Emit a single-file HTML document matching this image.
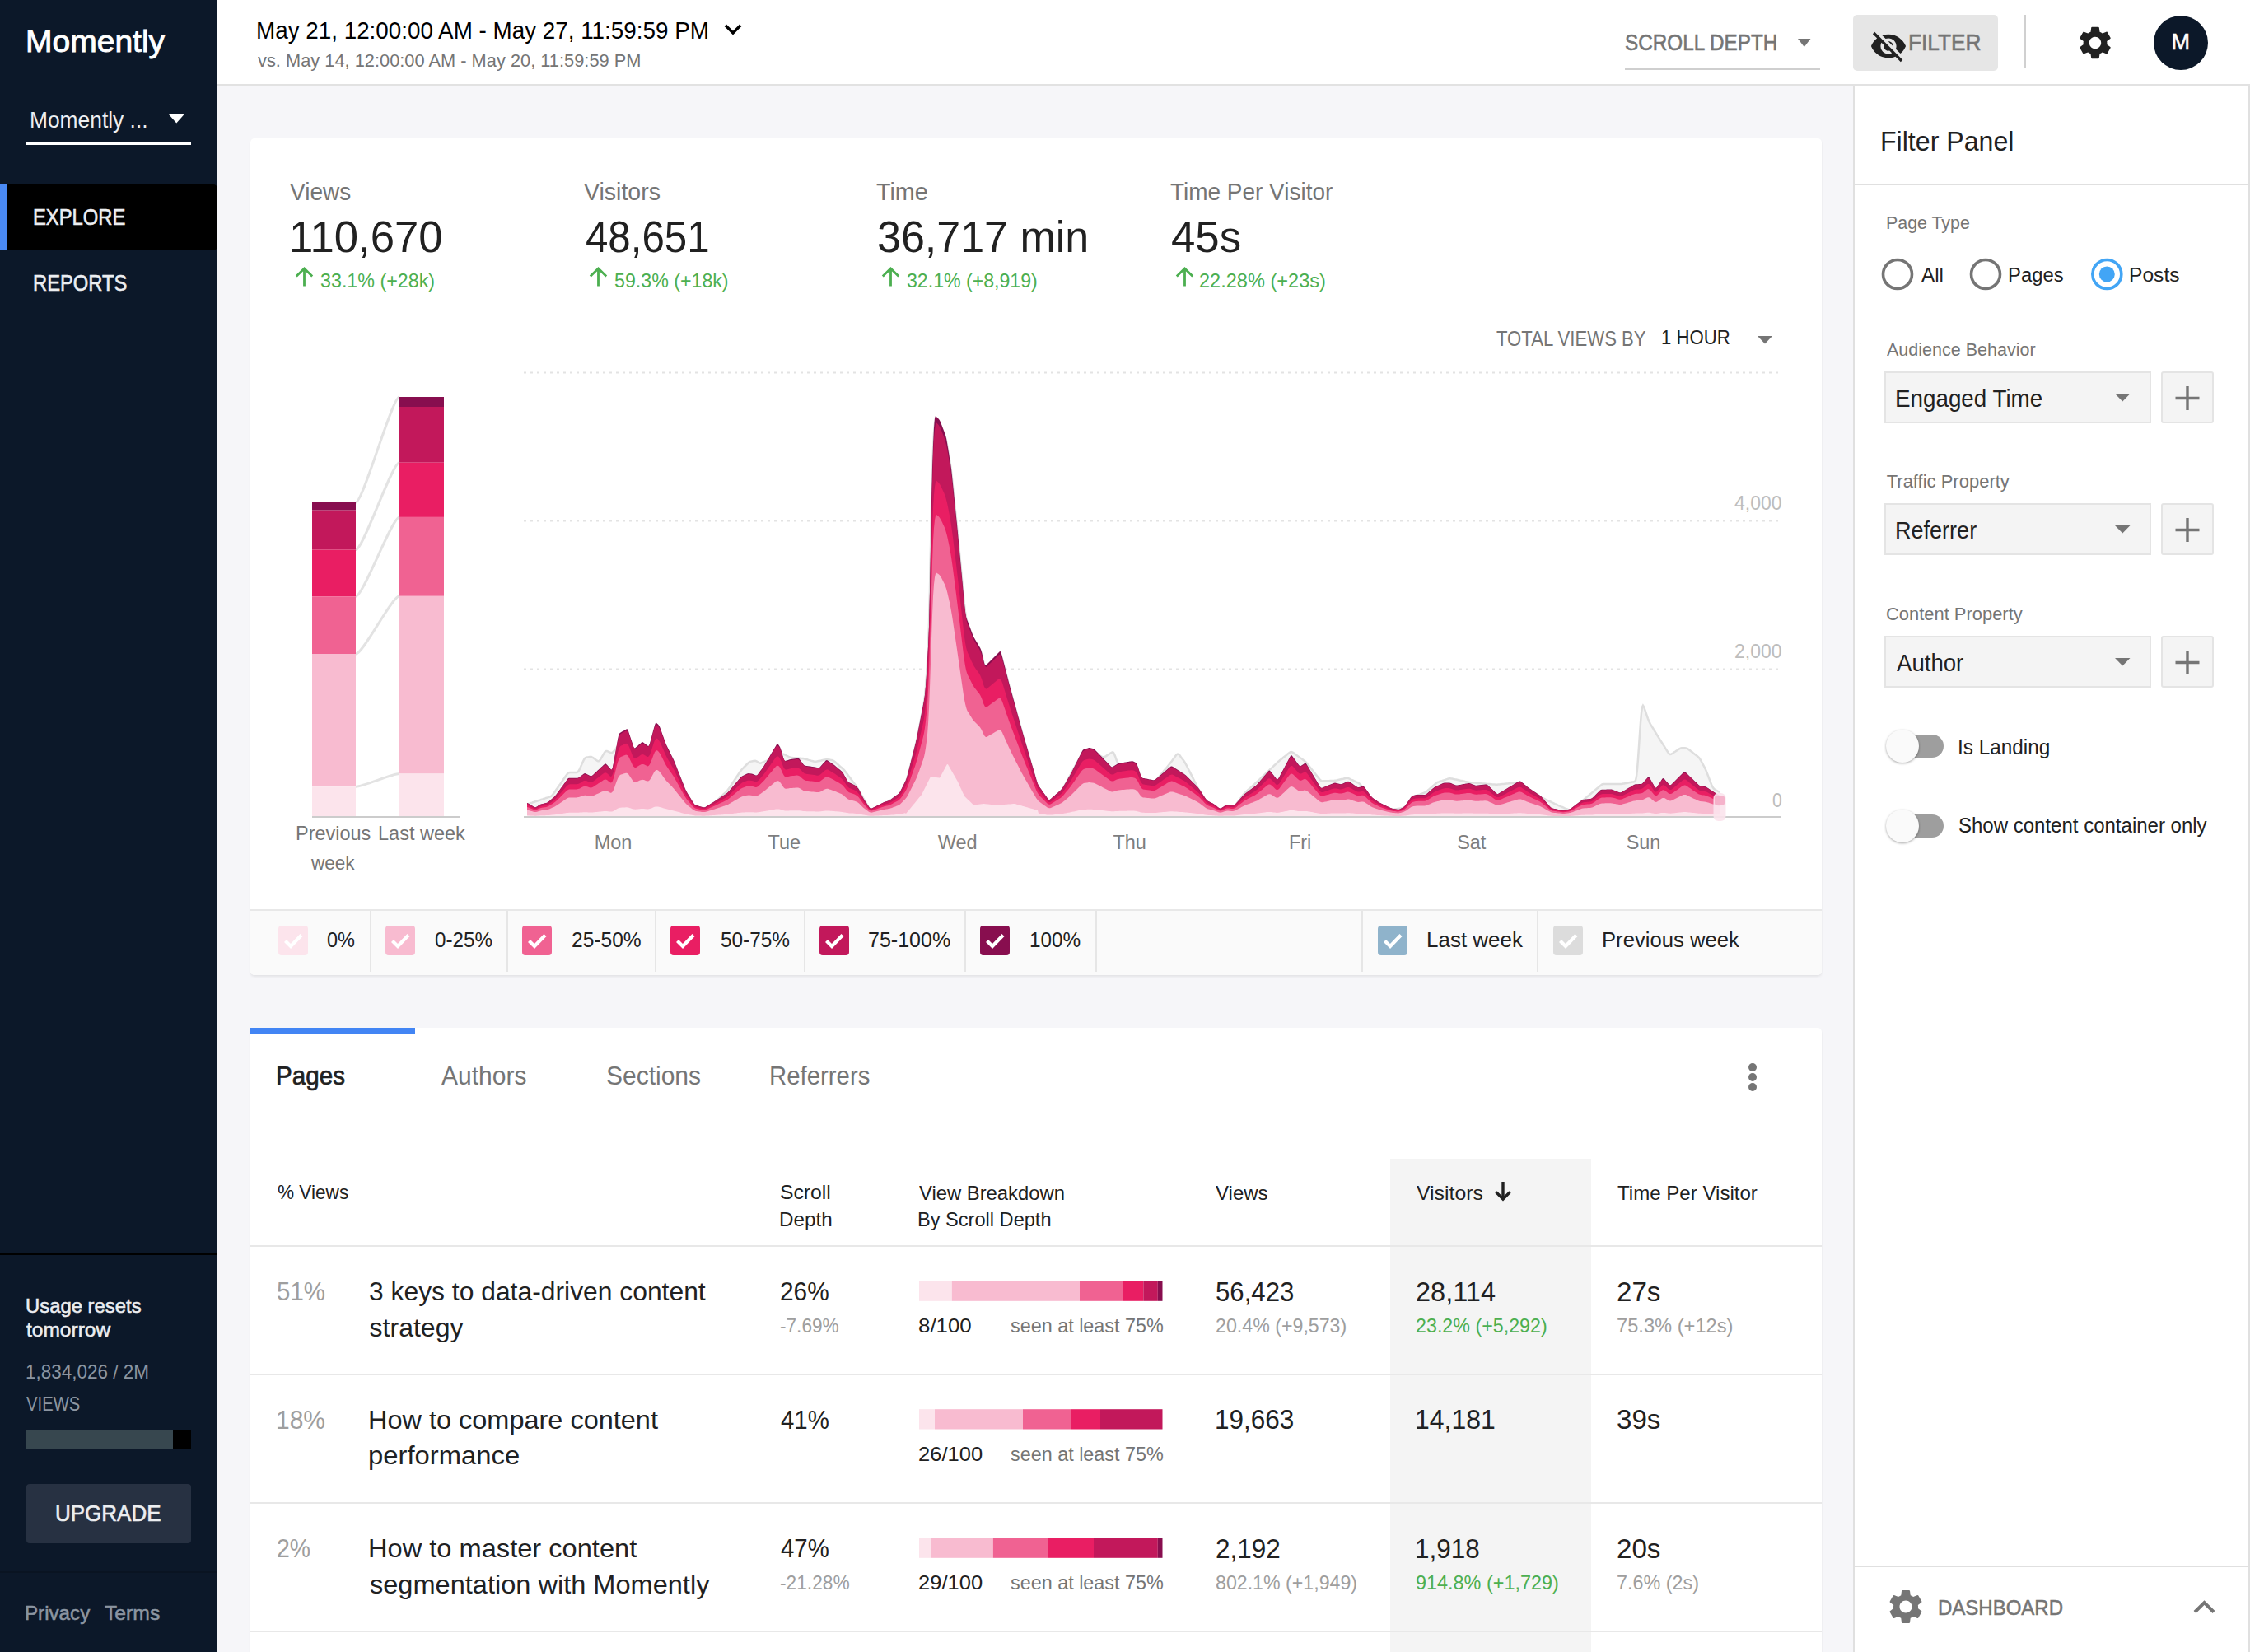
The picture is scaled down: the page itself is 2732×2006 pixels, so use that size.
<!DOCTYPE html>
<html><head><meta charset="utf-8"><title>Momently</title>
<style>
*{margin:0;padding:0;box-sizing:border-box}
html,body{width:2732px;height:2006px;overflow:hidden;background:#f6f6f9;font-family:"Liberation Sans",sans-serif;color:#212121;position:relative}
.a{position:absolute;white-space:nowrap}

</style></head><body>
<div class="a" style="left:0px;top:0px;width:264px;height:2006px;background:#0c1829;"></div>
<div class="a" style="left:264px;top:0px;width:2468px;height:102px;background:#fff;"></div>
<div class="a" style="left:264px;top:102px;width:2468px;height:2px;background:#e2e2e2;"></div>
<div class="a" style="left:2250px;top:104px;width:482px;height:1902px;background:#fff;border-left:2px solid #e0e0e0;border-right:2px solid #e0e0e0"></div>
<div class="a" style="left:304px;top:168px;width:1908px;height:1016px;background:#fff;border-radius:5px;box-shadow:0 2px 3px rgba(0,0,0,0.08)"></div>
<div class="a" style="left:304px;top:1248px;width:1908px;height:900px;background:#fff;border-radius:5px;box-shadow:0 2px 3px rgba(0,0,0,0.08)"></div>
<div class="a" style="left:304px;top:1104px;width:1908px;height:80px;background:#fafafa;border-top:2px solid #e8e8e8;border-radius:0 0 5px 5px"></div>
<div class="a" style="left:0px;top:224px;width:264px;height:80px;background:#000;border-radius:0 5px 5px 0"></div>
<div class="a" style="left:0px;top:1521px;width:264px;height:3px;background:#000;"></div>
<div class="a" style="left:32px;top:1736px;width:200px;height:24px;background:#37474f;"></div>
<div class="a" style="left:32px;top:1802px;width:200px;height:72px;background:#273142;border-radius:4px"></div>
<div class="a" style="left:0px;top:1908px;width:264px;height:2px;background:#0a1422;"></div>
<div class="a" style="left:2250px;top:18px;width:176px;height:68px;background:#e6e6e6;border-radius:5px"></div>
<div class="a" style="left:1688px;top:1407px;width:244px;height:700px;background:#f4f4f4;"></div>
<div class="a" style="left:0px;top:224px;width:8px;height:80px;background:#4a8af4;"></div>
<div class="a" style="left:210px;top:1736px;width:22px;height:24px;background:#000;"></div>
<svg class="a" style="left:0;top:0" width="2732" height="2006"><line x1="636" y1="452.5" x2="2163" y2="452.5" stroke="#e3e3e3" stroke-width="2" stroke-dasharray="3 5"/>
<line x1="636" y1="632.5" x2="2163" y2="632.5" stroke="#e3e3e3" stroke-width="2" stroke-dasharray="3 5"/>
<line x1="636" y1="812.5" x2="2163" y2="812.5" stroke="#e3e3e3" stroke-width="2" stroke-dasharray="3 5"/>
<polygon points="640,992.0 640.0,976.5 641.0,976.3 642.0,976.0 643.0,975.7 644.0,975.3 645.0,975.0 646.0,974.7 647.0,974.3 648.0,974.0 649.0,973.7 650.0,973.3 651.0,973.0 652.0,972.7 653.0,972.4 654.0,972.0 655.0,971.7 656.0,971.4 657.0,971.0 658.0,970.7 659.0,970.4 660.0,970.0 661.0,969.7 662.0,969.4 663.0,969.0 664.0,968.7 665.0,968.4 666.0,968.0 667.0,967.7 668.0,967.4 669.0,966.9 670.0,966.2 671.0,965.1 672.0,963.8 673.0,962.4 674.0,961.0 675.0,959.5 676.0,958.1 677.0,956.7 678.0,955.2 679.0,953.8 680.0,952.4 681.0,950.9 682.0,949.5 683.0,948.0 684.0,946.6 685.0,945.2 686.0,943.7 687.0,942.3 688.0,940.9 689.0,939.6 690.0,938.6 691.0,938.2 692.0,938.0 693.0,938.0 694.0,938.0 695.0,938.0 696.0,938.0 697.0,938.0 698.0,938.0 699.0,938.0 700.0,938.0 701.0,937.7 702.0,937.0 703.0,935.5 704.0,933.5 705.0,931.2 706.0,929.0 707.0,926.7 708.0,924.5 709.0,922.5 710.0,920.9 711.0,920.1 712.0,919.7 713.0,919.5 714.0,919.4 715.0,919.2 716.0,919.0 717.0,919.0 718.0,919.1 719.0,919.5 720.0,920.1 721.0,920.8 722.0,921.5 723.0,922.2 724.0,923.0 725.0,923.7 726.0,924.2 727.0,924.2 728.0,923.6 729.0,922.2 730.0,920.6 731.0,918.8 732.0,917.1 733.0,915.3 734.0,913.7 735.0,912.6 736.0,912.1 737.0,912.1 738.0,912.4 739.0,912.9 740.0,913.3 741.0,913.7 742.0,914.0 743.0,914.0 744.0,913.5 745.0,912.5 746.0,911.3 747.0,910.0 748.0,908.8 749.0,907.5 750.0,906.2 751.0,905.0 752.0,903.6 753.0,902.3 754.0,900.9 755.0,899.5 756.0,898.2 757.0,896.8 758.0,895.5 759.0,894.1 760.0,892.7 761.0,891.8 762.0,891.8 763.0,893.2 764.0,895.5 765.0,898.2 766.0,901.0 767.0,903.8 768.0,906.5 769.0,908.9 770.0,910.4 771.0,910.8 772.0,910.4 773.0,909.6 774.0,908.8 775.0,908.0 776.0,907.2 777.0,906.4 778.0,905.6 779.0,905.0 780.0,904.7 781.0,904.9 782.0,905.5 783.0,906.2 784.0,907.0 785.0,907.8 786.0,908.5 787.0,908.7 788.0,908.0 789.0,905.7 790.0,902.5 791.0,898.8 792.0,895.0 793.0,891.2 794.0,887.5 795.0,884.4 796.0,882.6 797.0,882.7 798.0,884.1 799.0,886.1 800.0,888.2 801.0,890.2 802.0,892.3 803.0,894.3 804.0,896.4 805.0,898.4 806.0,900.5 807.0,902.5 808.0,904.6 809.0,906.6 810.0,908.7 811.0,910.7 812.0,912.7 813.0,914.8 814.0,916.8 815.0,918.9 816.0,920.9 817.0,923.0 818.0,925.2 819.0,927.6 820.0,930.0 821.0,932.6 822.0,935.1 823.0,937.6 824.0,940.1 825.0,942.6 826.0,945.1 827.0,947.7 828.0,950.2 829.0,952.7 830.0,955.2 831.0,957.7 832.0,960.0 833.0,962.2 834.0,964.0 835.0,965.7 836.0,967.3 837.0,968.9 838.0,970.5 839.0,972.1 840.0,973.7 841.0,975.3 842.0,976.8 843.0,978.1 844.0,978.9 845.0,979.4 846.0,979.7 847.0,979.9 848.0,980.2 849.0,980.4 850.0,980.7 851.0,980.9 852.0,981.2 853.0,981.4 854.0,981.6 855.0,981.6 856.0,981.4 857.0,981.0 858.0,980.4 859.0,979.8 860.0,979.3 861.0,978.7 862.0,978.1 863.0,977.5 864.0,976.9 865.0,976.3 866.0,975.7 867.0,975.1 868.0,974.3 869.0,973.4 870.0,972.5 871.0,971.5 872.0,970.6 873.0,969.7 874.0,968.7 875.0,967.8 876.0,966.8 877.0,965.9 878.0,965.0 879.0,964.0 880.0,963.1 881.0,962.2 882.0,961.2 883.0,960.1 884.0,958.8 885.0,957.4 886.0,956.0 887.0,954.5 888.0,953.0 889.0,951.5 890.0,950.0 891.0,948.5 892.0,947.0 893.0,945.5 894.0,944.0 895.0,942.5 896.0,941.0 897.0,939.5 898.0,938.0 899.0,936.6 900.0,935.2 901.0,934.1 902.0,933.0 903.0,932.0 904.0,931.0 905.0,930.0 906.0,929.0 907.0,928.0 908.0,927.0 909.0,926.1 910.0,925.4 911.0,924.9 912.0,924.6 913.0,924.4 914.0,924.2 915.0,924.0 916.0,923.9 917.0,923.8 918.0,924.1 919.0,924.6 920.0,925.3 921.0,926.0 922.0,926.5 923.0,926.7 924.0,926.5 925.0,926.1 926.0,925.7 927.0,925.3 928.0,924.9 929.0,924.5 930.0,924.1 931.0,923.7 932.0,923.2 933.0,922.8 934.0,922.4 935.0,922.0 936.0,921.5 937.0,921.1 938.0,920.6 939.0,920.1 940.0,919.7 941.0,919.2 942.0,918.7 943.0,918.3 944.0,917.8 945.0,917.3 946.0,916.9 947.0,916.4 948.0,915.9 949.0,915.6 950.0,915.4 951.0,915.6 952.0,916.0 953.0,916.5 954.0,917.0 955.0,917.5 956.0,918.0 957.0,918.5 958.0,919.0 959.0,919.5 960.0,919.8 961.0,920.0 962.0,920.1 963.0,920.2 964.0,920.3 965.0,920.3 966.0,920.4 967.0,920.5 968.0,920.5 969.0,920.6 970.0,920.7 971.0,920.7 972.0,920.8 973.0,920.9 974.0,921.0 975.0,921.1 976.0,921.3 977.0,921.5 978.0,921.8 979.0,922.1 980.0,922.3 981.0,922.6 982.0,922.9 983.0,923.1 984.0,923.4 985.0,923.7 986.0,923.9 987.0,924.2 988.0,924.5 989.0,924.7 990.0,924.8 991.0,924.7 992.0,924.6 993.0,924.3 994.0,924.1 995.0,923.9 996.0,923.7 997.0,923.5 998.0,923.2 999.0,923.0 1000.0,922.8 1001.0,922.6 1002.0,922.4 1003.0,922.2 1004.0,922.2 1005.0,922.3 1006.0,922.4 1007.0,922.6 1008.0,922.8 1009.0,923.0 1010.0,923.1 1011.0,923.4 1012.0,923.8 1013.0,924.5 1014.0,925.3 1015.0,926.2 1016.0,927.0 1017.0,927.9 1018.0,928.8 1019.0,929.7 1020.0,930.6 1021.0,931.5 1022.0,932.3 1023.0,933.2 1024.0,934.2 1025.0,935.2 1026.0,936.4 1027.0,937.7 1028.0,939.0 1029.0,940.3 1030.0,941.7 1031.0,943.0 1032.0,944.3 1033.0,945.7 1034.0,947.0 1035.0,948.3 1036.0,949.7 1037.0,951.0 1038.0,952.3 1039.0,953.7 1040.0,955.2 1041.0,956.8 1042.0,958.5 1043.0,960.2 1044.0,961.9 1045.0,963.6 1046.0,965.4 1047.0,967.1 1048.0,968.8 1049.0,970.5 1050.0,972.3 1051.0,974.0 1052.0,975.7 1053.0,977.4 1054.0,979.2 1055.0,980.8 1056.0,982.2 1057.0,983.1 1058.0,983.2 1059.0,983.0 1060.0,982.5 1061.0,982.0 1062.0,981.5 1063.0,981.0 1064.0,980.6 1065.0,980.1 1066.0,979.6 1067.0,979.1 1068.0,978.7 1069.0,978.2 1070.0,977.7 1071.0,977.2 1072.0,976.8 1073.0,976.3 1074.0,975.7 1075.0,975.2 1076.0,974.6 1077.0,974.0 1078.0,973.4 1079.0,972.8 1080.0,972.2 1081.0,971.6 1082.0,971.1 1083.0,970.5 1084.0,969.9 1085.0,969.3 1086.0,968.7 1087.0,968.1 1088.0,967.5 1089.0,966.9 1090.0,966.4 1091.0,965.7 1092.0,964.7 1093.0,963.3 1094.0,961.5 1095.0,959.5 1096.0,957.5 1097.0,955.5 1098.0,953.5 1099.0,951.4 1100.0,949.0 1101.0,946.2 1102.0,942.8 1103.0,939.1 1104.0,935.2 1105.0,931.4 1106.0,927.5 1107.0,923.6 1108.0,919.8 1109.0,915.9 1110.0,912.1 1111.0,908.1 1112.0,904.0 1113.0,899.5 1114.0,894.7 1115.0,889.6 1116.0,884.4 1117.0,879.2 1118.0,874.0 1119.0,868.8 1120.0,863.7 1121.0,858.5 1122.0,852.8 1123.0,845.3 1124.0,834.7 1125.0,820.7 1126.0,804.7 1127.0,784.6 1128.0,756.6 1129.0,716.0 1130.0,666.7 1131.0,617.3 1132.0,576.5 1133.0,546.7 1134.0,526.6 1135.0,514.8 1136.0,509.9 1137.0,509.3 1138.0,510.2 1139.0,511.1 1140.0,512.2 1141.0,513.7 1142.0,515.7 1143.0,518.1 1144.0,520.7 1145.0,523.3 1146.0,525.8 1147.0,528.5 1148.0,531.6 1149.0,535.6 1150.0,540.7 1151.0,546.5 1152.0,552.6 1153.0,558.7 1154.0,565.3 1155.0,572.7 1156.0,581.3 1157.0,590.8 1158.0,600.6 1159.0,610.5 1160.0,620.4 1161.0,630.2 1162.0,640.2 1163.0,650.3 1164.0,660.7 1165.0,671.3 1166.0,681.9 1167.0,692.6 1168.0,703.2 1169.0,713.8 1170.0,724.5 1171.0,734.6 1172.0,743.3 1173.0,749.7 1174.0,754.0 1175.0,757.1 1176.0,759.9 1177.0,762.6 1178.0,765.3 1179.0,768.1 1180.0,770.8 1181.0,773.4 1182.0,775.7 1183.0,777.6 1184.0,779.4 1185.0,780.9 1186.0,782.5 1187.0,784.1 1188.0,785.7 1189.0,787.3 1190.0,789.1 1191.0,791.5 1192.0,794.7 1193.0,798.7 1194.0,803.1 1195.0,806.9 1196.0,809.6 1197.0,810.4 1198.0,810.0 1199.0,809.0 1200.0,808.0 1201.0,807.0 1202.0,806.0 1203.0,805.0 1204.0,804.0 1205.0,803.0 1206.0,802.0 1207.0,801.0 1208.0,800.0 1209.0,799.0 1210.0,798.0 1211.0,797.0 1212.0,796.0 1213.0,795.0 1214.0,794.5 1215.0,795.1 1216.0,797.4 1217.0,800.6 1218.0,804.5 1219.0,808.3 1220.0,812.1 1221.0,815.9 1222.0,819.7 1223.0,823.5 1224.0,827.4 1225.0,831.2 1226.0,834.9 1227.0,838.6 1228.0,842.3 1229.0,845.9 1230.0,849.5 1231.0,853.2 1232.0,856.8 1233.0,860.4 1234.0,864.0 1235.0,867.7 1236.0,871.3 1237.0,874.9 1238.0,878.6 1239.0,882.2 1240.0,885.8 1241.0,889.4 1242.0,893.0 1243.0,896.5 1244.0,899.9 1245.0,903.4 1246.0,906.8 1247.0,910.2 1248.0,913.7 1249.0,917.1 1250.0,920.6 1251.0,924.0 1252.0,927.5 1253.0,930.9 1254.0,934.3 1255.0,937.8 1256.0,941.2 1257.0,944.7 1258.0,948.1 1259.0,951.3 1260.0,954.1 1261.0,956.2 1262.0,957.8 1263.0,959.2 1264.0,960.5 1265.0,961.9 1266.0,963.3 1267.0,964.7 1268.0,966.1 1269.0,967.5 1270.0,968.9 1271.0,970.3 1272.0,971.6 1273.0,972.5 1274.0,972.9 1275.0,972.7 1276.0,971.9 1277.0,971.0 1278.0,970.1 1279.0,969.2 1280.0,968.3 1281.0,967.4 1282.0,966.6 1283.0,965.7 1284.0,964.8 1285.0,963.9 1286.0,963.0 1287.0,962.1 1288.0,961.1 1289.0,959.9 1290.0,958.5 1291.0,956.8 1292.0,955.0 1293.0,953.2 1294.0,951.3 1295.0,949.5 1296.0,947.7 1297.0,945.8 1298.0,944.0 1299.0,942.1 1300.0,940.3 1301.0,938.4 1302.0,936.6 1303.0,934.7 1304.0,932.9 1305.0,931.1 1306.0,929.2 1307.0,927.4 1308.0,925.5 1309.0,923.7 1310.0,921.8 1311.0,920.0 1312.0,918.2 1313.0,916.4 1314.0,914.7 1315.0,913.5 1316.0,912.7 1317.0,912.2 1318.0,911.8 1319.0,911.4 1320.0,911.0 1321.0,910.7 1322.0,910.5 1323.0,910.5 1324.0,910.9 1325.0,911.4 1326.0,912.0 1327.0,912.5 1328.0,913.1 1329.0,913.7 1330.0,914.3 1331.0,914.8 1332.0,915.4 1333.0,916.0 1334.0,916.6 1335.0,917.1 1336.0,917.7 1337.0,918.3 1338.0,918.9 1339.0,919.3 1340.0,919.5 1341.0,919.2 1342.0,918.7 1343.0,918.1 1344.0,917.4 1345.0,916.8 1346.0,916.1 1347.0,915.5 1348.0,914.8 1349.0,914.2 1350.0,913.6 1351.0,913.4 1352.0,914.0 1353.0,915.8 1354.0,918.2 1355.0,921.1 1356.0,923.8 1357.0,926.2 1358.0,927.9 1359.0,928.6 1360.0,928.7 1361.0,928.6 1362.0,928.5 1363.0,928.4 1364.0,928.3 1365.0,928.2 1366.0,928.1 1367.0,928.0 1368.0,927.8 1369.0,927.7 1370.0,927.6 1371.0,927.5 1372.0,927.4 1373.0,927.3 1374.0,927.3 1375.0,927.7 1376.0,928.6 1377.0,930.1 1378.0,931.9 1379.0,933.7 1380.0,935.6 1381.0,937.5 1382.0,939.3 1383.0,941.2 1384.0,943.1 1385.0,944.8 1386.0,946.1 1387.0,946.9 1388.0,947.3 1389.0,947.6 1390.0,947.7 1391.0,947.9 1392.0,948.1 1393.0,948.3 1394.0,948.5 1395.0,948.7 1396.0,948.9 1397.0,949.1 1398.0,949.3 1399.0,949.5 1400.0,949.6 1401.0,949.6 1402.0,949.2 1403.0,948.4 1404.0,947.3 1405.0,946.1 1406.0,944.9 1407.0,943.7 1408.0,942.4 1409.0,941.2 1410.0,940.0 1411.0,938.8 1412.0,937.6 1413.0,936.3 1414.0,935.1 1415.0,933.9 1416.0,932.7 1417.0,931.5 1418.0,930.2 1419.0,929.0 1420.0,927.8 1421.0,926.6 1422.0,925.3 1423.0,924.0 1424.0,922.6 1425.0,921.3 1426.0,919.9 1427.0,918.5 1428.0,917.1 1429.0,916.0 1430.0,915.5 1431.0,915.8 1432.0,916.7 1433.0,918.0 1434.0,919.4 1435.0,920.7 1436.0,922.0 1437.0,923.3 1438.0,924.7 1439.0,926.3 1440.0,928.1 1441.0,930.0 1442.0,932.0 1443.0,934.0 1444.0,935.9 1445.0,937.9 1446.0,939.9 1447.0,941.9 1448.0,943.9 1449.0,945.9 1450.0,947.9 1451.0,949.9 1452.0,951.8 1453.0,953.8 1454.0,955.8 1455.0,957.7 1456.0,959.5 1457.0,961.1 1458.0,962.7 1459.0,964.3 1460.0,965.8 1461.0,967.4 1462.0,968.9 1463.0,970.4 1464.0,971.9 1465.0,973.2 1466.0,974.2 1467.0,975.0 1468.0,975.6 1469.0,976.3 1470.0,976.9 1471.0,977.5 1472.0,978.1 1473.0,978.7 1474.0,979.3 1475.0,979.9 1476.0,980.5 1477.0,981.1 1478.0,981.7 1479.0,982.4 1480.0,982.9 1481.0,983.4 1482.0,983.6 1483.0,983.6 1484.0,983.4 1485.0,983.2 1486.0,983.0 1487.0,982.7 1488.0,982.5 1489.0,982.3 1490.0,982.0 1491.0,981.8 1492.0,981.5 1493.0,981.3 1494.0,981.1 1495.0,980.8 1496.0,980.6 1497.0,980.3 1498.0,979.8 1499.0,978.9 1500.0,977.8 1501.0,976.5 1502.0,975.2 1503.0,973.8 1504.0,972.5 1505.0,971.2 1506.0,969.8 1507.0,968.5 1508.0,967.1 1509.0,965.8 1510.0,964.5 1511.0,963.3 1512.0,962.3 1513.0,961.3 1514.0,960.4 1515.0,959.5 1516.0,958.6 1517.0,957.7 1518.0,956.9 1519.0,956.0 1520.0,955.1 1521.0,954.2 1522.0,953.3 1523.0,952.4 1524.0,951.5 1525.0,950.6 1526.0,949.7 1527.0,948.8 1528.0,947.8 1529.0,946.8 1530.0,945.9 1531.0,944.9 1532.0,944.0 1533.0,943.0 1534.0,942.1 1535.0,941.1 1536.0,940.2 1537.0,939.2 1538.0,938.2 1539.0,937.3 1540.0,936.3 1541.0,935.4 1542.0,934.4 1543.0,933.5 1544.0,932.6 1545.0,931.6 1546.0,930.7 1547.0,929.7 1548.0,928.8 1549.0,927.9 1550.0,926.9 1551.0,926.0 1552.0,925.0 1553.0,924.2 1554.0,923.3 1555.0,922.5 1556.0,921.7 1557.0,920.9 1558.0,920.1 1559.0,919.3 1560.0,918.5 1561.0,917.7 1562.0,916.9 1563.0,916.1 1564.0,915.3 1565.0,914.5 1566.0,913.8 1567.0,913.2 1568.0,913.0 1569.0,913.3 1570.0,913.9 1571.0,914.6 1572.0,915.3 1573.0,916.1 1574.0,916.8 1575.0,917.5 1576.0,918.2 1577.0,918.9 1578.0,919.7 1579.0,920.4 1580.0,921.1 1581.0,921.8 1582.0,922.5 1583.0,923.3 1584.0,924.0 1585.0,924.9 1586.0,925.9 1587.0,927.0 1588.0,928.3 1589.0,929.5 1590.0,930.8 1591.0,932.0 1592.0,933.3 1593.0,934.6 1594.0,935.8 1595.0,937.1 1596.0,938.3 1597.0,939.6 1598.0,940.9 1599.0,942.1 1600.0,943.4 1601.0,944.6 1602.0,945.9 1603.0,947.0 1604.0,947.8 1605.0,948.2 1606.0,948.4 1607.0,948.3 1608.0,948.3 1609.0,948.3 1610.0,948.3 1611.0,948.2 1612.0,948.2 1613.0,948.2 1614.0,948.2 1615.0,948.1 1616.0,948.1 1617.0,948.1 1618.0,948.1 1619.0,948.0 1620.0,948.0 1621.0,947.8 1622.0,947.7 1623.0,947.5 1624.0,947.2 1625.0,947.0 1626.0,946.8 1627.0,946.6 1628.0,946.3 1629.0,946.1 1630.0,945.9 1631.0,945.7 1632.0,945.4 1633.0,945.2 1634.0,945.0 1635.0,944.8 1636.0,944.8 1637.0,945.0 1638.0,945.4 1639.0,945.8 1640.0,946.3 1641.0,946.8 1642.0,947.2 1643.0,947.7 1644.0,948.2 1645.0,948.6 1646.0,949.1 1647.0,949.6 1648.0,950.0 1649.0,950.5 1650.0,951.1 1651.0,951.9 1652.0,952.9 1653.0,954.1 1654.0,955.3 1655.0,956.6 1656.0,957.9 1657.0,959.1 1658.0,960.4 1659.0,961.6 1660.0,962.9 1661.0,964.2 1662.0,965.4 1663.0,966.7 1664.0,968.0 1665.0,969.1 1666.0,970.1 1667.0,971.0 1668.0,971.7 1669.0,972.5 1670.0,973.2 1671.0,973.9 1672.0,974.6 1673.0,975.3 1674.0,976.0 1675.0,976.7 1676.0,977.2 1677.0,977.7 1678.0,978.1 1679.0,978.5 1680.0,978.9 1681.0,979.3 1682.0,979.7 1683.0,980.1 1684.0,980.6 1685.0,981.0 1686.0,981.4 1687.0,981.8 1688.0,982.2 1689.0,982.5 1690.0,982.8 1691.0,982.8 1692.0,982.7 1693.0,982.6 1694.0,982.5 1695.0,982.4 1696.0,982.2 1697.0,982.1 1698.0,982.0 1699.0,981.8 1700.0,981.7 1701.0,981.6 1702.0,981.5 1703.0,981.3 1704.0,981.1 1705.0,980.7 1706.0,980.0 1707.0,978.8 1708.0,977.5 1709.0,976.0 1710.0,974.5 1711.0,973.0 1712.0,971.5 1713.0,970.1 1714.0,968.9 1715.0,968.1 1716.0,967.5 1717.0,967.1 1718.0,966.7 1719.0,966.3 1720.0,966.0 1721.0,965.6 1722.0,965.3 1723.0,964.9 1724.0,964.6 1725.0,964.2 1726.0,963.8 1727.0,963.5 1728.0,963.1 1729.0,962.8 1730.0,962.3 1731.0,961.8 1732.0,961.2 1733.0,960.4 1734.0,959.5 1735.0,958.6 1736.0,957.8 1737.0,956.9 1738.0,956.0 1739.0,955.2 1740.0,954.3 1741.0,953.5 1742.0,952.6 1743.0,951.7 1744.0,950.9 1745.0,950.2 1746.0,949.7 1747.0,949.4 1748.0,949.0 1749.0,948.7 1750.0,948.4 1751.0,948.1 1752.0,947.7 1753.0,947.4 1754.0,947.1 1755.0,946.8 1756.0,946.4 1757.0,946.1 1758.0,945.8 1759.0,945.5 1760.0,945.3 1761.0,945.3 1762.0,945.4 1763.0,945.6 1764.0,945.8 1765.0,946.0 1766.0,946.2 1767.0,946.4 1768.0,946.6 1769.0,946.8 1770.0,947.0 1771.0,947.3 1772.0,947.5 1773.0,947.7 1774.0,947.9 1775.0,948.1 1776.0,948.3 1777.0,948.5 1778.0,948.7 1779.0,949.0 1780.0,949.2 1781.0,949.4 1782.0,949.6 1783.0,949.8 1784.0,950.0 1785.0,950.1 1786.0,950.2 1787.0,950.3 1788.0,950.3 1789.0,950.4 1790.0,950.5 1791.0,950.6 1792.0,950.7 1793.0,950.8 1794.0,950.9 1795.0,950.9 1796.0,951.0 1797.0,951.1 1798.0,951.2 1799.0,951.3 1800.0,951.4 1801.0,951.4 1802.0,951.5 1803.0,951.6 1804.0,951.7 1805.0,951.8 1806.0,951.9 1807.0,952.0 1808.0,952.0 1809.0,952.1 1810.0,952.2 1811.0,952.3 1812.0,952.4 1813.0,952.5 1814.0,952.5 1815.0,952.6 1816.0,952.7 1817.0,952.7 1818.0,952.7 1819.0,952.6 1820.0,952.5 1821.0,952.4 1822.0,952.3 1823.0,952.2 1824.0,952.1 1825.0,952.0 1826.0,951.9 1827.0,951.8 1828.0,951.7 1829.0,951.6 1830.0,951.5 1831.0,951.4 1832.0,951.3 1833.0,951.2 1834.0,951.1 1835.0,951.0 1836.0,950.9 1837.0,950.8 1838.0,950.7 1839.0,950.6 1840.0,950.5 1841.0,950.4 1842.0,950.3 1843.0,950.2 1844.0,950.2 1845.0,950.3 1846.0,950.6 1847.0,951.2 1848.0,951.9 1849.0,952.6 1850.0,953.4 1851.0,954.1 1852.0,954.9 1853.0,955.6 1854.0,956.4 1855.0,957.1 1856.0,957.8 1857.0,958.5 1858.0,959.2 1859.0,959.9 1860.0,960.6 1861.0,961.3 1862.0,961.9 1863.0,962.6 1864.0,963.3 1865.0,964.0 1866.0,964.7 1867.0,965.3 1868.0,966.0 1869.0,966.7 1870.0,967.4 1871.0,968.0 1872.0,968.5 1873.0,969.0 1874.0,969.5 1875.0,969.9 1876.0,970.4 1877.0,970.9 1878.0,971.3 1879.0,971.8 1880.0,972.3 1881.0,972.8 1882.0,973.2 1883.0,973.7 1884.0,974.2 1885.0,974.7 1886.0,975.1 1887.0,975.6 1888.0,976.1 1889.0,976.5 1890.0,977.0 1891.0,977.4 1892.0,977.9 1893.0,978.3 1894.0,978.7 1895.0,979.1 1896.0,979.6 1897.0,980.0 1898.0,980.4 1899.0,980.8 1900.0,981.3 1901.0,981.7 1902.0,982.1 1903.0,982.5 1904.0,982.9 1905.0,983.3 1906.0,983.5 1907.0,983.3 1908.0,982.8 1909.0,982.0 1910.0,981.3 1911.0,980.5 1912.0,979.7 1913.0,978.9 1914.0,978.1 1915.0,977.3 1916.0,976.5 1917.0,975.8 1918.0,975.0 1919.0,974.2 1920.0,973.4 1921.0,972.6 1922.0,971.8 1923.0,971.0 1924.0,970.2 1925.0,969.3 1926.0,968.5 1927.0,967.6 1928.0,966.8 1929.0,966.0 1930.0,965.1 1931.0,964.3 1932.0,963.5 1933.0,962.6 1934.0,961.8 1935.0,960.9 1936.0,960.1 1937.0,959.3 1938.0,958.4 1939.0,957.6 1940.0,956.8 1941.0,955.9 1942.0,955.1 1943.0,954.2 1944.0,953.4 1945.0,952.7 1946.0,952.2 1947.0,952.0 1948.0,951.9 1949.0,951.9 1950.0,951.9 1951.0,951.9 1952.0,951.9 1953.0,951.9 1954.0,951.9 1955.0,951.9 1956.0,951.9 1957.0,951.9 1958.0,951.9 1959.0,951.9 1960.0,951.9 1961.0,951.9 1962.0,951.9 1963.0,951.9 1964.0,951.9 1965.0,951.9 1966.0,951.9 1967.0,951.9 1968.0,951.9 1969.0,951.9 1970.0,951.8 1971.0,951.6 1972.0,951.5 1973.0,951.3 1974.0,951.1 1975.0,950.9 1976.0,950.7 1977.0,950.5 1978.0,950.3 1979.0,950.1 1980.0,950.0 1981.0,949.8 1982.0,949.6 1983.0,949.4 1984.0,949.2 1985.0,949.0 1986.0,947.5 1987.0,943.1 1988.0,934.0 1989.0,921.4 1990.0,906.8 1991.0,891.9 1992.0,877.6 1993.0,865.8 1994.0,858.6 1995.0,856.7 1996.0,858.2 1997.0,861.1 1998.0,864.0 1999.0,866.9 2000.0,869.8 2001.0,872.6 2002.0,875.2 2003.0,877.4 2004.0,879.3 2005.0,880.9 2006.0,882.6 2007.0,884.2 2008.0,885.8 2009.0,887.5 2010.0,889.1 2011.0,890.7 2012.0,892.4 2013.0,894.0 2014.0,895.6 2015.0,897.2 2016.0,898.8 2017.0,900.4 2018.0,902.0 2019.0,903.6 2020.0,905.1 2021.0,906.7 2022.0,908.3 2023.0,909.9 2024.0,911.5 2025.0,913.0 2026.0,914.5 2027.0,915.6 2028.0,916.0 2029.0,915.9 2030.0,915.3 2031.0,914.7 2032.0,914.0 2033.0,913.3 2034.0,912.7 2035.0,912.0 2036.0,911.4 2037.0,910.7 2038.0,910.0 2039.0,909.4 2040.0,908.9 2041.0,908.5 2042.0,908.3 2043.0,908.3 2044.0,908.3 2045.0,908.3 2046.0,908.3 2047.0,908.4 2048.0,908.6 2049.0,909.1 2050.0,909.7 2051.0,910.5 2052.0,911.3 2053.0,912.1 2054.0,912.8 2055.0,913.6 2056.0,914.4 2057.0,915.2 2058.0,916.0 2059.0,916.8 2060.0,917.6 2061.0,918.3 2062.0,919.2 2063.0,920.2 2064.0,921.5 2065.0,923.1 2066.0,924.9 2067.0,926.8 2068.0,928.6 2069.0,930.5 2070.0,932.4 2071.0,934.5 2072.0,936.9 2073.0,939.4 2074.0,942.0 2075.0,944.7 2076.0,947.3 2077.0,949.9 2078.0,952.5 2079.0,954.8 2080.0,956.6 2081.0,957.8 2082.0,958.6 2083.0,959.1 2084.0,959.7 2085.0,960.3 2086.0,960.9 2087.0,961.4 2088.0,961.7 2088,992.0" fill="#f5f5f5"/>
<polyline points="640.0,976.5 641.0,976.3 642.0,976.0 643.0,975.7 644.0,975.3 645.0,975.0 646.0,974.7 647.0,974.3 648.0,974.0 649.0,973.7 650.0,973.3 651.0,973.0 652.0,972.7 653.0,972.4 654.0,972.0 655.0,971.7 656.0,971.4 657.0,971.0 658.0,970.7 659.0,970.4 660.0,970.0 661.0,969.7 662.0,969.4 663.0,969.0 664.0,968.7 665.0,968.4 666.0,968.0 667.0,967.7 668.0,967.4 669.0,966.9 670.0,966.2 671.0,965.1 672.0,963.8 673.0,962.4 674.0,961.0 675.0,959.5 676.0,958.1 677.0,956.7 678.0,955.2 679.0,953.8 680.0,952.4 681.0,950.9 682.0,949.5 683.0,948.0 684.0,946.6 685.0,945.2 686.0,943.7 687.0,942.3 688.0,940.9 689.0,939.6 690.0,938.6 691.0,938.2 692.0,938.0 693.0,938.0 694.0,938.0 695.0,938.0 696.0,938.0 697.0,938.0 698.0,938.0 699.0,938.0 700.0,938.0 701.0,937.7 702.0,937.0 703.0,935.5 704.0,933.5 705.0,931.2 706.0,929.0 707.0,926.7 708.0,924.5 709.0,922.5 710.0,920.9 711.0,920.1 712.0,919.7 713.0,919.5 714.0,919.4 715.0,919.2 716.0,919.0 717.0,919.0 718.0,919.1 719.0,919.5 720.0,920.1 721.0,920.8 722.0,921.5 723.0,922.2 724.0,923.0 725.0,923.7 726.0,924.2 727.0,924.2 728.0,923.6 729.0,922.2 730.0,920.6 731.0,918.8 732.0,917.1 733.0,915.3 734.0,913.7 735.0,912.6 736.0,912.1 737.0,912.1 738.0,912.4 739.0,912.9 740.0,913.3 741.0,913.7 742.0,914.0 743.0,914.0 744.0,913.5 745.0,912.5 746.0,911.3 747.0,910.0 748.0,908.8 749.0,907.5 750.0,906.2 751.0,905.0 752.0,903.6 753.0,902.3 754.0,900.9 755.0,899.5 756.0,898.2 757.0,896.8 758.0,895.5 759.0,894.1 760.0,892.7 761.0,891.8 762.0,891.8 763.0,893.2 764.0,895.5 765.0,898.2 766.0,901.0 767.0,903.8 768.0,906.5 769.0,908.9 770.0,910.4 771.0,910.8 772.0,910.4 773.0,909.6 774.0,908.8 775.0,908.0 776.0,907.2 777.0,906.4 778.0,905.6 779.0,905.0 780.0,904.7 781.0,904.9 782.0,905.5 783.0,906.2 784.0,907.0 785.0,907.8 786.0,908.5 787.0,908.7 788.0,908.0 789.0,905.7 790.0,902.5 791.0,898.8 792.0,895.0 793.0,891.2 794.0,887.5 795.0,884.4 796.0,882.6 797.0,882.7 798.0,884.1 799.0,886.1 800.0,888.2 801.0,890.2 802.0,892.3 803.0,894.3 804.0,896.4 805.0,898.4 806.0,900.5 807.0,902.5 808.0,904.6 809.0,906.6 810.0,908.7 811.0,910.7 812.0,912.7 813.0,914.8 814.0,916.8 815.0,918.9 816.0,920.9 817.0,923.0 818.0,925.2 819.0,927.6 820.0,930.0 821.0,932.6 822.0,935.1 823.0,937.6 824.0,940.1 825.0,942.6 826.0,945.1 827.0,947.7 828.0,950.2 829.0,952.7 830.0,955.2 831.0,957.7 832.0,960.0 833.0,962.2 834.0,964.0 835.0,965.7 836.0,967.3 837.0,968.9 838.0,970.5 839.0,972.1 840.0,973.7 841.0,975.3 842.0,976.8 843.0,978.1 844.0,978.9 845.0,979.4 846.0,979.7 847.0,979.9 848.0,980.2 849.0,980.4 850.0,980.7 851.0,980.9 852.0,981.2 853.0,981.4 854.0,981.6 855.0,981.6 856.0,981.4 857.0,981.0 858.0,980.4 859.0,979.8 860.0,979.3 861.0,978.7 862.0,978.1 863.0,977.5 864.0,976.9 865.0,976.3 866.0,975.7 867.0,975.1 868.0,974.3 869.0,973.4 870.0,972.5 871.0,971.5 872.0,970.6 873.0,969.7 874.0,968.7 875.0,967.8 876.0,966.8 877.0,965.9 878.0,965.0 879.0,964.0 880.0,963.1 881.0,962.2 882.0,961.2 883.0,960.1 884.0,958.8 885.0,957.4 886.0,956.0 887.0,954.5 888.0,953.0 889.0,951.5 890.0,950.0 891.0,948.5 892.0,947.0 893.0,945.5 894.0,944.0 895.0,942.5 896.0,941.0 897.0,939.5 898.0,938.0 899.0,936.6 900.0,935.2 901.0,934.1 902.0,933.0 903.0,932.0 904.0,931.0 905.0,930.0 906.0,929.0 907.0,928.0 908.0,927.0 909.0,926.1 910.0,925.4 911.0,924.9 912.0,924.6 913.0,924.4 914.0,924.2 915.0,924.0 916.0,923.9 917.0,923.8 918.0,924.1 919.0,924.6 920.0,925.3 921.0,926.0 922.0,926.5 923.0,926.7 924.0,926.5 925.0,926.1 926.0,925.7 927.0,925.3 928.0,924.9 929.0,924.5 930.0,924.1 931.0,923.7 932.0,923.2 933.0,922.8 934.0,922.4 935.0,922.0 936.0,921.5 937.0,921.1 938.0,920.6 939.0,920.1 940.0,919.7 941.0,919.2 942.0,918.7 943.0,918.3 944.0,917.8 945.0,917.3 946.0,916.9 947.0,916.4 948.0,915.9 949.0,915.6 950.0,915.4 951.0,915.6 952.0,916.0 953.0,916.5 954.0,917.0 955.0,917.5 956.0,918.0 957.0,918.5 958.0,919.0 959.0,919.5 960.0,919.8 961.0,920.0 962.0,920.1 963.0,920.2 964.0,920.3 965.0,920.3 966.0,920.4 967.0,920.5 968.0,920.5 969.0,920.6 970.0,920.7 971.0,920.7 972.0,920.8 973.0,920.9 974.0,921.0 975.0,921.1 976.0,921.3 977.0,921.5 978.0,921.8 979.0,922.1 980.0,922.3 981.0,922.6 982.0,922.9 983.0,923.1 984.0,923.4 985.0,923.7 986.0,923.9 987.0,924.2 988.0,924.5 989.0,924.7 990.0,924.8 991.0,924.7 992.0,924.6 993.0,924.3 994.0,924.1 995.0,923.9 996.0,923.7 997.0,923.5 998.0,923.2 999.0,923.0 1000.0,922.8 1001.0,922.6 1002.0,922.4 1003.0,922.2 1004.0,922.2 1005.0,922.3 1006.0,922.4 1007.0,922.6 1008.0,922.8 1009.0,923.0 1010.0,923.1 1011.0,923.4 1012.0,923.8 1013.0,924.5 1014.0,925.3 1015.0,926.2 1016.0,927.0 1017.0,927.9 1018.0,928.8 1019.0,929.7 1020.0,930.6 1021.0,931.5 1022.0,932.3 1023.0,933.2 1024.0,934.2 1025.0,935.2 1026.0,936.4 1027.0,937.7 1028.0,939.0 1029.0,940.3 1030.0,941.7 1031.0,943.0 1032.0,944.3 1033.0,945.7 1034.0,947.0 1035.0,948.3 1036.0,949.7 1037.0,951.0 1038.0,952.3 1039.0,953.7 1040.0,955.2 1041.0,956.8 1042.0,958.5 1043.0,960.2 1044.0,961.9 1045.0,963.6 1046.0,965.4 1047.0,967.1 1048.0,968.8 1049.0,970.5 1050.0,972.3 1051.0,974.0 1052.0,975.7 1053.0,977.4 1054.0,979.2 1055.0,980.8 1056.0,982.2 1057.0,983.1 1058.0,983.2 1059.0,983.0 1060.0,982.5 1061.0,982.0 1062.0,981.5 1063.0,981.0 1064.0,980.6 1065.0,980.1 1066.0,979.6 1067.0,979.1 1068.0,978.7 1069.0,978.2 1070.0,977.7 1071.0,977.2 1072.0,976.8 1073.0,976.3 1074.0,975.7 1075.0,975.2 1076.0,974.6 1077.0,974.0 1078.0,973.4 1079.0,972.8 1080.0,972.2 1081.0,971.6 1082.0,971.1 1083.0,970.5 1084.0,969.9 1085.0,969.3 1086.0,968.7 1087.0,968.1 1088.0,967.5 1089.0,966.9 1090.0,966.4 1091.0,965.7 1092.0,964.7 1093.0,963.3 1094.0,961.5 1095.0,959.5 1096.0,957.5 1097.0,955.5 1098.0,953.5 1099.0,951.4 1100.0,949.0 1101.0,946.2 1102.0,942.8 1103.0,939.1 1104.0,935.2 1105.0,931.4 1106.0,927.5 1107.0,923.6 1108.0,919.8 1109.0,915.9 1110.0,912.1 1111.0,908.1 1112.0,904.0 1113.0,899.5 1114.0,894.7 1115.0,889.6 1116.0,884.4 1117.0,879.2 1118.0,874.0 1119.0,868.8 1120.0,863.7 1121.0,858.5 1122.0,852.8 1123.0,845.3 1124.0,834.7 1125.0,820.7 1126.0,804.7 1127.0,784.6 1128.0,756.6 1129.0,716.0 1130.0,666.7 1131.0,617.3 1132.0,576.5 1133.0,546.7 1134.0,526.6 1135.0,514.8 1136.0,509.9 1137.0,509.3 1138.0,510.2 1139.0,511.1 1140.0,512.2 1141.0,513.7 1142.0,515.7 1143.0,518.1 1144.0,520.7 1145.0,523.3 1146.0,525.8 1147.0,528.5 1148.0,531.6 1149.0,535.6 1150.0,540.7 1151.0,546.5 1152.0,552.6 1153.0,558.7 1154.0,565.3 1155.0,572.7 1156.0,581.3 1157.0,590.8 1158.0,600.6 1159.0,610.5 1160.0,620.4 1161.0,630.2 1162.0,640.2 1163.0,650.3 1164.0,660.7 1165.0,671.3 1166.0,681.9 1167.0,692.6 1168.0,703.2 1169.0,713.8 1170.0,724.5 1171.0,734.6 1172.0,743.3 1173.0,749.7 1174.0,754.0 1175.0,757.1 1176.0,759.9 1177.0,762.6 1178.0,765.3 1179.0,768.1 1180.0,770.8 1181.0,773.4 1182.0,775.7 1183.0,777.6 1184.0,779.4 1185.0,780.9 1186.0,782.5 1187.0,784.1 1188.0,785.7 1189.0,787.3 1190.0,789.1 1191.0,791.5 1192.0,794.7 1193.0,798.7 1194.0,803.1 1195.0,806.9 1196.0,809.6 1197.0,810.4 1198.0,810.0 1199.0,809.0 1200.0,808.0 1201.0,807.0 1202.0,806.0 1203.0,805.0 1204.0,804.0 1205.0,803.0 1206.0,802.0 1207.0,801.0 1208.0,800.0 1209.0,799.0 1210.0,798.0 1211.0,797.0 1212.0,796.0 1213.0,795.0 1214.0,794.5 1215.0,795.1 1216.0,797.4 1217.0,800.6 1218.0,804.5 1219.0,808.3 1220.0,812.1 1221.0,815.9 1222.0,819.7 1223.0,823.5 1224.0,827.4 1225.0,831.2 1226.0,834.9 1227.0,838.6 1228.0,842.3 1229.0,845.9 1230.0,849.5 1231.0,853.2 1232.0,856.8 1233.0,860.4 1234.0,864.0 1235.0,867.7 1236.0,871.3 1237.0,874.9 1238.0,878.6 1239.0,882.2 1240.0,885.8 1241.0,889.4 1242.0,893.0 1243.0,896.5 1244.0,899.9 1245.0,903.4 1246.0,906.8 1247.0,910.2 1248.0,913.7 1249.0,917.1 1250.0,920.6 1251.0,924.0 1252.0,927.5 1253.0,930.9 1254.0,934.3 1255.0,937.8 1256.0,941.2 1257.0,944.7 1258.0,948.1 1259.0,951.3 1260.0,954.1 1261.0,956.2 1262.0,957.8 1263.0,959.2 1264.0,960.5 1265.0,961.9 1266.0,963.3 1267.0,964.7 1268.0,966.1 1269.0,967.5 1270.0,968.9 1271.0,970.3 1272.0,971.6 1273.0,972.5 1274.0,972.9 1275.0,972.7 1276.0,971.9 1277.0,971.0 1278.0,970.1 1279.0,969.2 1280.0,968.3 1281.0,967.4 1282.0,966.6 1283.0,965.7 1284.0,964.8 1285.0,963.9 1286.0,963.0 1287.0,962.1 1288.0,961.1 1289.0,959.9 1290.0,958.5 1291.0,956.8 1292.0,955.0 1293.0,953.2 1294.0,951.3 1295.0,949.5 1296.0,947.7 1297.0,945.8 1298.0,944.0 1299.0,942.1 1300.0,940.3 1301.0,938.4 1302.0,936.6 1303.0,934.7 1304.0,932.9 1305.0,931.1 1306.0,929.2 1307.0,927.4 1308.0,925.5 1309.0,923.7 1310.0,921.8 1311.0,920.0 1312.0,918.2 1313.0,916.4 1314.0,914.7 1315.0,913.5 1316.0,912.7 1317.0,912.2 1318.0,911.8 1319.0,911.4 1320.0,911.0 1321.0,910.7 1322.0,910.5 1323.0,910.5 1324.0,910.9 1325.0,911.4 1326.0,912.0 1327.0,912.5 1328.0,913.1 1329.0,913.7 1330.0,914.3 1331.0,914.8 1332.0,915.4 1333.0,916.0 1334.0,916.6 1335.0,917.1 1336.0,917.7 1337.0,918.3 1338.0,918.9 1339.0,919.3 1340.0,919.5 1341.0,919.2 1342.0,918.7 1343.0,918.1 1344.0,917.4 1345.0,916.8 1346.0,916.1 1347.0,915.5 1348.0,914.8 1349.0,914.2 1350.0,913.6 1351.0,913.4 1352.0,914.0 1353.0,915.8 1354.0,918.2 1355.0,921.1 1356.0,923.8 1357.0,926.2 1358.0,927.9 1359.0,928.6 1360.0,928.7 1361.0,928.6 1362.0,928.5 1363.0,928.4 1364.0,928.3 1365.0,928.2 1366.0,928.1 1367.0,928.0 1368.0,927.8 1369.0,927.7 1370.0,927.6 1371.0,927.5 1372.0,927.4 1373.0,927.3 1374.0,927.3 1375.0,927.7 1376.0,928.6 1377.0,930.1 1378.0,931.9 1379.0,933.7 1380.0,935.6 1381.0,937.5 1382.0,939.3 1383.0,941.2 1384.0,943.1 1385.0,944.8 1386.0,946.1 1387.0,946.9 1388.0,947.3 1389.0,947.6 1390.0,947.7 1391.0,947.9 1392.0,948.1 1393.0,948.3 1394.0,948.5 1395.0,948.7 1396.0,948.9 1397.0,949.1 1398.0,949.3 1399.0,949.5 1400.0,949.6 1401.0,949.6 1402.0,949.2 1403.0,948.4 1404.0,947.3 1405.0,946.1 1406.0,944.9 1407.0,943.7 1408.0,942.4 1409.0,941.2 1410.0,940.0 1411.0,938.8 1412.0,937.6 1413.0,936.3 1414.0,935.1 1415.0,933.9 1416.0,932.7 1417.0,931.5 1418.0,930.2 1419.0,929.0 1420.0,927.8 1421.0,926.6 1422.0,925.3 1423.0,924.0 1424.0,922.6 1425.0,921.3 1426.0,919.9 1427.0,918.5 1428.0,917.1 1429.0,916.0 1430.0,915.5 1431.0,915.8 1432.0,916.7 1433.0,918.0 1434.0,919.4 1435.0,920.7 1436.0,922.0 1437.0,923.3 1438.0,924.7 1439.0,926.3 1440.0,928.1 1441.0,930.0 1442.0,932.0 1443.0,934.0 1444.0,935.9 1445.0,937.9 1446.0,939.9 1447.0,941.9 1448.0,943.9 1449.0,945.9 1450.0,947.9 1451.0,949.9 1452.0,951.8 1453.0,953.8 1454.0,955.8 1455.0,957.7 1456.0,959.5 1457.0,961.1 1458.0,962.7 1459.0,964.3 1460.0,965.8 1461.0,967.4 1462.0,968.9 1463.0,970.4 1464.0,971.9 1465.0,973.2 1466.0,974.2 1467.0,975.0 1468.0,975.6 1469.0,976.3 1470.0,976.9 1471.0,977.5 1472.0,978.1 1473.0,978.7 1474.0,979.3 1475.0,979.9 1476.0,980.5 1477.0,981.1 1478.0,981.7 1479.0,982.4 1480.0,982.9 1481.0,983.4 1482.0,983.6 1483.0,983.6 1484.0,983.4 1485.0,983.2 1486.0,983.0 1487.0,982.7 1488.0,982.5 1489.0,982.3 1490.0,982.0 1491.0,981.8 1492.0,981.5 1493.0,981.3 1494.0,981.1 1495.0,980.8 1496.0,980.6 1497.0,980.3 1498.0,979.8 1499.0,978.9 1500.0,977.8 1501.0,976.5 1502.0,975.2 1503.0,973.8 1504.0,972.5 1505.0,971.2 1506.0,969.8 1507.0,968.5 1508.0,967.1 1509.0,965.8 1510.0,964.5 1511.0,963.3 1512.0,962.3 1513.0,961.3 1514.0,960.4 1515.0,959.5 1516.0,958.6 1517.0,957.7 1518.0,956.9 1519.0,956.0 1520.0,955.1 1521.0,954.2 1522.0,953.3 1523.0,952.4 1524.0,951.5 1525.0,950.6 1526.0,949.7 1527.0,948.8 1528.0,947.8 1529.0,946.8 1530.0,945.9 1531.0,944.9 1532.0,944.0 1533.0,943.0 1534.0,942.1 1535.0,941.1 1536.0,940.2 1537.0,939.2 1538.0,938.2 1539.0,937.3 1540.0,936.3 1541.0,935.4 1542.0,934.4 1543.0,933.5 1544.0,932.6 1545.0,931.6 1546.0,930.7 1547.0,929.7 1548.0,928.8 1549.0,927.9 1550.0,926.9 1551.0,926.0 1552.0,925.0 1553.0,924.2 1554.0,923.3 1555.0,922.5 1556.0,921.7 1557.0,920.9 1558.0,920.1 1559.0,919.3 1560.0,918.5 1561.0,917.7 1562.0,916.9 1563.0,916.1 1564.0,915.3 1565.0,914.5 1566.0,913.8 1567.0,913.2 1568.0,913.0 1569.0,913.3 1570.0,913.9 1571.0,914.6 1572.0,915.3 1573.0,916.1 1574.0,916.8 1575.0,917.5 1576.0,918.2 1577.0,918.9 1578.0,919.7 1579.0,920.4 1580.0,921.1 1581.0,921.8 1582.0,922.5 1583.0,923.3 1584.0,924.0 1585.0,924.9 1586.0,925.9 1587.0,927.0 1588.0,928.3 1589.0,929.5 1590.0,930.8 1591.0,932.0 1592.0,933.3 1593.0,934.6 1594.0,935.8 1595.0,937.1 1596.0,938.3 1597.0,939.6 1598.0,940.9 1599.0,942.1 1600.0,943.4 1601.0,944.6 1602.0,945.9 1603.0,947.0 1604.0,947.8 1605.0,948.2 1606.0,948.4 1607.0,948.3 1608.0,948.3 1609.0,948.3 1610.0,948.3 1611.0,948.2 1612.0,948.2 1613.0,948.2 1614.0,948.2 1615.0,948.1 1616.0,948.1 1617.0,948.1 1618.0,948.1 1619.0,948.0 1620.0,948.0 1621.0,947.8 1622.0,947.7 1623.0,947.5 1624.0,947.2 1625.0,947.0 1626.0,946.8 1627.0,946.6 1628.0,946.3 1629.0,946.1 1630.0,945.9 1631.0,945.7 1632.0,945.4 1633.0,945.2 1634.0,945.0 1635.0,944.8 1636.0,944.8 1637.0,945.0 1638.0,945.4 1639.0,945.8 1640.0,946.3 1641.0,946.8 1642.0,947.2 1643.0,947.7 1644.0,948.2 1645.0,948.6 1646.0,949.1 1647.0,949.6 1648.0,950.0 1649.0,950.5 1650.0,951.1 1651.0,951.9 1652.0,952.9 1653.0,954.1 1654.0,955.3 1655.0,956.6 1656.0,957.9 1657.0,959.1 1658.0,960.4 1659.0,961.6 1660.0,962.9 1661.0,964.2 1662.0,965.4 1663.0,966.7 1664.0,968.0 1665.0,969.1 1666.0,970.1 1667.0,971.0 1668.0,971.7 1669.0,972.5 1670.0,973.2 1671.0,973.9 1672.0,974.6 1673.0,975.3 1674.0,976.0 1675.0,976.7 1676.0,977.2 1677.0,977.7 1678.0,978.1 1679.0,978.5 1680.0,978.9 1681.0,979.3 1682.0,979.7 1683.0,980.1 1684.0,980.6 1685.0,981.0 1686.0,981.4 1687.0,981.8 1688.0,982.2 1689.0,982.5 1690.0,982.8 1691.0,982.8 1692.0,982.7 1693.0,982.6 1694.0,982.5 1695.0,982.4 1696.0,982.2 1697.0,982.1 1698.0,982.0 1699.0,981.8 1700.0,981.7 1701.0,981.6 1702.0,981.5 1703.0,981.3 1704.0,981.1 1705.0,980.7 1706.0,980.0 1707.0,978.8 1708.0,977.5 1709.0,976.0 1710.0,974.5 1711.0,973.0 1712.0,971.5 1713.0,970.1 1714.0,968.9 1715.0,968.1 1716.0,967.5 1717.0,967.1 1718.0,966.7 1719.0,966.3 1720.0,966.0 1721.0,965.6 1722.0,965.3 1723.0,964.9 1724.0,964.6 1725.0,964.2 1726.0,963.8 1727.0,963.5 1728.0,963.1 1729.0,962.8 1730.0,962.3 1731.0,961.8 1732.0,961.2 1733.0,960.4 1734.0,959.5 1735.0,958.6 1736.0,957.8 1737.0,956.9 1738.0,956.0 1739.0,955.2 1740.0,954.3 1741.0,953.5 1742.0,952.6 1743.0,951.7 1744.0,950.9 1745.0,950.2 1746.0,949.7 1747.0,949.4 1748.0,949.0 1749.0,948.7 1750.0,948.4 1751.0,948.1 1752.0,947.7 1753.0,947.4 1754.0,947.1 1755.0,946.8 1756.0,946.4 1757.0,946.1 1758.0,945.8 1759.0,945.5 1760.0,945.3 1761.0,945.3 1762.0,945.4 1763.0,945.6 1764.0,945.8 1765.0,946.0 1766.0,946.2 1767.0,946.4 1768.0,946.6 1769.0,946.8 1770.0,947.0 1771.0,947.3 1772.0,947.5 1773.0,947.7 1774.0,947.9 1775.0,948.1 1776.0,948.3 1777.0,948.5 1778.0,948.7 1779.0,949.0 1780.0,949.2 1781.0,949.4 1782.0,949.6 1783.0,949.8 1784.0,950.0 1785.0,950.1 1786.0,950.2 1787.0,950.3 1788.0,950.3 1789.0,950.4 1790.0,950.5 1791.0,950.6 1792.0,950.7 1793.0,950.8 1794.0,950.9 1795.0,950.9 1796.0,951.0 1797.0,951.1 1798.0,951.2 1799.0,951.3 1800.0,951.4 1801.0,951.4 1802.0,951.5 1803.0,951.6 1804.0,951.7 1805.0,951.8 1806.0,951.9 1807.0,952.0 1808.0,952.0 1809.0,952.1 1810.0,952.2 1811.0,952.3 1812.0,952.4 1813.0,952.5 1814.0,952.5 1815.0,952.6 1816.0,952.7 1817.0,952.7 1818.0,952.7 1819.0,952.6 1820.0,952.5 1821.0,952.4 1822.0,952.3 1823.0,952.2 1824.0,952.1 1825.0,952.0 1826.0,951.9 1827.0,951.8 1828.0,951.7 1829.0,951.6 1830.0,951.5 1831.0,951.4 1832.0,951.3 1833.0,951.2 1834.0,951.1 1835.0,951.0 1836.0,950.9 1837.0,950.8 1838.0,950.7 1839.0,950.6 1840.0,950.5 1841.0,950.4 1842.0,950.3 1843.0,950.2 1844.0,950.2 1845.0,950.3 1846.0,950.6 1847.0,951.2 1848.0,951.9 1849.0,952.6 1850.0,953.4 1851.0,954.1 1852.0,954.9 1853.0,955.6 1854.0,956.4 1855.0,957.1 1856.0,957.8 1857.0,958.5 1858.0,959.2 1859.0,959.9 1860.0,960.6 1861.0,961.3 1862.0,961.9 1863.0,962.6 1864.0,963.3 1865.0,964.0 1866.0,964.7 1867.0,965.3 1868.0,966.0 1869.0,966.7 1870.0,967.4 1871.0,968.0 1872.0,968.5 1873.0,969.0 1874.0,969.5 1875.0,969.9 1876.0,970.4 1877.0,970.9 1878.0,971.3 1879.0,971.8 1880.0,972.3 1881.0,972.8 1882.0,973.2 1883.0,973.7 1884.0,974.2 1885.0,974.7 1886.0,975.1 1887.0,975.6 1888.0,976.1 1889.0,976.5 1890.0,977.0 1891.0,977.4 1892.0,977.9 1893.0,978.3 1894.0,978.7 1895.0,979.1 1896.0,979.6 1897.0,980.0 1898.0,980.4 1899.0,980.8 1900.0,981.3 1901.0,981.7 1902.0,982.1 1903.0,982.5 1904.0,982.9 1905.0,983.3 1906.0,983.5 1907.0,983.3 1908.0,982.8 1909.0,982.0 1910.0,981.3 1911.0,980.5 1912.0,979.7 1913.0,978.9 1914.0,978.1 1915.0,977.3 1916.0,976.5 1917.0,975.8 1918.0,975.0 1919.0,974.2 1920.0,973.4 1921.0,972.6 1922.0,971.8 1923.0,971.0 1924.0,970.2 1925.0,969.3 1926.0,968.5 1927.0,967.6 1928.0,966.8 1929.0,966.0 1930.0,965.1 1931.0,964.3 1932.0,963.5 1933.0,962.6 1934.0,961.8 1935.0,960.9 1936.0,960.1 1937.0,959.3 1938.0,958.4 1939.0,957.6 1940.0,956.8 1941.0,955.9 1942.0,955.1 1943.0,954.2 1944.0,953.4 1945.0,952.7 1946.0,952.2 1947.0,952.0 1948.0,951.9 1949.0,951.9 1950.0,951.9 1951.0,951.9 1952.0,951.9 1953.0,951.9 1954.0,951.9 1955.0,951.9 1956.0,951.9 1957.0,951.9 1958.0,951.9 1959.0,951.9 1960.0,951.9 1961.0,951.9 1962.0,951.9 1963.0,951.9 1964.0,951.9 1965.0,951.9 1966.0,951.9 1967.0,951.9 1968.0,951.9 1969.0,951.9 1970.0,951.8 1971.0,951.6 1972.0,951.5 1973.0,951.3 1974.0,951.1 1975.0,950.9 1976.0,950.7 1977.0,950.5 1978.0,950.3 1979.0,950.1 1980.0,950.0 1981.0,949.8 1982.0,949.6 1983.0,949.4 1984.0,949.2 1985.0,949.0 1986.0,947.5 1987.0,943.1 1988.0,934.0 1989.0,921.4 1990.0,906.8 1991.0,891.9 1992.0,877.6 1993.0,865.8 1994.0,858.6 1995.0,856.7 1996.0,858.2 1997.0,861.1 1998.0,864.0 1999.0,866.9 2000.0,869.8 2001.0,872.6 2002.0,875.2 2003.0,877.4 2004.0,879.3 2005.0,880.9 2006.0,882.6 2007.0,884.2 2008.0,885.8 2009.0,887.5 2010.0,889.1 2011.0,890.7 2012.0,892.4 2013.0,894.0 2014.0,895.6 2015.0,897.2 2016.0,898.8 2017.0,900.4 2018.0,902.0 2019.0,903.6 2020.0,905.1 2021.0,906.7 2022.0,908.3 2023.0,909.9 2024.0,911.5 2025.0,913.0 2026.0,914.5 2027.0,915.6 2028.0,916.0 2029.0,915.9 2030.0,915.3 2031.0,914.7 2032.0,914.0 2033.0,913.3 2034.0,912.7 2035.0,912.0 2036.0,911.4 2037.0,910.7 2038.0,910.0 2039.0,909.4 2040.0,908.9 2041.0,908.5 2042.0,908.3 2043.0,908.3 2044.0,908.3 2045.0,908.3 2046.0,908.3 2047.0,908.4 2048.0,908.6 2049.0,909.1 2050.0,909.7 2051.0,910.5 2052.0,911.3 2053.0,912.1 2054.0,912.8 2055.0,913.6 2056.0,914.4 2057.0,915.2 2058.0,916.0 2059.0,916.8 2060.0,917.6 2061.0,918.3 2062.0,919.2 2063.0,920.2 2064.0,921.5 2065.0,923.1 2066.0,924.9 2067.0,926.8 2068.0,928.6 2069.0,930.5 2070.0,932.4 2071.0,934.5 2072.0,936.9 2073.0,939.4 2074.0,942.0 2075.0,944.7 2076.0,947.3 2077.0,949.9 2078.0,952.5 2079.0,954.8 2080.0,956.6 2081.0,957.8 2082.0,958.6 2083.0,959.1 2084.0,959.7 2085.0,960.3 2086.0,960.9 2087.0,961.4 2088.0,961.7" fill="none" stroke="#dedede" stroke-width="2.5"/>
<polygon points="640,992.0 640.0,974.9 641.0,975.3 642.0,975.9 643.0,976.5 644.0,977.1 645.0,977.7 646.0,978.3 647.0,978.9 648.0,979.5 649.0,980.1 650.0,980.4 651.0,980.0 652.0,979.4 653.0,978.7 654.0,978.0 655.0,977.4 656.0,976.8 657.0,976.5 658.0,976.2 659.0,976.0 660.0,975.8 661.0,975.6 662.0,975.3 663.0,975.1 664.0,974.8 665.0,974.3 666.0,973.6 667.0,972.7 668.0,971.9 669.0,971.0 670.0,970.1 671.0,969.3 672.0,968.4 673.0,967.6 674.0,966.6 675.0,965.3 676.0,964.0 677.0,962.6 678.0,961.2 679.0,959.8 680.0,958.5 681.0,957.1 682.0,955.7 683.0,954.3 684.0,953.0 685.0,951.6 686.0,950.2 687.0,948.8 688.0,947.5 689.0,946.1 690.0,945.0 691.0,944.7 692.0,944.7 693.0,944.7 694.0,944.7 695.0,944.7 696.0,944.7 697.0,944.7 698.0,944.7 699.0,944.7 700.0,944.7 701.0,944.7 702.0,944.5 703.0,944.0 704.0,943.2 705.0,942.5 706.0,941.7 707.0,941.0 708.0,940.2 709.0,939.5 710.0,939.0 711.0,939.2 712.0,939.7 713.0,940.2 714.0,940.7 715.0,941.2 716.0,941.7 717.0,942.2 718.0,942.3 719.0,941.8 720.0,940.9 721.0,939.9 722.0,939.0 723.0,938.1 724.0,937.2 725.0,936.2 726.0,935.3 727.0,934.4 728.0,933.5 729.0,932.5 730.0,931.6 731.0,930.7 732.0,929.8 733.0,928.8 734.0,927.9 735.0,927.3 736.0,927.7 737.0,928.7 738.0,929.8 739.0,931.0 740.0,932.2 741.0,933.3 742.0,934.5 743.0,934.5 744.0,931.5 745.0,926.4 746.0,920.7 747.0,915.0 748.0,909.4 749.0,903.7 750.0,898.1 751.0,893.3 752.0,890.7 753.0,889.7 754.0,889.2 755.0,888.6 756.0,888.1 757.0,887.5 758.0,886.9 759.0,886.4 760.0,885.8 761.0,885.3 762.0,885.6 763.0,887.8 764.0,890.9 765.0,893.9 766.0,897.0 767.0,900.1 768.0,903.1 769.0,906.2 770.0,908.3 771.0,908.4 772.0,907.6 773.0,906.7 774.0,905.9 775.0,905.0 776.0,904.1 777.0,903.3 778.0,902.4 779.0,901.6 780.0,901.1 781.0,901.5 782.0,902.2 783.0,903.0 784.0,903.7 785.0,904.5 786.0,905.2 787.0,906.0 788.0,905.6 789.0,903.0 790.0,899.2 791.0,895.5 792.0,891.7 793.0,888.0 794.0,884.2 795.0,880.5 796.0,877.9 797.0,877.7 798.0,878.7 799.0,879.6 800.0,880.8 801.0,882.5 802.0,885.0 803.0,887.8 804.0,890.7 805.0,893.5 806.0,896.3 807.0,899.2 808.0,902.0 809.0,904.5 810.0,906.6 811.0,908.6 812.0,910.6 813.0,912.6 814.0,914.7 815.0,916.7 816.0,918.7 817.0,920.7 818.0,922.8 819.0,925.2 820.0,927.8 821.0,930.3 822.0,932.8 823.0,935.4 824.0,937.9 825.0,940.5 826.0,943.0 827.0,945.5 828.0,948.1 829.0,950.6 830.0,953.1 831.0,955.7 832.0,958.2 833.0,960.3 834.0,962.1 835.0,963.8 836.0,965.4 837.0,967.0 838.0,968.6 839.0,970.3 840.0,971.9 841.0,973.5 842.0,975.2 843.0,976.6 844.0,977.4 845.0,977.8 846.0,978.1 847.0,978.3 848.0,978.6 849.0,978.9 850.0,979.2 851.0,979.5 852.0,979.8 853.0,980.0 854.0,980.3 855.0,980.5 856.0,980.2 857.0,979.7 858.0,979.0 859.0,978.4 860.0,977.8 861.0,977.2 862.0,976.6 863.0,976.0 864.0,975.3 865.0,974.7 866.0,974.1 867.0,973.5 868.0,972.8 869.0,972.2 870.0,971.5 871.0,970.8 872.0,970.2 873.0,969.5 874.0,968.9 875.0,968.2 876.0,967.5 877.0,966.9 878.0,966.2 879.0,965.5 880.0,964.9 881.0,964.2 882.0,963.6 883.0,962.8 884.0,961.8 885.0,960.7 886.0,959.5 887.0,958.3 888.0,957.2 889.0,956.0 890.0,954.8 891.0,953.6 892.0,952.4 893.0,951.3 894.0,950.1 895.0,948.9 896.0,947.7 897.0,946.5 898.0,945.4 899.0,944.2 900.0,943.2 901.0,942.5 902.0,942.0 903.0,941.5 904.0,941.0 905.0,940.6 906.0,940.1 907.0,939.6 908.0,939.2 909.0,939.1 910.0,939.2 911.0,939.3 912.0,939.5 913.0,939.6 914.0,939.9 915.0,940.3 916.0,940.8 917.0,941.3 918.0,941.6 919.0,941.4 920.0,940.4 921.0,939.0 922.0,937.7 923.0,936.3 924.0,935.0 925.0,933.7 926.0,932.3 927.0,930.9 928.0,929.3 929.0,927.6 930.0,925.9 931.0,924.3 932.0,922.6 933.0,920.9 934.0,919.2 935.0,917.5 936.0,915.8 937.0,914.1 938.0,912.4 939.0,910.8 940.0,909.1 941.0,907.4 942.0,905.7 943.0,904.1 944.0,903.3 945.0,904.0 946.0,905.4 947.0,907.0 948.0,909.4 949.0,912.6 950.0,916.2 951.0,919.8 952.0,922.6 953.0,923.9 954.0,923.8 955.0,923.5 956.0,923.2 957.0,922.9 958.0,922.6 959.0,922.2 960.0,922.0 961.0,921.8 962.0,921.7 963.0,921.6 964.0,921.5 965.0,921.3 966.0,921.2 967.0,921.1 968.0,921.0 969.0,920.8 970.0,921.1 971.0,922.1 972.0,923.4 973.0,924.8 974.0,926.1 975.0,927.5 976.0,928.7 977.0,929.4 978.0,929.7 979.0,929.9 980.0,930.0 981.0,930.2 982.0,930.3 983.0,930.4 984.0,930.6 985.0,930.7 986.0,930.9 987.0,931.0 988.0,931.2 989.0,931.3 990.0,931.5 991.0,931.8 992.0,932.1 993.0,932.4 994.0,932.5 995.0,931.9 996.0,930.9 997.0,929.8 998.0,928.7 999.0,927.6 1000.0,926.5 1001.0,925.4 1002.0,924.3 1003.0,923.3 1004.0,923.0 1005.0,923.5 1006.0,924.2 1007.0,924.9 1008.0,925.5 1009.0,926.2 1010.0,926.9 1011.0,927.6 1012.0,928.3 1013.0,929.0 1014.0,929.8 1015.0,930.7 1016.0,931.5 1017.0,932.3 1018.0,933.2 1019.0,934.0 1020.0,934.8 1021.0,935.7 1022.0,936.5 1023.0,937.5 1024.0,939.0 1025.0,940.9 1026.0,942.7 1027.0,944.6 1028.0,946.4 1029.0,948.2 1030.0,949.5 1031.0,950.2 1032.0,950.6 1033.0,951.1 1034.0,951.5 1035.0,952.0 1036.0,952.4 1037.0,952.9 1038.0,953.4 1039.0,954.3 1040.0,955.3 1041.0,956.2 1042.0,957.3 1043.0,958.7 1044.0,960.6 1045.0,962.8 1046.0,965.0 1047.0,967.1 1048.0,969.0 1049.0,970.6 1050.0,972.1 1051.0,973.6 1052.0,975.1 1053.0,976.6 1054.0,978.1 1055.0,979.6 1056.0,981.0 1057.0,981.8 1058.0,981.7 1059.0,981.2 1060.0,980.7 1061.0,980.2 1062.0,979.7 1063.0,979.2 1064.0,978.7 1065.0,978.2 1066.0,977.7 1067.0,977.2 1068.0,976.7 1069.0,976.2 1070.0,975.7 1071.0,975.2 1072.0,974.7 1073.0,974.2 1074.0,973.8 1075.0,973.5 1076.0,973.2 1077.0,972.9 1078.0,972.6 1079.0,972.3 1080.0,971.9 1081.0,971.2 1082.0,970.5 1083.0,969.7 1084.0,969.0 1085.0,968.2 1086.0,967.5 1087.0,966.7 1088.0,966.0 1089.0,965.2 1090.0,964.4 1091.0,963.7 1092.0,962.7 1093.0,961.2 1094.0,959.3 1095.0,957.3 1096.0,955.3 1097.0,953.3 1098.0,951.3 1099.0,949.3 1100.0,947.2 1101.0,944.4 1102.0,940.8 1103.0,936.8 1104.0,932.9 1105.0,929.0 1106.0,925.0 1107.0,921.1 1108.0,917.1 1109.0,913.2 1110.0,909.2 1111.0,905.3 1112.0,901.2 1113.0,896.7 1114.0,891.7 1115.0,886.6 1116.0,881.4 1117.0,876.2 1118.0,871.0 1119.0,865.8 1120.0,860.7 1121.0,855.5 1122.0,850.3 1123.0,844.0 1124.0,833.6 1125.0,818.6 1126.0,801.9 1127.0,785.2 1128.0,761.1 1129.0,719.0 1130.0,663.1 1131.0,608.6 1132.0,567.6 1133.0,540.2 1134.0,519.7 1135.0,507.6 1136.0,505.0 1137.0,506.0 1138.0,507.0 1139.0,508.0 1140.0,509.0 1141.0,510.4 1142.0,512.6 1143.0,515.2 1144.0,517.8 1145.0,520.5 1146.0,523.1 1147.0,525.7 1148.0,528.5 1149.0,532.3 1150.0,537.7 1151.0,543.7 1152.0,549.8 1153.0,555.9 1154.0,561.9 1155.0,569.0 1156.0,577.9 1157.0,587.8 1158.0,597.6 1159.0,607.5 1160.0,617.4 1161.0,627.2 1162.0,637.1 1163.0,647.2 1164.0,657.7 1165.0,668.4 1166.0,679.1 1167.0,689.9 1168.0,700.6 1169.0,711.3 1170.0,722.0 1171.0,732.7 1172.0,742.2 1173.0,748.5 1174.0,752.0 1175.0,754.6 1176.0,757.3 1177.0,760.0 1178.0,762.6 1179.0,765.3 1180.0,767.9 1181.0,770.6 1182.0,772.9 1183.0,774.8 1184.0,776.5 1185.0,778.2 1186.0,779.8 1187.0,781.5 1188.0,783.2 1189.0,784.9 1190.0,786.5 1191.0,788.7 1192.0,791.9 1193.0,796.0 1194.0,800.4 1195.0,804.7 1196.0,807.7 1197.0,808.0 1198.0,807.0 1199.0,806.0 1200.0,805.0 1201.0,804.0 1202.0,803.0 1203.0,802.0 1204.0,801.0 1205.0,800.0 1206.0,799.0 1207.0,798.0 1208.0,797.0 1209.0,796.0 1210.0,795.0 1211.0,794.0 1212.0,793.0 1213.0,792.0 1214.0,791.0 1215.0,791.2 1216.0,793.9 1217.0,797.8 1218.0,801.7 1219.0,805.6 1220.0,809.5 1221.0,813.3 1222.0,817.2 1223.0,821.1 1224.0,825.0 1225.0,828.9 1226.0,832.7 1227.0,836.4 1228.0,840.0 1229.0,843.6 1230.0,847.2 1231.0,850.8 1232.0,854.4 1233.0,858.0 1234.0,861.6 1235.0,865.2 1236.0,868.9 1237.0,872.5 1238.0,876.1 1239.0,879.7 1240.0,883.3 1241.0,886.9 1242.0,890.4 1243.0,893.9 1244.0,897.3 1245.0,900.8 1246.0,904.2 1247.0,907.6 1248.0,911.1 1249.0,914.5 1250.0,918.0 1251.0,921.4 1252.0,924.9 1253.0,928.3 1254.0,931.7 1255.0,935.2 1256.0,938.6 1257.0,942.1 1258.0,945.5 1259.0,949.0 1260.0,951.9 1261.0,953.8 1262.0,955.2 1263.0,956.7 1264.0,958.1 1265.0,959.5 1266.0,960.9 1267.0,962.4 1268.0,963.8 1269.0,965.2 1270.0,966.6 1271.0,968.1 1272.0,969.5 1273.0,970.7 1274.0,971.2 1275.0,970.8 1276.0,969.9 1277.0,969.0 1278.0,968.1 1279.0,967.2 1280.0,966.4 1281.0,965.5 1282.0,964.6 1283.0,963.7 1284.0,962.9 1285.0,962.0 1286.0,961.1 1287.0,960.2 1288.0,959.3 1289.0,958.3 1290.0,956.9 1291.0,955.3 1292.0,953.6 1293.0,951.9 1294.0,950.2 1295.0,948.5 1296.0,946.8 1297.0,945.1 1298.0,943.4 1299.0,941.7 1300.0,939.9 1301.0,938.0 1302.0,936.0 1303.0,934.0 1304.0,932.0 1305.0,930.0 1306.0,928.0 1307.0,926.0 1308.0,923.9 1309.0,921.9 1310.0,919.9 1311.0,917.9 1312.0,915.9 1313.0,913.9 1314.0,912.0 1315.0,910.6 1316.0,909.9 1317.0,909.6 1318.0,909.3 1319.0,909.0 1320.0,908.7 1321.0,908.4 1322.0,908.1 1323.0,908.1 1324.0,908.2 1325.0,908.5 1326.0,908.7 1327.0,909.0 1328.0,909.3 1329.0,910.0 1330.0,911.0 1331.0,912.0 1332.0,913.0 1333.0,914.1 1334.0,915.1 1335.0,916.2 1336.0,917.2 1337.0,918.3 1338.0,919.3 1339.0,920.3 1340.0,921.4 1341.0,922.4 1342.0,923.5 1343.0,924.5 1344.0,925.5 1345.0,926.6 1346.0,927.6 1347.0,928.7 1348.0,929.7 1349.0,930.8 1350.0,931.4 1351.0,931.2 1352.0,930.5 1353.0,929.9 1354.0,929.3 1355.0,928.7 1356.0,928.0 1357.0,927.4 1358.0,927.0 1359.0,926.7 1360.0,926.5 1361.0,926.4 1362.0,926.2 1363.0,926.0 1364.0,925.9 1365.0,925.7 1366.0,925.5 1367.0,925.4 1368.0,925.2 1369.0,925.1 1370.0,924.9 1371.0,924.7 1372.0,924.6 1373.0,924.4 1374.0,924.2 1375.0,924.2 1376.0,924.4 1377.0,924.9 1378.0,925.5 1379.0,926.1 1380.0,927.1 1381.0,929.2 1382.0,932.1 1383.0,935.1 1384.0,938.1 1385.0,941.2 1386.0,943.6 1387.0,944.6 1388.0,944.9 1389.0,945.1 1390.0,945.2 1391.0,945.4 1392.0,945.6 1393.0,945.8 1394.0,946.0 1395.0,946.2 1396.0,946.4 1397.0,946.6 1398.0,946.8 1399.0,947.0 1400.0,947.2 1401.0,947.3 1402.0,947.1 1403.0,946.5 1404.0,945.6 1405.0,944.8 1406.0,943.9 1407.0,943.0 1408.0,942.2 1409.0,941.3 1410.0,940.5 1411.0,939.6 1412.0,938.7 1413.0,937.9 1414.0,937.0 1415.0,936.2 1416.0,935.3 1417.0,934.5 1418.0,933.6 1419.0,932.7 1420.0,931.9 1421.0,931.0 1422.0,930.4 1423.0,930.5 1424.0,931.0 1425.0,931.6 1426.0,932.3 1427.0,932.9 1428.0,933.6 1429.0,934.2 1430.0,934.8 1431.0,935.5 1432.0,936.1 1433.0,936.8 1434.0,937.4 1435.0,938.0 1436.0,938.7 1437.0,939.3 1438.0,940.0 1439.0,940.7 1440.0,941.6 1441.0,942.6 1442.0,943.6 1443.0,944.6 1444.0,945.6 1445.0,946.6 1446.0,947.6 1447.0,948.6 1448.0,949.6 1449.0,950.6 1450.0,951.6 1451.0,952.6 1452.0,953.6 1453.0,954.6 1454.0,955.6 1455.0,956.7 1456.0,957.9 1457.0,959.3 1458.0,960.8 1459.0,962.4 1460.0,963.9 1461.0,965.4 1462.0,966.9 1463.0,968.4 1464.0,969.9 1465.0,971.3 1466.0,972.2 1467.0,972.8 1468.0,973.3 1469.0,973.8 1470.0,974.3 1471.0,974.8 1472.0,975.3 1473.0,975.8 1474.0,976.4 1475.0,977.1 1476.0,977.9 1477.0,978.6 1478.0,979.4 1479.0,980.2 1480.0,980.9 1481.0,981.6 1482.0,981.7 1483.0,981.3 1484.0,980.6 1485.0,979.9 1486.0,979.3 1487.0,978.6 1488.0,977.9 1489.0,977.3 1490.0,977.0 1491.0,977.0 1492.0,977.2 1493.0,977.4 1494.0,977.5 1495.0,977.7 1496.0,977.9 1497.0,978.1 1498.0,978.0 1499.0,977.5 1500.0,976.5 1501.0,975.4 1502.0,974.3 1503.0,973.2 1504.0,972.0 1505.0,970.9 1506.0,969.8 1507.0,968.7 1508.0,967.6 1509.0,966.4 1510.0,965.3 1511.0,964.3 1512.0,963.4 1513.0,962.7 1514.0,962.0 1515.0,961.2 1516.0,960.5 1517.0,959.7 1518.0,959.0 1519.0,958.3 1520.0,957.5 1521.0,956.8 1522.0,956.0 1523.0,955.3 1524.0,954.6 1525.0,953.8 1526.0,952.9 1527.0,951.8 1528.0,950.6 1529.0,949.4 1530.0,948.2 1531.0,947.1 1532.0,945.9 1533.0,944.7 1534.0,943.5 1535.0,942.3 1536.0,941.2 1537.0,940.0 1538.0,938.8 1539.0,937.6 1540.0,936.4 1541.0,935.6 1542.0,935.8 1543.0,936.9 1544.0,938.2 1545.0,939.5 1546.0,940.8 1547.0,942.1 1548.0,943.4 1549.0,944.6 1550.0,945.9 1551.0,946.6 1552.0,945.8 1553.0,944.1 1554.0,942.2 1555.0,940.3 1556.0,938.4 1557.0,936.6 1558.0,934.7 1559.0,932.8 1560.0,930.9 1561.0,929.0 1562.0,927.1 1563.0,925.3 1564.0,923.4 1565.0,921.5 1566.0,919.6 1567.0,917.9 1568.0,917.1 1569.0,917.8 1570.0,919.2 1571.0,920.6 1572.0,921.9 1573.0,923.3 1574.0,924.7 1575.0,926.0 1576.0,927.4 1577.0,928.8 1578.0,929.9 1579.0,930.2 1580.0,929.8 1581.0,929.1 1582.0,928.4 1583.0,927.7 1584.0,927.0 1585.0,926.6 1586.0,927.2 1587.0,928.7 1588.0,930.4 1589.0,932.0 1590.0,933.7 1591.0,935.4 1592.0,937.1 1593.0,938.7 1594.0,940.4 1595.0,942.1 1596.0,943.8 1597.0,945.5 1598.0,947.1 1599.0,948.8 1600.0,950.5 1601.0,952.2 1602.0,953.8 1603.0,955.5 1604.0,956.7 1605.0,956.8 1606.0,956.4 1607.0,956.0 1608.0,955.6 1609.0,955.2 1610.0,954.7 1611.0,954.3 1612.0,953.9 1613.0,953.5 1614.0,953.1 1615.0,952.7 1616.0,952.3 1617.0,951.9 1618.0,951.5 1619.0,951.1 1620.0,950.7 1621.0,950.6 1622.0,950.8 1623.0,951.0 1624.0,951.3 1625.0,951.5 1626.0,951.8 1627.0,952.0 1628.0,952.2 1629.0,952.1 1630.0,951.7 1631.0,951.2 1632.0,950.8 1633.0,950.3 1634.0,949.9 1635.0,949.4 1636.0,948.9 1637.0,948.7 1638.0,949.0 1639.0,949.6 1640.0,950.3 1641.0,951.0 1642.0,951.6 1643.0,952.3 1644.0,953.0 1645.0,953.7 1646.0,954.3 1647.0,955.0 1648.0,955.7 1649.0,956.1 1650.0,956.0 1651.0,955.7 1652.0,955.4 1653.0,955.1 1654.0,954.8 1655.0,954.6 1656.0,954.9 1657.0,956.0 1658.0,957.4 1659.0,958.8 1660.0,960.2 1661.0,961.6 1662.0,963.0 1663.0,964.4 1664.0,965.8 1665.0,967.1 1666.0,968.2 1667.0,969.0 1668.0,969.7 1669.0,970.4 1670.0,971.1 1671.0,971.8 1672.0,972.5 1673.0,973.2 1674.0,973.9 1675.0,974.5 1676.0,975.1 1677.0,975.6 1678.0,976.1 1679.0,976.5 1680.0,977.0 1681.0,977.5 1682.0,977.9 1683.0,978.4 1684.0,978.9 1685.0,979.4 1686.0,979.8 1687.0,980.3 1688.0,980.8 1689.0,981.2 1690.0,981.6 1691.0,981.9 1692.0,982.0 1693.0,982.2 1694.0,982.3 1695.0,982.5 1696.0,982.7 1697.0,982.8 1698.0,982.9 1699.0,982.8 1700.0,982.4 1701.0,981.8 1702.0,981.3 1703.0,980.7 1704.0,980.1 1705.0,979.5 1706.0,978.5 1707.0,977.2 1708.0,975.7 1709.0,974.3 1710.0,972.9 1711.0,971.4 1712.0,970.0 1713.0,968.5 1714.0,967.3 1715.0,966.5 1716.0,966.1 1717.0,965.8 1718.0,965.6 1719.0,965.3 1720.0,965.1 1721.0,965.0 1722.0,965.0 1723.0,965.0 1724.0,965.0 1725.0,965.0 1726.0,965.0 1727.0,965.0 1728.0,965.0 1729.0,965.0 1730.0,965.0 1731.0,964.8 1732.0,964.2 1733.0,963.3 1734.0,962.5 1735.0,961.6 1736.0,960.7 1737.0,959.9 1738.0,959.0 1739.0,958.1 1740.0,957.3 1741.0,956.4 1742.0,955.7 1743.0,955.2 1744.0,954.7 1745.0,954.3 1746.0,953.8 1747.0,953.4 1748.0,952.9 1749.0,952.5 1750.0,952.0 1751.0,951.6 1752.0,951.1 1753.0,950.7 1754.0,950.5 1755.0,950.4 1756.0,950.4 1757.0,950.4 1758.0,950.4 1759.0,950.4 1760.0,950.5 1761.0,950.7 1762.0,951.1 1763.0,951.5 1764.0,952.0 1765.0,952.4 1766.0,952.8 1767.0,953.3 1768.0,953.6 1769.0,953.6 1770.0,953.5 1771.0,953.3 1772.0,953.1 1773.0,952.9 1774.0,952.7 1775.0,952.5 1776.0,952.3 1777.0,952.1 1778.0,951.9 1779.0,951.7 1780.0,951.5 1781.0,951.4 1782.0,951.2 1783.0,951.0 1784.0,951.0 1785.0,951.2 1786.0,951.6 1787.0,952.0 1788.0,952.4 1789.0,952.8 1790.0,953.1 1791.0,953.5 1792.0,953.7 1793.0,953.7 1794.0,953.5 1795.0,953.4 1796.0,953.3 1797.0,953.2 1798.0,953.1 1799.0,953.0 1800.0,952.9 1801.0,952.8 1802.0,952.7 1803.0,952.6 1804.0,952.5 1805.0,952.5 1806.0,953.0 1807.0,953.8 1808.0,954.8 1809.0,955.8 1810.0,956.7 1811.0,957.7 1812.0,958.6 1813.0,959.6 1814.0,960.6 1815.0,961.5 1816.0,962.5 1817.0,963.4 1818.0,964.1 1819.0,963.9 1820.0,963.3 1821.0,962.7 1822.0,962.1 1823.0,961.5 1824.0,960.9 1825.0,960.3 1826.0,959.7 1827.0,959.1 1828.0,958.5 1829.0,957.9 1830.0,957.3 1831.0,956.7 1832.0,956.1 1833.0,955.5 1834.0,954.9 1835.0,954.3 1836.0,953.7 1837.0,953.0 1838.0,952.4 1839.0,951.8 1840.0,951.2 1841.0,950.6 1842.0,950.0 1843.0,949.4 1844.0,948.8 1845.0,948.4 1846.0,948.5 1847.0,949.1 1848.0,950.0 1849.0,950.8 1850.0,951.6 1851.0,952.4 1852.0,953.2 1853.0,954.1 1854.0,954.9 1855.0,955.7 1856.0,956.5 1857.0,957.2 1858.0,957.9 1859.0,958.6 1860.0,959.2 1861.0,959.9 1862.0,960.6 1863.0,961.2 1864.0,961.9 1865.0,962.6 1866.0,963.2 1867.0,963.9 1868.0,964.6 1869.0,965.2 1870.0,965.9 1871.0,966.7 1872.0,967.8 1873.0,968.9 1874.0,970.1 1875.0,971.2 1876.0,972.4 1877.0,973.6 1878.0,974.7 1879.0,975.9 1880.0,977.0 1881.0,978.2 1882.0,979.3 1883.0,980.4 1884.0,981.1 1885.0,981.5 1886.0,981.7 1887.0,981.9 1888.0,982.1 1889.0,982.3 1890.0,982.5 1891.0,982.7 1892.0,982.9 1893.0,983.1 1894.0,983.3 1895.0,983.4 1896.0,983.6 1897.0,983.8 1898.0,984.0 1899.0,983.9 1900.0,983.7 1901.0,983.5 1902.0,983.3 1903.0,983.1 1904.0,982.9 1905.0,982.7 1906.0,982.4 1907.0,982.0 1908.0,981.3 1909.0,980.5 1910.0,979.8 1911.0,979.0 1912.0,978.3 1913.0,977.5 1914.0,976.8 1915.0,976.0 1916.0,975.3 1917.0,974.5 1918.0,973.8 1919.0,973.0 1920.0,972.3 1921.0,971.5 1922.0,971.0 1923.0,970.8 1924.0,970.7 1925.0,970.6 1926.0,970.5 1927.0,970.4 1928.0,970.3 1929.0,970.2 1930.0,970.1 1931.0,970.0 1932.0,969.8 1933.0,969.3 1934.0,968.5 1935.0,967.5 1936.0,966.5 1937.0,965.5 1938.0,964.5 1939.0,963.5 1940.0,962.5 1941.0,961.5 1942.0,960.5 1943.0,959.6 1944.0,959.0 1945.0,958.8 1946.0,958.8 1947.0,958.8 1948.0,958.7 1949.0,958.7 1950.0,958.7 1951.0,958.6 1952.0,958.6 1953.0,958.5 1954.0,958.5 1955.0,958.5 1956.0,958.5 1957.0,958.6 1958.0,958.9 1959.0,959.3 1960.0,959.7 1961.0,960.1 1962.0,960.5 1963.0,960.9 1964.0,961.3 1965.0,961.7 1966.0,962.1 1967.0,962.4 1968.0,962.3 1969.0,961.9 1970.0,961.3 1971.0,960.7 1972.0,960.1 1973.0,959.5 1974.0,958.9 1975.0,958.3 1976.0,957.7 1977.0,957.1 1978.0,956.5 1979.0,956.0 1980.0,955.4 1981.0,954.8 1982.0,954.2 1983.0,953.6 1984.0,953.0 1985.0,952.5 1986.0,952.3 1987.0,952.3 1988.0,952.2 1989.0,952.2 1990.0,952.1 1991.0,952.1 1992.0,952.0 1993.0,951.9 1994.0,951.4 1995.0,950.4 1996.0,949.3 1997.0,948.2 1998.0,947.0 1999.0,945.9 2000.0,944.8 2001.0,943.7 2002.0,943.4 2003.0,944.5 2004.0,946.3 2005.0,948.0 2006.0,949.8 2007.0,951.5 2008.0,953.3 2009.0,955.0 2010.0,956.4 2011.0,956.7 2012.0,955.6 2013.0,954.0 2014.0,952.5 2015.0,950.9 2016.0,949.4 2017.0,947.8 2018.0,946.2 2019.0,945.1 2020.0,945.2 2021.0,946.1 2022.0,947.2 2023.0,948.4 2024.0,949.5 2025.0,950.6 2026.0,951.7 2027.0,952.9 2028.0,953.5 2029.0,953.0 2030.0,952.0 2031.0,951.0 2032.0,950.0 2033.0,949.0 2034.0,948.0 2035.0,947.0 2036.0,946.0 2037.0,945.1 2038.0,944.1 2039.0,943.1 2040.0,942.1 2041.0,941.1 2042.0,940.1 2043.0,939.1 2044.0,938.1 2045.0,937.3 2046.0,937.3 2047.0,938.1 2048.0,939.0 2049.0,940.0 2050.0,941.0 2051.0,941.9 2052.0,942.9 2053.0,943.9 2054.0,944.8 2055.0,945.8 2056.0,946.8 2057.0,947.7 2058.0,948.7 2059.0,949.6 2060.0,950.6 2061.0,951.6 2062.0,952.5 2063.0,953.4 2064.0,954.0 2065.0,954.2 2066.0,954.4 2067.0,954.5 2068.0,954.7 2069.0,954.8 2070.0,954.9 2071.0,955.2 2072.0,955.7 2073.0,956.4 2074.0,957.0 2075.0,957.7 2076.0,958.4 2077.0,959.0 2078.0,959.7 2079.0,960.3 2080.0,961.0 2081.0,961.7 2082.0,962.3 2083.0,963.0 2084.0,963.7 2085.0,964.3 2086.0,964.8 2087.0,965.4 2088.0,965.9 2088,992.0" fill="#880e4f"/>
<polygon points="640,992.0 640.0,975.3 641.0,975.7 642.0,976.1 643.0,976.7 644.0,977.3 645.0,977.9 646.0,978.5 647.0,979.1 648.0,979.7 649.0,980.1 650.0,980.4 651.0,980.0 652.0,979.6 653.0,978.9 654.0,978.2 655.0,977.7 656.0,977.2 657.0,976.8 658.0,976.5 659.0,976.3 660.0,976.0 661.0,975.8 662.0,975.6 663.0,975.3 664.0,974.9 665.0,974.4 666.0,973.8 667.0,973.0 668.0,972.2 669.0,971.3 670.0,970.5 671.0,969.6 672.0,968.8 673.0,967.8 674.0,966.8 675.0,965.6 676.0,964.4 677.0,963.0 678.0,961.7 679.0,960.3 680.0,959.0 681.0,957.6 682.0,956.2 683.0,954.9 684.0,953.5 685.0,952.2 686.0,950.8 687.0,949.5 688.0,948.1 689.0,947.0 690.0,946.2 691.0,945.7 692.0,945.4 693.0,945.4 694.0,945.4 695.0,945.4 696.0,945.4 697.0,945.4 698.0,945.4 699.0,945.4 700.0,945.4 701.0,945.3 702.0,945.0 703.0,944.5 704.0,943.9 705.0,943.2 706.0,942.5 707.0,941.7 708.0,941.0 709.0,940.5 710.0,940.2 711.0,940.2 712.0,940.5 713.0,941.0 714.0,941.5 715.0,942.0 716.0,942.5 717.0,942.7 718.0,942.6 719.0,942.2 720.0,941.6 721.0,940.7 722.0,939.8 723.0,938.9 724.0,938.0 725.0,937.1 726.0,936.2 727.0,935.2 728.0,934.3 729.0,933.4 730.0,932.5 731.0,931.6 732.0,930.7 733.0,929.8 734.0,929.2 735.0,928.9 736.0,929.1 737.0,929.7 738.0,930.8 739.0,931.9 740.0,933.1 741.0,934.2 742.0,934.5 743.0,934.5 744.0,931.5 745.0,927.0 746.0,921.8 747.0,916.2 748.0,910.6 749.0,905.0 750.0,900.2 751.0,896.3 752.0,893.4 753.0,891.6 754.0,890.7 755.0,890.2 756.0,889.6 757.0,889.1 758.0,888.5 759.0,888.0 760.0,887.4 761.0,887.6 762.0,888.5 763.0,890.1 764.0,892.4 765.0,895.4 766.0,898.4 767.0,901.5 768.0,904.5 769.0,906.7 770.0,908.3 771.0,908.9 772.0,908.8 773.0,908.0 774.0,907.2 775.0,906.3 776.0,905.5 777.0,904.6 778.0,903.8 779.0,903.2 780.0,903.0 781.0,903.1 782.0,903.5 783.0,904.3 784.0,905.0 785.0,905.8 786.0,906.5 787.0,906.4 788.0,905.6 789.0,903.4 790.0,900.6 791.0,896.9 792.0,893.2 793.0,889.5 794.0,885.8 795.0,883.1 796.0,881.2 797.0,880.3 798.0,880.4 799.0,881.4 800.0,882.9 801.0,884.7 802.0,886.9 803.0,889.4 804.0,892.2 805.0,895.0 806.0,897.8 807.0,900.5 808.0,903.1 809.0,905.5 810.0,907.8 811.0,909.9 812.0,911.9 813.0,913.8 814.0,915.8 815.0,917.8 816.0,919.8 817.0,921.9 818.0,924.1 819.0,926.3 820.0,928.7 821.0,931.2 822.0,933.7 823.0,936.2 824.0,938.7 825.0,941.2 826.0,943.7 827.0,946.2 828.0,948.7 829.0,951.2 830.0,953.7 831.0,956.2 832.0,958.4 833.0,960.5 834.0,962.4 835.0,964.2 836.0,965.8 837.0,967.4 838.0,969.0 839.0,970.6 840.0,972.2 841.0,973.8 842.0,975.2 843.0,976.6 844.0,977.4 845.0,977.9 846.0,978.3 847.0,978.6 848.0,978.8 849.0,979.1 850.0,979.4 851.0,979.7 852.0,979.9 853.0,980.2 854.0,980.4 855.0,980.5 856.0,980.2 857.0,979.8 858.0,979.2 859.0,978.6 860.0,978.0 861.0,977.4 862.0,976.8 863.0,976.2 864.0,975.6 865.0,975.0 866.0,974.4 867.0,973.7 868.0,973.1 869.0,972.5 870.0,971.8 871.0,971.2 872.0,970.5 873.0,969.9 874.0,969.2 875.0,968.6 876.0,967.9 877.0,967.3 878.0,966.6 879.0,965.9 880.0,965.3 881.0,964.6 882.0,963.9 883.0,963.1 884.0,962.2 885.0,961.1 886.0,960.0 887.0,958.8 888.0,957.7 889.0,956.5 890.0,955.4 891.0,954.2 892.0,953.0 893.0,951.9 894.0,950.7 895.0,949.5 896.0,948.4 897.0,947.2 898.0,946.1 899.0,945.0 900.0,944.1 901.0,943.4 902.0,942.8 903.0,942.3 904.0,941.8 905.0,941.3 906.0,940.9 907.0,940.4 908.0,940.2 909.0,940.0 910.0,940.0 911.0,940.1 912.0,940.3 913.0,940.5 914.0,940.8 915.0,941.1 916.0,941.5 917.0,941.9 918.0,941.9 919.0,941.6 920.0,940.9 921.0,939.8 922.0,938.5 923.0,937.2 924.0,935.9 925.0,934.5 926.0,933.2 927.0,931.7 928.0,930.2 929.0,928.6 930.0,926.9 931.0,925.3 932.0,923.6 933.0,921.9 934.0,920.3 935.0,918.6 936.0,917.0 937.0,915.3 938.0,913.6 939.0,912.0 940.0,910.3 941.0,908.7 942.0,907.1 943.0,906.1 944.0,905.7 945.0,905.9 946.0,906.9 947.0,908.8 948.0,911.2 949.0,914.1 950.0,917.3 951.0,920.3 952.0,922.6 953.0,924.0 954.0,924.6 955.0,924.6 956.0,924.2 957.0,923.9 958.0,923.6 959.0,923.3 960.0,923.1 961.0,922.9 962.0,922.8 963.0,922.6 964.0,922.5 965.0,922.4 966.0,922.3 967.0,922.1 968.0,922.0 969.0,922.2 970.0,922.6 971.0,923.4 972.0,924.4 973.0,925.8 974.0,927.1 975.0,928.3 976.0,929.3 977.0,930.0 978.0,930.5 979.0,930.8 980.0,930.9 981.0,931.1 982.0,931.2 983.0,931.4 984.0,931.5 985.0,931.7 986.0,931.8 987.0,931.9 988.0,932.1 989.0,932.3 990.0,932.5 991.0,932.7 992.0,933.0 993.0,933.1 994.0,932.9 995.0,932.5 996.0,931.8 997.0,930.7 998.0,929.7 999.0,928.6 1000.0,927.5 1001.0,926.4 1002.0,925.4 1003.0,924.8 1004.0,924.6 1005.0,924.7 1006.0,925.2 1007.0,925.9 1008.0,926.5 1009.0,927.2 1010.0,927.9 1011.0,928.6 1012.0,929.3 1013.0,930.0 1014.0,930.8 1015.0,931.6 1016.0,932.4 1017.0,933.2 1018.0,934.0 1019.0,934.9 1020.0,935.7 1021.0,936.5 1022.0,937.5 1023.0,938.7 1024.0,940.1 1025.0,941.7 1026.0,943.5 1027.0,945.3 1028.0,947.0 1029.0,948.5 1030.0,949.7 1031.0,950.6 1032.0,951.2 1033.0,951.7 1034.0,952.1 1035.0,952.6 1036.0,953.0 1037.0,953.5 1038.0,954.2 1039.0,955.0 1040.0,955.8 1041.0,956.8 1042.0,958.1 1043.0,959.6 1044.0,961.3 1045.0,963.3 1046.0,965.3 1047.0,967.3 1048.0,969.1 1049.0,970.8 1050.0,972.4 1051.0,973.8 1052.0,975.3 1053.0,976.8 1054.0,978.3 1055.0,979.7 1056.0,981.0 1057.0,981.8 1058.0,981.7 1059.0,981.4 1060.0,980.9 1061.0,980.4 1062.0,979.9 1063.0,979.4 1064.0,978.9 1065.0,978.4 1066.0,977.9 1067.0,977.4 1068.0,976.9 1069.0,976.4 1070.0,975.9 1071.0,975.5 1072.0,975.0 1073.0,974.5 1074.0,974.1 1075.0,973.8 1076.0,973.5 1077.0,973.2 1078.0,972.9 1079.0,972.5 1080.0,972.0 1081.0,971.5 1082.0,970.8 1083.0,970.1 1084.0,969.3 1085.0,968.6 1086.0,967.8 1087.0,967.1 1088.0,966.3 1089.0,965.6 1090.0,964.9 1091.0,963.9 1092.0,962.8 1093.0,961.4 1094.0,959.7 1095.0,957.8 1096.0,955.9 1097.0,953.9 1098.0,951.9 1099.0,949.8 1100.0,947.4 1101.0,944.5 1102.0,941.3 1103.0,937.7 1104.0,933.8 1105.0,929.9 1106.0,926.0 1107.0,922.1 1108.0,918.3 1109.0,914.4 1110.0,910.5 1111.0,906.5 1112.0,902.3 1113.0,897.8 1114.0,893.1 1115.0,888.1 1116.0,883.0 1117.0,877.9 1118.0,872.8 1119.0,867.7 1120.0,862.6 1121.0,857.5 1122.0,851.5 1123.0,844.0 1124.0,833.6 1125.0,819.9 1126.0,804.8 1127.0,785.2 1128.0,761.1 1129.0,719.0 1130.0,669.1 1131.0,624.1 1132.0,583.8 1133.0,552.4 1134.0,532.9 1135.0,521.7 1136.0,515.1 1137.0,513.3 1138.0,514.3 1139.0,515.3 1140.0,516.6 1141.0,518.2 1142.0,520.1 1143.0,522.4 1144.0,525.0 1145.0,527.5 1146.0,530.1 1147.0,532.8 1148.0,536.2 1149.0,540.3 1150.0,545.0 1151.0,550.5 1152.0,556.4 1153.0,562.4 1154.0,569.1 1155.0,576.6 1156.0,584.8 1157.0,593.8 1158.0,603.5 1159.0,613.3 1160.0,623.0 1161.0,632.7 1162.0,642.6 1163.0,652.7 1164.0,662.9 1165.0,673.3 1166.0,683.8 1167.0,694.4 1168.0,704.9 1169.0,715.5 1170.0,726.0 1171.0,735.6 1172.0,743.7 1173.0,750.1 1174.0,754.9 1175.0,758.2 1176.0,760.8 1177.0,763.4 1178.0,766.1 1179.0,768.7 1180.0,771.3 1181.0,773.7 1182.0,775.9 1183.0,777.9 1184.0,779.7 1185.0,781.4 1186.0,783.0 1187.0,784.7 1188.0,786.3 1189.0,788.0 1190.0,790.0 1191.0,792.5 1192.0,795.6 1193.0,799.1 1194.0,803.2 1195.0,806.4 1196.0,808.6 1197.0,809.7 1198.0,809.8 1199.0,808.8 1200.0,807.8 1201.0,806.8 1202.0,805.8 1203.0,804.8 1204.0,803.9 1205.0,802.9 1206.0,801.9 1207.0,800.9 1208.0,799.9 1209.0,798.9 1210.0,798.0 1211.0,797.0 1212.0,796.0 1213.0,795.0 1214.0,795.0 1215.0,795.9 1216.0,797.8 1217.0,800.7 1218.0,804.5 1219.0,808.4 1220.0,812.2 1221.0,816.0 1222.0,819.9 1223.0,823.7 1224.0,827.5 1225.0,831.3 1226.0,835.0 1227.0,838.7 1228.0,842.3 1229.0,845.8 1230.0,849.4 1231.0,852.9 1232.0,856.5 1233.0,860.0 1234.0,863.6 1235.0,867.1 1236.0,870.7 1237.0,874.2 1238.0,877.8 1239.0,881.4 1240.0,884.9 1241.0,888.4 1242.0,891.9 1243.0,895.3 1244.0,898.7 1245.0,902.1 1246.0,905.5 1247.0,908.9 1248.0,912.3 1249.0,915.7 1250.0,919.1 1251.0,922.5 1252.0,925.9 1253.0,929.3 1254.0,932.6 1255.0,936.0 1256.0,939.4 1257.0,942.8 1258.0,946.2 1259.0,949.2 1260.0,951.9 1261.0,954.0 1262.0,955.8 1263.0,957.2 1264.0,958.6 1265.0,960.0 1266.0,961.4 1267.0,962.8 1268.0,964.2 1269.0,965.6 1270.0,967.0 1271.0,968.4 1272.0,969.7 1273.0,970.7 1274.0,971.2 1275.0,970.8 1276.0,970.2 1277.0,969.3 1278.0,968.5 1279.0,967.6 1280.0,966.8 1281.0,965.9 1282.0,965.0 1283.0,964.2 1284.0,963.3 1285.0,962.4 1286.0,961.6 1287.0,960.7 1288.0,959.7 1289.0,958.6 1290.0,957.3 1291.0,955.8 1292.0,954.2 1293.0,952.5 1294.0,950.8 1295.0,949.2 1296.0,947.5 1297.0,945.8 1298.0,944.1 1299.0,942.4 1300.0,940.6 1301.0,938.7 1302.0,936.8 1303.0,934.9 1304.0,932.9 1305.0,930.9 1306.0,928.9 1307.0,926.9 1308.0,925.0 1309.0,923.0 1310.0,921.0 1311.0,919.0 1312.0,917.1 1313.0,915.2 1314.0,913.6 1315.0,912.3 1316.0,911.4 1317.0,910.9 1318.0,910.6 1319.0,910.3 1320.0,909.9 1321.0,909.7 1322.0,909.5 1323.0,909.5 1324.0,909.6 1325.0,909.7 1326.0,910.0 1327.0,910.3 1328.0,910.8 1329.0,911.4 1330.0,912.2 1331.0,913.2 1332.0,914.2 1333.0,915.3 1334.0,916.3 1335.0,917.3 1336.0,918.3 1337.0,919.4 1338.0,920.4 1339.0,921.4 1340.0,922.4 1341.0,923.5 1342.0,924.5 1343.0,925.5 1344.0,926.5 1345.0,927.6 1346.0,928.6 1347.0,929.6 1348.0,930.7 1349.0,931.3 1350.0,931.7 1351.0,931.8 1352.0,931.5 1353.0,930.8 1354.0,930.2 1355.0,929.6 1356.0,929.0 1357.0,928.5 1358.0,928.1 1359.0,927.8 1360.0,927.5 1361.0,927.4 1362.0,927.2 1363.0,927.0 1364.0,926.9 1365.0,926.7 1366.0,926.5 1367.0,926.4 1368.0,926.2 1369.0,926.1 1370.0,925.9 1371.0,925.7 1372.0,925.6 1373.0,925.4 1374.0,925.3 1375.0,925.4 1376.0,925.6 1377.0,926.0 1378.0,926.5 1379.0,927.5 1380.0,928.9 1381.0,930.7 1382.0,933.1 1383.0,935.9 1384.0,938.9 1385.0,941.4 1386.0,943.6 1387.0,944.7 1388.0,945.5 1389.0,945.8 1390.0,945.9 1391.0,946.1 1392.0,946.3 1393.0,946.5 1394.0,946.7 1395.0,946.9 1396.0,947.1 1397.0,947.3 1398.0,947.5 1399.0,947.6 1400.0,947.8 1401.0,947.7 1402.0,947.5 1403.0,947.0 1404.0,946.3 1405.0,945.5 1406.0,944.6 1407.0,943.8 1408.0,942.9 1409.0,942.1 1410.0,941.2 1411.0,940.4 1412.0,939.5 1413.0,938.7 1414.0,937.9 1415.0,937.0 1416.0,936.2 1417.0,935.3 1418.0,934.5 1419.0,933.6 1420.0,932.8 1421.0,932.1 1422.0,931.8 1423.0,931.7 1424.0,932.0 1425.0,932.5 1426.0,933.2 1427.0,933.8 1428.0,934.4 1429.0,935.1 1430.0,935.7 1431.0,936.3 1432.0,937.0 1433.0,937.6 1434.0,938.2 1435.0,938.8 1436.0,939.5 1437.0,940.1 1438.0,940.8 1439.0,941.6 1440.0,942.4 1441.0,943.3 1442.0,944.3 1443.0,945.3 1444.0,946.3 1445.0,947.3 1446.0,948.3 1447.0,949.3 1448.0,950.2 1449.0,951.2 1450.0,952.2 1451.0,953.2 1452.0,954.2 1453.0,955.2 1454.0,956.2 1455.0,957.3 1456.0,958.5 1457.0,959.9 1458.0,961.3 1459.0,962.8 1460.0,964.3 1461.0,965.8 1462.0,967.3 1463.0,968.8 1464.0,970.1 1465.0,971.3 1466.0,972.2 1467.0,973.0 1468.0,973.6 1469.0,974.1 1470.0,974.6 1471.0,975.1 1472.0,975.6 1473.0,976.1 1474.0,976.7 1475.0,977.4 1476.0,978.1 1477.0,978.8 1478.0,979.6 1479.0,980.3 1480.0,981.0 1481.0,981.6 1482.0,981.7 1483.0,981.3 1484.0,980.8 1485.0,980.1 1486.0,979.5 1487.0,978.8 1488.0,978.2 1489.0,977.7 1490.0,977.5 1491.0,977.4 1492.0,977.4 1493.0,977.6 1494.0,977.8 1495.0,977.9 1496.0,978.1 1497.0,978.1 1498.0,978.0 1499.0,977.5 1500.0,976.6 1501.0,975.6 1502.0,974.5 1503.0,973.4 1504.0,972.3 1505.0,971.2 1506.0,970.1 1507.0,969.0 1508.0,967.9 1509.0,966.8 1510.0,965.8 1511.0,964.8 1512.0,964.0 1513.0,963.1 1514.0,962.4 1515.0,961.7 1516.0,960.9 1517.0,960.2 1518.0,959.5 1519.0,958.8 1520.0,958.0 1521.0,957.3 1522.0,956.6 1523.0,955.8 1524.0,955.1 1525.0,954.3 1526.0,953.3 1527.0,952.3 1528.0,951.2 1529.0,950.1 1530.0,948.9 1531.0,947.7 1532.0,946.6 1533.0,945.4 1534.0,944.2 1535.0,943.1 1536.0,941.9 1537.0,940.8 1538.0,939.6 1539.0,938.4 1540.0,937.6 1541.0,937.2 1542.0,937.3 1543.0,937.9 1544.0,939.0 1545.0,940.3 1546.0,941.5 1547.0,942.8 1548.0,944.1 1549.0,945.4 1550.0,946.1 1551.0,946.6 1552.0,945.8 1553.0,944.7 1554.0,943.0 1555.0,941.1 1556.0,939.3 1557.0,937.4 1558.0,935.5 1559.0,933.7 1560.0,931.8 1561.0,930.0 1562.0,928.1 1563.0,926.3 1564.0,924.4 1565.0,922.5 1566.0,920.8 1567.0,919.7 1568.0,919.3 1569.0,919.5 1570.0,920.3 1571.0,921.6 1572.0,923.0 1573.0,924.3 1574.0,925.7 1575.0,927.0 1576.0,928.4 1577.0,929.5 1578.0,930.2 1579.0,930.6 1580.0,930.5 1581.0,930.0 1582.0,929.3 1583.0,928.6 1584.0,928.2 1585.0,928.3 1586.0,928.8 1587.0,929.8 1588.0,931.3 1589.0,932.9 1590.0,934.6 1591.0,936.2 1592.0,937.9 1593.0,939.5 1594.0,941.2 1595.0,942.9 1596.0,944.5 1597.0,946.2 1598.0,947.8 1599.0,949.5 1600.0,951.1 1601.0,952.8 1602.0,954.4 1603.0,955.7 1604.0,956.7 1605.0,956.9 1606.0,956.9 1607.0,956.5 1608.0,956.1 1609.0,955.7 1610.0,955.3 1611.0,954.9 1612.0,954.5 1613.0,954.1 1614.0,953.7 1615.0,953.3 1616.0,952.9 1617.0,952.5 1618.0,952.1 1619.0,951.7 1620.0,951.5 1621.0,951.4 1622.0,951.5 1623.0,951.6 1624.0,951.9 1625.0,952.1 1626.0,952.4 1627.0,952.6 1628.0,952.6 1629.0,952.5 1630.0,952.2 1631.0,951.8 1632.0,951.4 1633.0,950.9 1634.0,950.5 1635.0,950.0 1636.0,949.8 1637.0,949.7 1638.0,949.9 1639.0,950.3 1640.0,950.9 1641.0,951.6 1642.0,952.2 1643.0,952.9 1644.0,953.6 1645.0,954.2 1646.0,954.9 1647.0,955.6 1648.0,956.0 1649.0,956.3 1650.0,956.4 1651.0,956.2 1652.0,956.0 1653.0,955.7 1654.0,955.4 1655.0,955.6 1656.0,956.0 1657.0,956.8 1658.0,957.9 1659.0,959.3 1660.0,960.6 1661.0,962.0 1662.0,963.4 1663.0,964.8 1664.0,966.1 1665.0,967.3 1666.0,968.3 1667.0,969.2 1668.0,970.0 1669.0,970.7 1670.0,971.4 1671.0,972.1 1672.0,972.8 1673.0,973.5 1674.0,974.1 1675.0,974.7 1676.0,975.3 1677.0,975.8 1678.0,976.3 1679.0,976.8 1680.0,977.2 1681.0,977.7 1682.0,978.2 1683.0,978.6 1684.0,979.1 1685.0,979.5 1686.0,980.0 1687.0,980.5 1688.0,980.9 1689.0,981.3 1690.0,981.7 1691.0,982.0 1692.0,982.2 1693.0,982.3 1694.0,982.5 1695.0,982.6 1696.0,982.8 1697.0,982.9 1698.0,982.9 1699.0,982.8 1700.0,982.4 1701.0,982.0 1702.0,981.4 1703.0,980.9 1704.0,980.2 1705.0,979.5 1706.0,978.5 1707.0,977.3 1708.0,976.0 1709.0,974.6 1710.0,973.1 1711.0,971.7 1712.0,970.3 1713.0,969.0 1714.0,968.0 1715.0,967.2 1716.0,966.6 1717.0,966.2 1718.0,966.0 1719.0,965.8 1720.0,965.6 1721.0,965.5 1722.0,965.4 1723.0,965.4 1724.0,965.4 1725.0,965.4 1726.0,965.4 1727.0,965.4 1728.0,965.4 1729.0,965.4 1730.0,965.3 1731.0,964.9 1732.0,964.4 1733.0,963.8 1734.0,962.9 1735.0,962.1 1736.0,961.2 1737.0,960.4 1738.0,959.5 1739.0,958.6 1740.0,957.8 1741.0,957.0 1742.0,956.4 1743.0,955.8 1744.0,955.3 1745.0,954.8 1746.0,954.4 1747.0,953.9 1748.0,953.5 1749.0,953.1 1750.0,952.6 1751.0,952.2 1752.0,951.8 1753.0,951.4 1754.0,951.2 1755.0,951.1 1756.0,951.0 1757.0,951.0 1758.0,951.0 1759.0,951.1 1760.0,951.2 1761.0,951.4 1762.0,951.7 1763.0,952.1 1764.0,952.6 1765.0,953.0 1766.0,953.4 1767.0,953.8 1768.0,954.0 1769.0,954.0 1770.0,954.0 1771.0,953.8 1772.0,953.7 1773.0,953.5 1774.0,953.3 1775.0,953.1 1776.0,952.9 1777.0,952.7 1778.0,952.5 1779.0,952.3 1780.0,952.2 1781.0,952.0 1782.0,951.8 1783.0,951.7 1784.0,951.8 1785.0,951.9 1786.0,952.2 1787.0,952.6 1788.0,953.0 1789.0,953.4 1790.0,953.7 1791.0,954.0 1792.0,954.1 1793.0,954.2 1794.0,954.1 1795.0,954.0 1796.0,953.9 1797.0,953.8 1798.0,953.7 1799.0,953.6 1800.0,953.5 1801.0,953.4 1802.0,953.3 1803.0,953.2 1804.0,953.2 1805.0,953.4 1806.0,953.8 1807.0,954.5 1808.0,955.4 1809.0,956.3 1810.0,957.2 1811.0,958.2 1812.0,959.1 1813.0,960.1 1814.0,961.0 1815.0,962.0 1816.0,962.9 1817.0,963.6 1818.0,964.1 1819.0,964.0 1820.0,963.7 1821.0,963.2 1822.0,962.6 1823.0,962.0 1824.0,961.4 1825.0,960.8 1826.0,960.2 1827.0,959.6 1828.0,959.0 1829.0,958.4 1830.0,957.8 1831.0,957.2 1832.0,956.6 1833.0,956.0 1834.0,955.4 1835.0,954.8 1836.0,954.2 1837.0,953.6 1838.0,953.0 1839.0,952.4 1840.0,951.8 1841.0,951.2 1842.0,950.7 1843.0,950.1 1844.0,949.6 1845.0,949.4 1846.0,949.5 1847.0,949.9 1848.0,950.6 1849.0,951.4 1850.0,952.2 1851.0,953.0 1852.0,953.8 1853.0,954.6 1854.0,955.4 1855.0,956.2 1856.0,957.0 1857.0,957.7 1858.0,958.4 1859.0,959.1 1860.0,959.7 1861.0,960.4 1862.0,961.0 1863.0,961.7 1864.0,962.4 1865.0,963.0 1866.0,963.7 1867.0,964.3 1868.0,965.0 1869.0,965.6 1870.0,966.4 1871.0,967.3 1872.0,968.2 1873.0,969.3 1874.0,970.4 1875.0,971.6 1876.0,972.7 1877.0,973.8 1878.0,975.0 1879.0,976.1 1880.0,977.3 1881.0,978.4 1882.0,979.5 1883.0,980.4 1884.0,981.1 1885.0,981.5 1886.0,981.8 1887.0,982.0 1888.0,982.2 1889.0,982.4 1890.0,982.6 1891.0,982.8 1892.0,983.0 1893.0,983.2 1894.0,983.4 1895.0,983.6 1896.0,983.8 1897.0,983.9 1898.0,984.0 1899.0,983.9 1900.0,983.8 1901.0,983.7 1902.0,983.5 1903.0,983.3 1904.0,983.1 1905.0,982.8 1906.0,982.4 1907.0,982.0 1908.0,981.4 1909.0,980.7 1910.0,980.0 1911.0,979.2 1912.0,978.5 1913.0,977.7 1914.0,977.0 1915.0,976.3 1916.0,975.5 1917.0,974.8 1918.0,974.0 1919.0,973.3 1920.0,972.6 1921.0,972.0 1922.0,971.5 1923.0,971.2 1924.0,971.0 1925.0,970.9 1926.0,970.8 1927.0,970.7 1928.0,970.6 1929.0,970.5 1930.0,970.4 1931.0,970.2 1932.0,969.9 1933.0,969.4 1934.0,968.7 1935.0,967.9 1936.0,966.9 1937.0,965.9 1938.0,964.9 1939.0,963.9 1940.0,962.9 1941.0,962.0 1942.0,961.0 1943.0,960.3 1944.0,959.8 1945.0,959.5 1946.0,959.3 1947.0,959.3 1948.0,959.2 1949.0,959.2 1950.0,959.2 1951.0,959.1 1952.0,959.1 1953.0,959.0 1954.0,959.0 1955.0,959.0 1956.0,959.1 1957.0,959.2 1958.0,959.5 1959.0,959.8 1960.0,960.2 1961.0,960.6 1962.0,961.0 1963.0,961.4 1964.0,961.7 1965.0,962.1 1966.0,962.4 1967.0,962.6 1968.0,962.5 1969.0,962.2 1970.0,961.7 1971.0,961.2 1972.0,960.6 1973.0,960.0 1974.0,959.4 1975.0,958.8 1976.0,958.2 1977.0,957.7 1978.0,957.1 1979.0,956.5 1980.0,955.9 1981.0,955.3 1982.0,954.7 1983.0,954.2 1984.0,953.7 1985.0,953.3 1986.0,953.0 1987.0,952.9 1988.0,952.8 1989.0,952.8 1990.0,952.7 1991.0,952.7 1992.0,952.5 1993.0,952.2 1994.0,951.7 1995.0,950.9 1996.0,949.9 1997.0,948.8 1998.0,947.7 1999.0,946.6 2000.0,945.5 2001.0,945.0 2002.0,945.1 2003.0,945.7 2004.0,947.0 2005.0,948.7 2006.0,950.4 2007.0,952.1 2008.0,953.8 2009.0,955.3 2010.0,956.4 2011.0,956.7 2012.0,955.8 2013.0,954.6 2014.0,953.1 2015.0,951.5 2016.0,950.0 2017.0,948.5 2018.0,947.3 2019.0,946.7 2020.0,946.5 2021.0,947.0 2022.0,947.9 2023.0,949.0 2024.0,950.1 2025.0,951.2 2026.0,952.4 2027.0,953.0 2028.0,953.5 2029.0,953.2 2030.0,952.6 2031.0,951.6 2032.0,950.7 2033.0,949.7 2034.0,948.7 2035.0,947.7 2036.0,946.7 2037.0,945.8 2038.0,944.8 2039.0,943.8 2040.0,942.8 2041.0,941.8 2042.0,940.9 2043.0,939.9 2044.0,939.1 2045.0,938.7 2046.0,938.7 2047.0,939.1 2048.0,939.8 2049.0,940.8 2050.0,941.7 2051.0,942.7 2052.0,943.6 2053.0,944.6 2054.0,945.5 2055.0,946.5 2056.0,947.4 2057.0,948.4 2058.0,949.3 2059.0,950.3 2060.0,951.2 2061.0,952.2 2062.0,953.1 2063.0,953.8 2064.0,954.3 2065.0,954.7 2066.0,954.9 2067.0,955.1 2068.0,955.2 2069.0,955.4 2070.0,955.6 2071.0,955.9 2072.0,956.4 2073.0,956.9 2074.0,957.6 2075.0,958.2 2076.0,958.9 2077.0,959.5 2078.0,960.2 2079.0,960.8 2080.0,961.5 2081.0,962.1 2082.0,962.8 2083.0,963.4 2084.0,964.0 2085.0,964.7 2086.0,965.2 2087.0,965.7 2088.0,966.0 2088,992.0" fill="#c2185b"/>
<polygon points="640,992.0 640.0,977.8 641.0,978.1 642.0,978.5 643.0,979.0 644.0,979.5 645.0,980.0 646.0,980.5 647.0,981.0 648.0,981.5 649.0,981.8 650.0,981.9 651.0,981.7 652.0,981.4 653.0,980.8 654.0,980.3 655.0,979.8 656.0,979.4 657.0,979.0 658.0,978.8 659.0,978.6 660.0,978.4 661.0,978.2 662.0,978.0 663.0,977.8 664.0,977.4 665.0,977.0 666.0,976.5 667.0,975.8 668.0,975.1 669.0,974.4 670.0,973.6 671.0,972.9 672.0,972.2 673.0,971.4 674.0,970.5 675.0,969.5 676.0,968.4 677.0,967.3 678.0,966.1 679.0,965.0 680.0,963.8 681.0,962.7 682.0,961.5 683.0,960.4 684.0,959.2 685.0,958.0 686.0,956.9 687.0,955.7 688.0,954.6 689.0,953.7 690.0,953.0 691.0,952.5 692.0,952.3 693.0,952.3 694.0,952.3 695.0,952.3 696.0,952.3 697.0,952.3 698.0,952.3 699.0,952.3 700.0,952.3 701.0,952.1 702.0,951.9 703.0,951.5 704.0,951.0 705.0,950.4 706.0,949.7 707.0,949.1 708.0,948.5 709.0,948.1 710.0,947.9 711.0,947.9 712.0,948.1 713.0,948.5 714.0,948.9 715.0,949.3 716.0,949.7 717.0,949.9 718.0,949.9 719.0,949.6 720.0,949.0 721.0,948.3 722.0,947.5 723.0,946.7 724.0,945.9 725.0,945.1 726.0,944.4 727.0,943.6 728.0,942.8 729.0,942.0 730.0,941.3 731.0,940.5 732.0,939.7 733.0,938.9 734.0,938.4 735.0,938.2 736.0,938.4 737.0,938.9 738.0,939.8 739.0,940.8 740.0,941.7 741.0,942.7 742.0,942.9 743.0,941.9 744.0,939.8 745.0,936.5 746.0,932.1 747.0,927.4 748.0,922.6 749.0,917.8 750.0,913.7 751.0,910.4 752.0,907.9 753.0,906.4 754.0,905.6 755.0,905.2 756.0,904.7 757.0,904.2 758.0,903.8 759.0,903.3 760.0,902.8 761.0,902.9 762.0,903.7 763.0,905.1 764.0,907.0 765.0,909.6 766.0,912.2 767.0,914.8 768.0,917.4 769.0,919.3 770.0,920.5 771.0,921.1 772.0,921.1 773.0,920.4 774.0,919.6 775.0,918.9 776.0,918.2 777.0,917.5 778.0,916.8 779.0,916.3 780.0,916.1 781.0,916.2 782.0,916.6 783.0,917.2 784.0,917.8 785.0,918.5 786.0,919.1 787.0,919.0 788.0,918.1 789.0,916.4 790.0,914.0 791.0,910.9 792.0,907.7 793.0,904.6 794.0,901.4 795.0,899.1 796.0,897.5 797.0,896.8 798.0,896.8 799.0,897.7 800.0,898.9 801.0,900.5 802.0,902.3 803.0,904.5 804.0,906.9 805.0,909.3 806.0,911.6 807.0,914.0 808.0,916.2 809.0,918.3 810.0,920.2 811.0,922.0 812.0,923.7 813.0,925.3 814.0,927.0 815.0,928.7 816.0,930.4 817.0,932.2 818.0,934.1 819.0,936.0 820.0,938.1 821.0,940.2 822.0,942.3 823.0,944.4 824.0,946.6 825.0,948.7 826.0,950.8 827.0,953.0 828.0,955.1 829.0,957.2 830.0,959.4 831.0,961.5 832.0,963.4 833.0,965.2 834.0,966.8 835.0,968.3 836.0,969.6 837.0,971.0 838.0,972.4 839.0,973.8 840.0,975.1 841.0,976.5 842.0,977.7 843.0,978.7 844.0,979.5 845.0,980.0 846.0,980.3 847.0,980.5 848.0,980.8 849.0,981.0 850.0,981.2 851.0,981.5 852.0,981.7 853.0,982.0 854.0,982.1 855.0,982.1 856.0,981.9 857.0,981.6 858.0,981.1 859.0,980.6 860.0,980.1 861.0,979.6 862.0,979.0 863.0,978.5 864.0,978.0 865.0,977.5 866.0,977.0 867.0,976.4 868.0,975.9 869.0,975.3 870.0,974.8 871.0,974.2 872.0,973.7 873.0,973.1 874.0,972.6 875.0,972.0 876.0,971.5 877.0,970.9 878.0,970.3 879.0,969.8 880.0,969.2 881.0,968.7 882.0,968.1 883.0,967.3 884.0,966.6 885.0,965.7 886.0,964.7 887.0,963.7 888.0,962.7 889.0,961.7 890.0,960.7 891.0,959.8 892.0,958.8 893.0,957.8 894.0,956.8 895.0,955.8 896.0,954.8 897.0,953.8 898.0,952.8 899.0,951.9 900.0,951.2 901.0,950.5 902.0,950.0 903.0,949.6 904.0,949.2 905.0,948.8 906.0,948.4 907.0,948.0 908.0,947.8 909.0,947.7 910.0,947.7 911.0,947.7 912.0,947.9 913.0,948.1 914.0,948.3 915.0,948.6 916.0,949.0 917.0,949.3 918.0,949.3 919.0,949.0 920.0,948.4 921.0,947.5 922.0,946.4 923.0,945.3 924.0,944.1 925.0,943.0 926.0,941.8 927.0,940.6 928.0,939.3 929.0,937.9 930.0,936.5 931.0,935.1 932.0,933.7 933.0,932.3 934.0,930.8 935.0,929.4 936.0,928.0 937.0,926.6 938.0,925.2 939.0,923.8 940.0,922.3 941.0,920.9 942.0,919.6 943.0,918.7 944.0,918.4 945.0,918.6 946.0,919.4 947.0,921.1 948.0,923.1 949.0,925.5 950.0,928.3 951.0,930.9 952.0,932.7 953.0,934.0 954.0,934.6 955.0,934.5 956.0,934.2 957.0,933.9 958.0,933.7 959.0,933.4 960.0,933.2 961.0,933.1 962.0,933.0 963.0,932.9 964.0,932.7 965.0,932.6 966.0,932.5 967.0,932.4 968.0,932.3 969.0,932.5 970.0,932.9 971.0,933.5 972.0,934.4 973.0,935.5 974.0,936.7 975.0,937.7 976.0,938.5 977.0,939.2 978.0,939.6 979.0,939.8 980.0,939.9 981.0,940.0 982.0,940.2 983.0,940.3 984.0,940.4 985.0,940.5 986.0,940.7 987.0,940.8 988.0,940.9 989.0,941.1 990.0,941.3 991.0,941.5 992.0,941.7 993.0,941.8 994.0,941.6 995.0,941.2 996.0,940.6 997.0,939.8 998.0,938.8 999.0,937.9 1000.0,937.0 1001.0,936.0 1002.0,935.2 1003.0,934.7 1004.0,934.5 1005.0,934.6 1006.0,935.0 1007.0,935.6 1008.0,936.2 1009.0,936.8 1010.0,937.3 1011.0,937.9 1012.0,938.5 1013.0,939.2 1014.0,939.8 1015.0,940.5 1016.0,941.2 1017.0,941.9 1018.0,942.6 1019.0,943.3 1020.0,944.0 1021.0,944.7 1022.0,945.5 1023.0,946.5 1024.0,947.7 1025.0,949.1 1026.0,950.6 1027.0,952.2 1028.0,953.7 1029.0,954.9 1030.0,955.9 1031.0,956.7 1032.0,957.2 1033.0,957.6 1034.0,958.0 1035.0,958.4 1036.0,958.7 1037.0,959.2 1038.0,959.8 1039.0,960.4 1040.0,961.1 1041.0,962.0 1042.0,963.1 1043.0,964.3 1044.0,965.8 1045.0,967.5 1046.0,969.3 1047.0,970.9 1048.0,972.5 1049.0,973.9 1050.0,975.3 1051.0,976.5 1052.0,977.8 1053.0,979.0 1054.0,980.3 1055.0,981.5 1056.0,982.4 1057.0,982.9 1058.0,983.1 1059.0,982.9 1060.0,982.5 1061.0,982.1 1062.0,981.7 1063.0,981.2 1064.0,980.8 1065.0,980.4 1066.0,980.0 1067.0,979.6 1068.0,979.1 1069.0,978.7 1070.0,978.3 1071.0,977.9 1072.0,977.5 1073.0,977.1 1074.0,976.8 1075.0,976.5 1076.0,976.2 1077.0,975.9 1078.0,975.7 1079.0,975.4 1080.0,975.0 1081.0,974.5 1082.0,973.9 1083.0,973.3 1084.0,972.7 1085.0,972.0 1086.0,971.4 1087.0,970.8 1088.0,970.1 1089.0,969.5 1090.0,968.8 1091.0,968.1 1092.0,967.1 1093.0,965.9 1094.0,964.5 1095.0,962.9 1096.0,961.2 1097.0,959.5 1098.0,957.8 1099.0,956.0 1100.0,953.9 1101.0,951.5 1102.0,948.7 1103.0,945.7 1104.0,942.4 1105.0,939.0 1106.0,935.7 1107.0,932.4 1108.0,929.1 1109.0,925.8 1110.0,922.5 1111.0,919.1 1112.0,915.5 1113.0,911.7 1114.0,907.7 1115.0,903.4 1116.0,899.1 1117.0,894.7 1118.0,890.4 1119.0,886.0 1120.0,881.7 1121.0,877.3 1122.0,872.2 1123.0,865.1 1124.0,856.1 1125.0,845.2 1126.0,832.3 1127.0,813.3 1128.0,787.2 1129.0,753.9 1130.0,716.6 1131.0,678.3 1132.0,643.9 1133.0,617.1 1134.0,600.5 1135.0,590.9 1136.0,585.3 1137.0,583.8 1138.0,584.6 1139.0,585.4 1140.0,586.6 1141.0,587.9 1142.0,589.6 1143.0,591.5 1144.0,593.7 1145.0,595.9 1146.0,598.1 1147.0,600.4 1148.0,603.3 1149.0,606.8 1150.0,610.8 1151.0,615.5 1152.0,620.6 1153.0,625.7 1154.0,631.4 1155.0,637.8 1156.0,644.8 1157.0,652.4 1158.0,660.7 1159.0,669.0 1160.0,677.3 1161.0,685.6 1162.0,694.0 1163.0,702.6 1164.0,711.3 1165.0,720.2 1166.0,729.2 1167.0,738.2 1168.0,747.2 1169.0,756.2 1170.0,765.2 1171.0,773.4 1172.0,780.2 1173.0,785.7 1174.0,789.8 1175.0,792.6 1176.0,794.8 1177.0,797.1 1178.0,799.3 1179.0,801.6 1180.0,803.8 1181.0,805.8 1182.0,807.7 1183.0,809.4 1184.0,811.0 1185.0,812.4 1186.0,813.8 1187.0,815.2 1188.0,816.6 1189.0,818.0 1190.0,819.7 1191.0,821.9 1192.0,824.5 1193.0,827.5 1194.0,831.0 1195.0,833.8 1196.0,835.6 1197.0,836.5 1198.0,836.6 1199.0,835.8 1200.0,834.9 1201.0,834.1 1202.0,833.2 1203.0,832.4 1204.0,831.6 1205.0,830.7 1206.0,829.9 1207.0,829.0 1208.0,828.2 1209.0,827.4 1210.0,826.5 1211.0,825.7 1212.0,824.8 1213.0,824.0 1214.0,824.0 1215.0,824.8 1216.0,826.4 1217.0,828.9 1218.0,832.1 1219.0,835.4 1220.0,838.7 1221.0,841.9 1222.0,845.2 1223.0,848.5 1224.0,851.7 1225.0,855.0 1226.0,858.1 1227.0,861.3 1228.0,864.3 1229.0,867.4 1230.0,870.4 1231.0,873.4 1232.0,876.4 1233.0,879.5 1234.0,882.5 1235.0,885.5 1236.0,888.6 1237.0,891.6 1238.0,894.6 1239.0,897.6 1240.0,900.7 1241.0,903.7 1242.0,906.6 1243.0,909.6 1244.0,912.5 1245.0,915.4 1246.0,918.3 1247.0,921.1 1248.0,924.0 1249.0,926.9 1250.0,929.8 1251.0,932.7 1252.0,935.6 1253.0,938.5 1254.0,941.4 1255.0,944.3 1256.0,947.2 1257.0,950.1 1258.0,953.0 1259.0,955.5 1260.0,957.7 1261.0,959.6 1262.0,961.1 1263.0,962.3 1264.0,963.5 1265.0,964.7 1266.0,965.9 1267.0,967.1 1268.0,968.3 1269.0,969.5 1270.0,970.7 1271.0,971.9 1272.0,973.0 1273.0,973.7 1274.0,974.0 1275.0,973.9 1276.0,973.4 1277.0,972.7 1278.0,971.9 1279.0,971.2 1280.0,970.5 1281.0,969.7 1282.0,969.0 1283.0,968.3 1284.0,967.5 1285.0,966.8 1286.0,966.0 1287.0,965.3 1288.0,964.5 1289.0,963.5 1290.0,962.4 1291.0,961.1 1292.0,959.8 1293.0,958.3 1294.0,956.9 1295.0,955.5 1296.0,954.0 1297.0,952.6 1298.0,951.2 1299.0,949.7 1300.0,948.2 1301.0,946.6 1302.0,944.9 1303.0,943.3 1304.0,941.6 1305.0,939.9 1306.0,938.2 1307.0,936.5 1308.0,934.8 1309.0,933.1 1310.0,931.5 1311.0,929.8 1312.0,928.1 1313.0,926.5 1314.0,925.1 1315.0,924.1 1316.0,923.3 1317.0,922.8 1318.0,922.5 1319.0,922.3 1320.0,922.0 1321.0,921.8 1322.0,921.7 1323.0,921.6 1324.0,921.7 1325.0,921.8 1326.0,922.0 1327.0,922.3 1328.0,922.7 1329.0,923.3 1330.0,924.0 1331.0,924.8 1332.0,925.7 1333.0,926.6 1334.0,927.4 1335.0,928.3 1336.0,929.2 1337.0,930.1 1338.0,930.9 1339.0,931.8 1340.0,932.7 1341.0,933.6 1342.0,934.4 1343.0,935.3 1344.0,936.2 1345.0,937.1 1346.0,937.9 1347.0,938.8 1348.0,939.7 1349.0,940.3 1350.0,940.6 1351.0,940.6 1352.0,940.4 1353.0,939.8 1354.0,939.3 1355.0,938.8 1356.0,938.3 1357.0,937.8 1358.0,937.5 1359.0,937.2 1360.0,937.0 1361.0,936.9 1362.0,936.7 1363.0,936.6 1364.0,936.5 1365.0,936.3 1366.0,936.2 1367.0,936.0 1368.0,935.9 1369.0,935.8 1370.0,935.6 1371.0,935.5 1372.0,935.4 1373.0,935.2 1374.0,935.2 1375.0,935.2 1376.0,935.4 1377.0,935.7 1378.0,936.2 1379.0,937.0 1380.0,938.2 1381.0,939.8 1382.0,941.8 1383.0,944.2 1384.0,946.7 1385.0,948.9 1386.0,950.5 1387.0,951.7 1388.0,952.4 1389.0,952.6 1390.0,952.7 1391.0,952.9 1392.0,953.0 1393.0,953.2 1394.0,953.4 1395.0,953.5 1396.0,953.7 1397.0,953.8 1398.0,954.0 1399.0,954.2 1400.0,954.3 1401.0,954.2 1402.0,954.0 1403.0,953.6 1404.0,953.0 1405.0,952.3 1406.0,951.6 1407.0,950.9 1408.0,950.1 1409.0,949.4 1410.0,948.7 1411.0,948.0 1412.0,947.3 1413.0,946.5 1414.0,945.8 1415.0,945.1 1416.0,944.4 1417.0,943.7 1418.0,942.9 1419.0,942.2 1420.0,941.5 1421.0,940.9 1422.0,940.7 1423.0,940.6 1424.0,940.8 1425.0,941.3 1426.0,941.8 1427.0,942.4 1428.0,942.9 1429.0,943.4 1430.0,944.0 1431.0,944.5 1432.0,945.1 1433.0,945.6 1434.0,946.1 1435.0,946.7 1436.0,947.2 1437.0,947.7 1438.0,948.3 1439.0,949.0 1440.0,949.7 1441.0,950.5 1442.0,951.3 1443.0,952.2 1444.0,953.0 1445.0,953.9 1446.0,954.7 1447.0,955.5 1448.0,956.4 1449.0,957.2 1450.0,958.1 1451.0,958.9 1452.0,959.7 1453.0,960.6 1454.0,961.5 1455.0,962.4 1456.0,963.5 1457.0,964.6 1458.0,965.8 1459.0,967.1 1460.0,968.4 1461.0,969.6 1462.0,970.9 1463.0,972.2 1464.0,973.3 1465.0,974.3 1466.0,975.1 1467.0,975.8 1468.0,976.3 1469.0,976.7 1470.0,977.1 1471.0,977.6 1472.0,978.0 1473.0,978.5 1474.0,979.0 1475.0,979.5 1476.0,980.1 1477.0,980.8 1478.0,981.4 1479.0,982.1 1480.0,982.6 1481.0,982.9 1482.0,983.0 1483.0,982.9 1484.0,982.4 1485.0,981.9 1486.0,981.3 1487.0,980.7 1488.0,980.2 1489.0,979.8 1490.0,979.6 1491.0,979.5 1492.0,979.6 1493.0,979.7 1494.0,979.9 1495.0,980.0 1496.0,980.1 1497.0,980.2 1498.0,980.0 1499.0,979.5 1500.0,978.9 1501.0,978.1 1502.0,977.1 1503.0,976.2 1504.0,975.2 1505.0,974.3 1506.0,973.4 1507.0,972.4 1508.0,971.5 1509.0,970.5 1510.0,969.7 1511.0,968.8 1512.0,968.1 1513.0,967.4 1514.0,966.8 1515.0,966.1 1516.0,965.5 1517.0,964.9 1518.0,964.3 1519.0,963.7 1520.0,963.0 1521.0,962.4 1522.0,961.8 1523.0,961.2 1524.0,960.5 1525.0,959.8 1526.0,959.0 1527.0,958.2 1528.0,957.2 1529.0,956.2 1530.0,955.2 1531.0,954.2 1532.0,953.3 1533.0,952.3 1534.0,951.3 1535.0,950.3 1536.0,949.3 1537.0,948.3 1538.0,947.3 1539.0,946.3 1540.0,945.6 1541.0,945.3 1542.0,945.4 1543.0,945.9 1544.0,946.8 1545.0,947.9 1546.0,949.0 1547.0,950.0 1548.0,951.1 1549.0,952.2 1550.0,952.9 1551.0,953.0 1552.0,952.6 1553.0,951.7 1554.0,950.2 1555.0,948.6 1556.0,947.0 1557.0,945.4 1558.0,943.8 1559.0,942.3 1560.0,940.7 1561.0,939.1 1562.0,937.5 1563.0,935.9 1564.0,934.3 1565.0,932.8 1566.0,931.3 1567.0,930.4 1568.0,930.0 1569.0,930.1 1570.0,930.8 1571.0,932.0 1572.0,933.1 1573.0,934.3 1574.0,935.4 1575.0,936.6 1576.0,937.7 1577.0,938.7 1578.0,939.3 1579.0,939.6 1580.0,939.5 1581.0,939.1 1582.0,938.5 1583.0,938.0 1584.0,937.6 1585.0,937.7 1586.0,938.1 1587.0,939.0 1588.0,940.2 1589.0,941.6 1590.0,943.0 1591.0,944.5 1592.0,945.9 1593.0,947.3 1594.0,948.7 1595.0,950.1 1596.0,951.5 1597.0,952.9 1598.0,954.3 1599.0,955.7 1600.0,957.1 1601.0,958.5 1602.0,959.9 1603.0,961.0 1604.0,961.7 1605.0,962.1 1606.0,962.1 1607.0,961.7 1608.0,961.4 1609.0,961.0 1610.0,960.7 1611.0,960.4 1612.0,960.0 1613.0,959.7 1614.0,959.3 1615.0,959.0 1616.0,958.6 1617.0,958.3 1618.0,958.0 1619.0,957.7 1620.0,957.5 1621.0,957.4 1622.0,957.4 1623.0,957.6 1624.0,957.8 1625.0,958.0 1626.0,958.2 1627.0,958.4 1628.0,958.4 1629.0,958.3 1630.0,958.1 1631.0,957.7 1632.0,957.4 1633.0,957.0 1634.0,956.6 1635.0,956.2 1636.0,956.0 1637.0,955.9 1638.0,956.1 1639.0,956.4 1640.0,957.0 1641.0,957.5 1642.0,958.1 1643.0,958.7 1644.0,959.2 1645.0,959.8 1646.0,960.4 1647.0,960.9 1648.0,961.3 1649.0,961.5 1650.0,961.6 1651.0,961.5 1652.0,961.3 1653.0,961.0 1654.0,960.8 1655.0,960.9 1656.0,961.3 1657.0,962.0 1658.0,962.9 1659.0,964.1 1660.0,965.3 1661.0,966.4 1662.0,967.6 1663.0,968.8 1664.0,969.9 1665.0,970.9 1666.0,971.8 1667.0,972.6 1668.0,973.3 1669.0,973.8 1670.0,974.4 1671.0,975.0 1672.0,975.6 1673.0,976.2 1674.0,976.8 1675.0,977.3 1676.0,977.8 1677.0,978.2 1678.0,978.6 1679.0,979.0 1680.0,979.4 1681.0,979.8 1682.0,980.2 1683.0,980.6 1684.0,981.0 1685.0,981.4 1686.0,981.8 1687.0,982.2 1688.0,982.6 1689.0,982.9 1690.0,983.2 1691.0,983.4 1692.0,983.6 1693.0,983.7 1694.0,983.9 1695.0,984.0 1696.0,984.1 1697.0,984.3 1698.0,984.2 1699.0,984.1 1700.0,983.8 1701.0,983.5 1702.0,983.0 1703.0,982.5 1704.0,982.0 1705.0,981.3 1706.0,980.4 1707.0,979.5 1708.0,978.3 1709.0,977.1 1710.0,975.9 1711.0,974.7 1712.0,973.5 1713.0,972.4 1714.0,971.5 1715.0,970.8 1716.0,970.3 1717.0,970.0 1718.0,969.8 1719.0,969.6 1720.0,969.5 1721.0,969.4 1722.0,969.3 1723.0,969.3 1724.0,969.3 1725.0,969.3 1726.0,969.3 1727.0,969.3 1728.0,969.3 1729.0,969.3 1730.0,969.2 1731.0,968.9 1732.0,968.5 1733.0,967.9 1734.0,967.2 1735.0,966.5 1736.0,965.7 1737.0,965.0 1738.0,964.3 1739.0,963.6 1740.0,962.8 1741.0,962.2 1742.0,961.6 1743.0,961.1 1744.0,960.7 1745.0,960.3 1746.0,959.9 1747.0,959.5 1748.0,959.2 1749.0,958.8 1750.0,958.4 1751.0,958.0 1752.0,957.7 1753.0,957.4 1754.0,957.2 1755.0,957.1 1756.0,957.1 1757.0,957.1 1758.0,957.1 1759.0,957.1 1760.0,957.2 1761.0,957.4 1762.0,957.7 1763.0,958.0 1764.0,958.4 1765.0,958.7 1766.0,959.1 1767.0,959.4 1768.0,959.6 1769.0,959.6 1770.0,959.6 1771.0,959.5 1772.0,959.3 1773.0,959.1 1774.0,959.0 1775.0,958.8 1776.0,958.7 1777.0,958.5 1778.0,958.3 1779.0,958.2 1780.0,958.0 1781.0,957.9 1782.0,957.7 1783.0,957.7 1784.0,957.7 1785.0,957.8 1786.0,958.1 1787.0,958.4 1788.0,958.7 1789.0,959.0 1790.0,959.3 1791.0,959.6 1792.0,959.7 1793.0,959.7 1794.0,959.7 1795.0,959.6 1796.0,959.5 1797.0,959.4 1798.0,959.3 1799.0,959.2 1800.0,959.1 1801.0,959.1 1802.0,959.0 1803.0,958.9 1804.0,958.9 1805.0,959.1 1806.0,959.5 1807.0,960.0 1808.0,960.8 1809.0,961.6 1810.0,962.4 1811.0,963.2 1812.0,964.0 1813.0,964.8 1814.0,965.6 1815.0,966.4 1816.0,967.2 1817.0,967.8 1818.0,968.1 1819.0,968.1 1820.0,967.9 1821.0,967.4 1822.0,966.9 1823.0,966.4 1824.0,965.9 1825.0,965.4 1826.0,964.9 1827.0,964.4 1828.0,963.9 1829.0,963.4 1830.0,962.8 1831.0,962.3 1832.0,961.8 1833.0,961.3 1834.0,960.8 1835.0,960.3 1836.0,959.8 1837.0,959.3 1838.0,958.8 1839.0,958.3 1840.0,957.8 1841.0,957.2 1842.0,956.7 1843.0,956.2 1844.0,955.8 1845.0,955.7 1846.0,955.8 1847.0,956.1 1848.0,956.7 1849.0,957.4 1850.0,958.1 1851.0,958.8 1852.0,959.4 1853.0,960.1 1854.0,960.8 1855.0,961.5 1856.0,962.1 1857.0,962.8 1858.0,963.4 1859.0,963.9 1860.0,964.5 1861.0,965.0 1862.0,965.6 1863.0,966.2 1864.0,966.7 1865.0,967.3 1866.0,967.8 1867.0,968.4 1868.0,969.0 1869.0,969.5 1870.0,970.2 1871.0,970.9 1872.0,971.7 1873.0,972.6 1874.0,973.6 1875.0,974.6 1876.0,975.5 1877.0,976.5 1878.0,977.5 1879.0,978.5 1880.0,979.4 1881.0,980.4 1882.0,981.3 1883.0,982.1 1884.0,982.6 1885.0,983.1 1886.0,983.3 1887.0,983.5 1888.0,983.7 1889.0,983.8 1890.0,984.0 1891.0,984.2 1892.0,984.3 1893.0,984.5 1894.0,984.7 1895.0,984.8 1896.0,985.0 1897.0,985.1 1898.0,985.2 1899.0,985.1 1900.0,985.0 1901.0,984.9 1902.0,984.7 1903.0,984.5 1904.0,984.4 1905.0,984.2 1906.0,983.8 1907.0,983.4 1908.0,982.9 1909.0,982.4 1910.0,981.7 1911.0,981.1 1912.0,980.5 1913.0,979.8 1914.0,979.2 1915.0,978.6 1916.0,977.9 1917.0,977.3 1918.0,976.7 1919.0,976.0 1920.0,975.4 1921.0,974.9 1922.0,974.5 1923.0,974.3 1924.0,974.1 1925.0,974.0 1926.0,973.9 1927.0,973.8 1928.0,973.8 1929.0,973.7 1930.0,973.6 1931.0,973.5 1932.0,973.2 1933.0,972.7 1934.0,972.2 1935.0,971.4 1936.0,970.6 1937.0,969.7 1938.0,968.9 1939.0,968.1 1940.0,967.2 1941.0,966.4 1942.0,965.6 1943.0,965.0 1944.0,964.5 1945.0,964.2 1946.0,964.1 1947.0,964.1 1948.0,964.1 1949.0,964.0 1950.0,964.0 1951.0,964.0 1952.0,963.9 1953.0,963.9 1954.0,963.9 1955.0,963.9 1956.0,963.9 1957.0,964.0 1958.0,964.3 1959.0,964.5 1960.0,964.9 1961.0,965.2 1962.0,965.5 1963.0,965.9 1964.0,966.2 1965.0,966.5 1966.0,966.8 1967.0,966.9 1968.0,966.8 1969.0,966.6 1970.0,966.2 1971.0,965.7 1972.0,965.2 1973.0,964.7 1974.0,964.2 1975.0,963.7 1976.0,963.2 1977.0,962.7 1978.0,962.2 1979.0,961.7 1980.0,961.2 1981.0,960.7 1982.0,960.2 1983.0,959.7 1984.0,959.3 1985.0,959.0 1986.0,958.8 1987.0,958.6 1988.0,958.6 1989.0,958.5 1990.0,958.5 1991.0,958.4 1992.0,958.3 1993.0,958.1 1994.0,957.6 1995.0,957.0 1996.0,956.1 1997.0,955.2 1998.0,954.2 1999.0,953.3 2000.0,952.4 2001.0,951.9 2002.0,952.0 2003.0,952.6 2004.0,953.6 2005.0,955.1 2006.0,956.5 2007.0,958.0 2008.0,959.5 2009.0,960.7 2010.0,961.4 2011.0,961.5 2012.0,961.1 2013.0,960.1 2014.0,958.8 2015.0,957.5 2016.0,956.2 2017.0,954.9 2018.0,953.9 2019.0,953.3 2020.0,953.2 2021.0,953.6 2022.0,954.4 2023.0,955.3 2024.0,956.3 2025.0,957.2 2026.0,958.2 2027.0,958.8 2028.0,959.0 2029.0,958.9 2030.0,958.4 2031.0,957.6 2032.0,956.7 2033.0,955.9 2034.0,955.1 2035.0,954.2 2036.0,953.4 2037.0,952.6 2038.0,951.7 2039.0,950.9 2040.0,950.1 2041.0,949.2 2042.0,948.4 2043.0,947.6 2044.0,946.9 2045.0,946.5 2046.0,946.5 2047.0,946.8 2048.0,947.5 2049.0,948.3 2050.0,949.1 2051.0,949.9 2052.0,950.7 2053.0,951.6 2054.0,952.4 2055.0,953.2 2056.0,954.0 2057.0,954.8 2058.0,955.6 2059.0,956.4 2060.0,957.2 2061.0,958.0 2062.0,958.8 2063.0,959.4 2064.0,959.9 2065.0,960.2 2066.0,960.4 2067.0,960.5 2068.0,960.6 2069.0,960.7 2070.0,960.9 2071.0,961.2 2072.0,961.6 2073.0,962.1 2074.0,962.6 2075.0,963.2 2076.0,963.7 2077.0,964.3 2078.0,964.9 2079.0,965.4 2080.0,966.0 2081.0,966.5 2082.0,967.1 2083.0,967.6 2084.0,968.2 2085.0,968.7 2086.0,969.2 2087.0,969.6 2088.0,969.9 2088,992.0" fill="#e91e63"/>
<polygon points="640,992.0 640.0,980.0 641.0,980.2 642.0,980.6 643.0,981.0 644.0,981.4 645.0,981.8 646.0,982.3 647.0,982.7 648.0,983.1 649.0,983.4 650.0,983.4 651.0,983.3 652.0,983.0 653.0,982.6 654.0,982.1 655.0,981.7 656.0,981.3 657.0,981.0 658.0,980.8 659.0,980.6 660.0,980.5 661.0,980.3 662.0,980.2 663.0,980.0 664.0,979.7 665.0,979.3 666.0,978.9 667.0,978.3 668.0,977.7 669.0,977.1 670.0,976.5 671.0,975.9 672.0,975.3 673.0,974.6 674.0,973.8 675.0,973.0 676.0,972.1 677.0,971.1 678.0,970.1 679.0,969.2 680.0,968.2 681.0,967.2 682.0,966.2 683.0,965.3 684.0,964.3 685.0,963.3 686.0,962.3 687.0,961.3 688.0,960.4 689.0,959.6 690.0,959.0 691.0,958.6 692.0,958.4 693.0,958.4 694.0,958.4 695.0,958.4 696.0,958.4 697.0,958.4 698.0,958.4 699.0,958.4 700.0,958.4 701.0,958.3 702.0,958.1 703.0,957.8 704.0,957.4 705.0,956.8 706.0,956.3 707.0,955.8 708.0,955.2 709.0,954.9 710.0,954.7 711.0,954.7 712.0,954.9 713.0,955.2 714.0,955.6 715.0,955.9 716.0,956.3 717.0,956.4 718.0,956.4 719.0,956.1 720.0,955.7 721.0,955.0 722.0,954.4 723.0,953.7 724.0,953.1 725.0,952.4 726.0,951.7 727.0,951.1 728.0,950.4 729.0,949.8 730.0,949.1 731.0,948.5 732.0,947.8 733.0,947.1 734.0,946.7 735.0,946.5 736.0,946.7 737.0,947.1 738.0,947.9 739.0,948.7 740.0,949.5 741.0,950.3 742.0,950.5 743.0,949.7 744.0,947.9 745.0,945.1 746.0,941.4 747.0,937.4 748.0,933.3 749.0,929.3 750.0,925.8 751.0,923.0 752.0,921.0 753.0,919.6 754.0,919.0 755.0,918.6 756.0,918.2 757.0,917.8 758.0,917.3 759.0,916.9 760.0,916.5 761.0,916.7 762.0,917.3 763.0,918.5 764.0,920.2 765.0,922.4 766.0,924.5 767.0,926.7 768.0,928.9 769.0,930.5 770.0,931.6 771.0,932.1 772.0,932.1 773.0,931.5 774.0,930.8 775.0,930.2 776.0,929.6 777.0,929.0 778.0,928.4 779.0,928.0 780.0,927.9 781.0,927.9 782.0,928.2 783.0,928.8 784.0,929.3 785.0,929.8 786.0,930.4 787.0,930.3 788.0,929.5 789.0,928.1 790.0,926.1 791.0,923.4 792.0,920.8 793.0,918.1 794.0,915.4 795.0,913.3 796.0,912.0 797.0,911.3 798.0,911.3 799.0,912.1 800.0,913.2 801.0,914.5 802.0,916.1 803.0,918.0 804.0,920.0 805.0,922.1 806.0,924.1 807.0,926.1 808.0,927.9 809.0,929.7 810.0,931.3 811.0,932.8 812.0,934.2 813.0,935.7 814.0,937.1 815.0,938.5 816.0,939.9 817.0,941.4 818.0,943.0 819.0,944.7 820.0,946.4 821.0,948.2 822.0,950.0 823.0,951.8 824.0,953.6 825.0,955.4 826.0,957.2 827.0,959.0 828.0,960.8 829.0,962.6 830.0,964.4 831.0,966.2 832.0,967.8 833.0,969.3 834.0,970.7 835.0,971.9 836.0,973.1 837.0,974.3 838.0,975.4 839.0,976.6 840.0,977.7 841.0,978.9 842.0,979.9 843.0,980.8 844.0,981.4 845.0,981.8 846.0,982.1 847.0,982.3 848.0,982.5 849.0,982.7 850.0,982.9 851.0,983.1 852.0,983.3 853.0,983.5 854.0,983.6 855.0,983.6 856.0,983.5 857.0,983.2 858.0,982.8 859.0,982.4 860.0,981.9 861.0,981.5 862.0,981.0 863.0,980.6 864.0,980.2 865.0,979.7 866.0,979.3 867.0,978.8 868.0,978.4 869.0,977.9 870.0,977.5 871.0,977.0 872.0,976.5 873.0,976.0 874.0,975.6 875.0,975.1 876.0,974.6 877.0,974.2 878.0,973.7 879.0,973.2 880.0,972.7 881.0,972.3 882.0,971.8 883.0,971.2 884.0,970.5 885.0,969.8 886.0,968.9 887.0,968.1 888.0,967.3 889.0,966.4 890.0,965.6 891.0,964.7 892.0,963.9 893.0,963.1 894.0,962.2 895.0,961.4 896.0,960.6 897.0,959.7 898.0,958.9 899.0,958.1 900.0,957.5 901.0,957.0 902.0,956.5 903.0,956.2 904.0,955.8 905.0,955.5 906.0,955.1 907.0,954.8 908.0,954.6 909.0,954.5 910.0,954.5 911.0,954.6 912.0,954.7 913.0,954.9 914.0,955.1 915.0,955.3 916.0,955.6 917.0,955.9 918.0,955.9 919.0,955.7 920.0,955.2 921.0,954.4 922.0,953.4 923.0,952.5 924.0,951.5 925.0,950.6 926.0,949.6 927.0,948.5 928.0,947.4 929.0,946.3 930.0,945.1 931.0,943.9 932.0,942.7 933.0,941.5 934.0,940.3 935.0,939.1 936.0,937.9 937.0,936.7 938.0,935.5 939.0,934.3 940.0,933.1 941.0,931.9 942.0,930.8 943.0,930.1 944.0,929.8 945.0,929.9 946.0,930.6 947.0,932.1 948.0,933.8 949.0,935.8 950.0,938.2 951.0,940.3 952.0,941.9 953.0,943.0 954.0,943.4 955.0,943.4 956.0,943.2 957.0,942.9 958.0,942.7 959.0,942.5 960.0,942.3 961.0,942.2 962.0,942.1 963.0,942.0 964.0,941.9 965.0,941.8 966.0,941.7 967.0,941.6 968.0,941.6 969.0,941.7 970.0,942.0 971.0,942.5 972.0,943.3 973.0,944.3 974.0,945.2 975.0,946.1 976.0,946.8 977.0,947.3 978.0,947.7 979.0,947.9 980.0,948.0 981.0,948.1 982.0,948.2 983.0,948.3 984.0,948.4 985.0,948.5 986.0,948.6 987.0,948.7 988.0,948.8 989.0,949.0 990.0,949.1 991.0,949.3 992.0,949.5 993.0,949.6 994.0,949.4 995.0,949.1 996.0,948.6 997.0,947.8 998.0,947.1 999.0,946.3 1000.0,945.5 1001.0,944.7 1002.0,944.0 1003.0,943.6 1004.0,943.4 1005.0,943.5 1006.0,943.8 1007.0,944.3 1008.0,944.8 1009.0,945.3 1010.0,945.8 1011.0,946.3 1012.0,946.8 1013.0,947.3 1014.0,947.9 1015.0,948.5 1016.0,949.0 1017.0,949.6 1018.0,950.2 1019.0,950.8 1020.0,951.4 1021.0,952.0 1022.0,952.7 1023.0,953.6 1024.0,954.6 1025.0,955.7 1026.0,957.0 1027.0,958.3 1028.0,959.6 1029.0,960.6 1030.0,961.5 1031.0,962.2 1032.0,962.6 1033.0,962.9 1034.0,963.3 1035.0,963.6 1036.0,963.9 1037.0,964.3 1038.0,964.8 1039.0,965.3 1040.0,965.9 1041.0,966.6 1042.0,967.5 1043.0,968.6 1044.0,969.9 1045.0,971.3 1046.0,972.8 1047.0,974.2 1048.0,975.5 1049.0,976.7 1050.0,977.8 1051.0,978.9 1052.0,980.0 1053.0,981.1 1054.0,982.1 1055.0,983.1 1056.0,983.9 1057.0,984.3 1058.0,984.5 1059.0,984.3 1060.0,984.0 1061.0,983.6 1062.0,983.3 1063.0,982.9 1064.0,982.6 1065.0,982.2 1066.0,981.8 1067.0,981.5 1068.0,981.1 1069.0,980.8 1070.0,980.4 1071.0,980.1 1072.0,979.7 1073.0,979.4 1074.0,979.1 1075.0,978.9 1076.0,978.6 1077.0,978.4 1078.0,978.2 1079.0,977.9 1080.0,977.6 1081.0,977.2 1082.0,976.7 1083.0,976.2 1084.0,975.7 1085.0,975.1 1086.0,974.6 1087.0,974.0 1088.0,973.5 1089.0,973.0 1090.0,972.4 1091.0,971.8 1092.0,970.9 1093.0,969.9 1094.0,968.7 1095.0,967.4 1096.0,965.9 1097.0,964.5 1098.0,963.1 1099.0,961.6 1100.0,959.8 1101.0,957.8 1102.0,955.4 1103.0,952.8 1104.0,950.0 1105.0,947.2 1106.0,944.4 1107.0,941.6 1108.0,938.8 1109.0,936.0 1110.0,933.2 1111.0,930.4 1112.0,927.3 1113.0,924.1 1114.0,920.7 1115.0,917.1 1116.0,913.3 1117.0,909.6 1118.0,905.8 1119.0,902.0 1120.0,898.3 1121.0,894.5 1122.0,890.0 1123.0,883.8 1124.0,876.0 1125.0,866.4 1126.0,855.0 1127.0,838.1 1128.0,814.7 1129.0,784.6 1130.0,750.4 1131.0,714.7 1132.0,682.3 1133.0,656.8 1134.0,640.9 1135.0,631.6 1136.0,626.5 1137.0,625.1 1138.0,625.8 1139.0,626.6 1140.0,627.6 1141.0,628.8 1142.0,630.4 1143.0,632.2 1144.0,634.3 1145.0,636.5 1146.0,638.6 1147.0,640.8 1148.0,643.6 1149.0,646.9 1150.0,650.8 1151.0,655.3 1152.0,660.1 1153.0,665.0 1154.0,670.5 1155.0,676.5 1156.0,683.2 1157.0,690.4 1158.0,698.2 1159.0,706.1 1160.0,713.8 1161.0,721.6 1162.0,729.5 1163.0,737.4 1164.0,745.5 1165.0,753.7 1166.0,762.0 1167.0,770.2 1168.0,778.5 1169.0,786.7 1170.0,794.9 1171.0,802.3 1172.0,808.4 1173.0,813.4 1174.0,817.1 1175.0,819.6 1176.0,821.6 1177.0,823.6 1178.0,825.6 1179.0,827.6 1180.0,829.6 1181.0,831.4 1182.0,833.1 1183.0,834.7 1184.0,836.1 1185.0,837.3 1186.0,838.6 1187.0,839.8 1188.0,841.1 1189.0,842.3 1190.0,843.8 1191.0,845.7 1192.0,848.1 1193.0,850.8 1194.0,853.9 1195.0,856.3 1196.0,857.9 1197.0,858.7 1198.0,858.8 1199.0,858.0 1200.0,857.3 1201.0,856.6 1202.0,855.8 1203.0,855.1 1204.0,854.3 1205.0,853.6 1206.0,852.8 1207.0,852.1 1208.0,851.4 1209.0,850.6 1210.0,849.9 1211.0,849.1 1212.0,848.4 1213.0,847.6 1214.0,847.6 1215.0,848.3 1216.0,849.8 1217.0,851.9 1218.0,854.8 1219.0,857.7 1220.0,860.6 1221.0,863.5 1222.0,866.4 1223.0,869.2 1224.0,872.1 1225.0,874.9 1226.0,877.7 1227.0,880.5 1228.0,883.2 1229.0,885.8 1230.0,888.4 1231.0,891.1 1232.0,893.7 1233.0,896.3 1234.0,899.0 1235.0,901.6 1236.0,904.2 1237.0,906.8 1238.0,909.5 1239.0,912.1 1240.0,914.7 1241.0,917.3 1242.0,919.8 1243.0,922.3 1244.0,924.8 1245.0,927.2 1246.0,929.7 1247.0,932.1 1248.0,934.6 1249.0,937.0 1250.0,939.4 1251.0,941.9 1252.0,944.3 1253.0,946.8 1254.0,949.2 1255.0,951.7 1256.0,954.1 1257.0,956.6 1258.0,959.0 1259.0,961.2 1260.0,963.0 1261.0,964.6 1262.0,965.9 1263.0,966.9 1264.0,967.9 1265.0,968.9 1266.0,969.9 1267.0,971.0 1268.0,972.0 1269.0,973.0 1270.0,974.0 1271.0,975.0 1272.0,975.9 1273.0,976.5 1274.0,976.8 1275.0,976.7 1276.0,976.3 1277.0,975.7 1278.0,975.0 1279.0,974.4 1280.0,973.8 1281.0,973.2 1282.0,972.6 1283.0,971.9 1284.0,971.3 1285.0,970.7 1286.0,970.1 1287.0,969.4 1288.0,968.7 1289.0,967.9 1290.0,967.0 1291.0,965.9 1292.0,964.7 1293.0,963.5 1294.0,962.3 1295.0,961.1 1296.0,959.9 1297.0,958.7 1298.0,957.5 1299.0,956.2 1300.0,954.9 1301.0,953.6 1302.0,952.2 1303.0,950.8 1304.0,949.4 1305.0,948.0 1306.0,946.5 1307.0,945.1 1308.0,943.7 1309.0,942.3 1310.0,940.8 1311.0,939.4 1312.0,938.0 1313.0,936.6 1314.0,935.5 1315.0,934.6 1316.0,933.9 1317.0,933.5 1318.0,933.3 1319.0,933.1 1320.0,932.9 1321.0,932.7 1322.0,932.6 1323.0,932.5 1324.0,932.6 1325.0,932.7 1326.0,932.9 1327.0,933.1 1328.0,933.5 1329.0,933.9 1330.0,934.5 1331.0,935.2 1332.0,935.9 1333.0,936.7 1334.0,937.4 1335.0,938.2 1336.0,938.9 1337.0,939.6 1338.0,940.4 1339.0,941.1 1340.0,941.9 1341.0,942.6 1342.0,943.3 1343.0,944.1 1344.0,944.8 1345.0,945.6 1346.0,946.3 1347.0,947.0 1348.0,947.8 1349.0,948.3 1350.0,948.5 1351.0,948.6 1352.0,948.4 1353.0,947.9 1354.0,947.5 1355.0,947.0 1356.0,946.6 1357.0,946.2 1358.0,945.9 1359.0,945.7 1360.0,945.5 1361.0,945.4 1362.0,945.3 1363.0,945.2 1364.0,945.1 1365.0,944.9 1366.0,944.8 1367.0,944.7 1368.0,944.6 1369.0,944.5 1370.0,944.4 1371.0,944.2 1372.0,944.1 1373.0,944.0 1374.0,943.9 1375.0,944.0 1376.0,944.2 1377.0,944.4 1378.0,944.8 1379.0,945.5 1380.0,946.5 1381.0,947.8 1382.0,949.5 1383.0,951.6 1384.0,953.8 1385.0,955.5 1386.0,956.9 1387.0,957.9 1388.0,958.5 1389.0,958.7 1390.0,958.8 1391.0,958.9 1392.0,959.1 1393.0,959.2 1394.0,959.3 1395.0,959.5 1396.0,959.6 1397.0,959.8 1398.0,959.9 1399.0,960.0 1400.0,960.1 1401.0,960.1 1402.0,959.9 1403.0,959.6 1404.0,959.1 1405.0,958.5 1406.0,957.8 1407.0,957.2 1408.0,956.6 1409.0,956.0 1410.0,955.4 1411.0,954.8 1412.0,954.2 1413.0,953.6 1414.0,953.0 1415.0,952.4 1416.0,951.7 1417.0,951.1 1418.0,950.5 1419.0,949.9 1420.0,949.3 1421.0,948.9 1422.0,948.6 1423.0,948.6 1424.0,948.7 1425.0,949.1 1426.0,949.6 1427.0,950.0 1428.0,950.5 1429.0,951.0 1430.0,951.4 1431.0,951.9 1432.0,952.3 1433.0,952.8 1434.0,953.2 1435.0,953.7 1436.0,954.1 1437.0,954.6 1438.0,955.1 1439.0,955.7 1440.0,956.3 1441.0,956.9 1442.0,957.6 1443.0,958.3 1444.0,959.1 1445.0,959.8 1446.0,960.5 1447.0,961.2 1448.0,961.9 1449.0,962.6 1450.0,963.3 1451.0,964.0 1452.0,964.7 1453.0,965.4 1454.0,966.2 1455.0,967.0 1456.0,967.9 1457.0,968.8 1458.0,969.9 1459.0,971.0 1460.0,972.0 1461.0,973.1 1462.0,974.2 1463.0,975.3 1464.0,976.2 1465.0,977.1 1466.0,977.8 1467.0,978.3 1468.0,978.7 1469.0,979.1 1470.0,979.4 1471.0,979.8 1472.0,980.2 1473.0,980.6 1474.0,981.0 1475.0,981.5 1476.0,982.0 1477.0,982.5 1478.0,983.1 1479.0,983.6 1480.0,984.1 1481.0,984.3 1482.0,984.4 1483.0,984.3 1484.0,983.9 1485.0,983.4 1486.0,983.0 1487.0,982.5 1488.0,982.0 1489.0,981.7 1490.0,981.5 1491.0,981.5 1492.0,981.5 1493.0,981.6 1494.0,981.7 1495.0,981.9 1496.0,982.0 1497.0,982.0 1498.0,981.8 1499.0,981.5 1500.0,980.9 1501.0,980.2 1502.0,979.4 1503.0,978.6 1504.0,977.8 1505.0,977.0 1506.0,976.2 1507.0,975.4 1508.0,974.7 1509.0,973.9 1510.0,973.1 1511.0,972.4 1512.0,971.8 1513.0,971.2 1514.0,970.7 1515.0,970.1 1516.0,969.6 1517.0,969.1 1518.0,968.6 1519.0,968.0 1520.0,967.5 1521.0,967.0 1522.0,966.5 1523.0,965.9 1524.0,965.4 1525.0,964.8 1526.0,964.1 1527.0,963.4 1528.0,962.6 1529.0,961.8 1530.0,960.9 1531.0,960.1 1532.0,959.3 1533.0,958.4 1534.0,957.6 1535.0,956.7 1536.0,955.9 1537.0,955.1 1538.0,954.2 1539.0,953.4 1540.0,952.8 1541.0,952.5 1542.0,952.6 1543.0,953.0 1544.0,953.8 1545.0,954.7 1546.0,955.6 1547.0,956.5 1548.0,957.5 1549.0,958.4 1550.0,958.9 1551.0,959.0 1552.0,958.7 1553.0,957.9 1554.0,956.7 1555.0,955.3 1556.0,954.0 1557.0,952.6 1558.0,951.3 1559.0,950.0 1560.0,948.6 1561.0,947.3 1562.0,945.9 1563.0,944.6 1564.0,943.3 1565.0,941.9 1566.0,940.7 1567.0,939.9 1568.0,939.6 1569.0,939.7 1570.0,940.3 1571.0,941.3 1572.0,942.3 1573.0,943.2 1574.0,944.2 1575.0,945.2 1576.0,946.1 1577.0,946.9 1578.0,947.5 1579.0,947.7 1580.0,947.7 1581.0,947.3 1582.0,946.8 1583.0,946.3 1584.0,946.0 1585.0,946.1 1586.0,946.5 1587.0,947.2 1588.0,948.2 1589.0,949.4 1590.0,950.6 1591.0,951.8 1592.0,953.0 1593.0,954.2 1594.0,955.4 1595.0,956.6 1596.0,957.8 1597.0,959.0 1598.0,960.1 1599.0,961.3 1600.0,962.5 1601.0,963.7 1602.0,964.9 1603.0,965.8 1604.0,966.4 1605.0,966.7 1606.0,966.7 1607.0,966.4 1608.0,966.1 1609.0,965.8 1610.0,965.5 1611.0,965.3 1612.0,965.0 1613.0,964.7 1614.0,964.4 1615.0,964.1 1616.0,963.8 1617.0,963.5 1618.0,963.2 1619.0,963.0 1620.0,962.8 1621.0,962.7 1622.0,962.8 1623.0,962.9 1624.0,963.1 1625.0,963.3 1626.0,963.4 1627.0,963.6 1628.0,963.6 1629.0,963.5 1630.0,963.3 1631.0,963.0 1632.0,962.7 1633.0,962.4 1634.0,962.1 1635.0,961.8 1636.0,961.6 1637.0,961.5 1638.0,961.7 1639.0,961.9 1640.0,962.4 1641.0,962.9 1642.0,963.3 1643.0,963.8 1644.0,964.3 1645.0,964.8 1646.0,965.3 1647.0,965.7 1648.0,966.1 1649.0,966.2 1650.0,966.3 1651.0,966.2 1652.0,966.0 1653.0,965.8 1654.0,965.7 1655.0,965.7 1656.0,966.1 1657.0,966.6 1658.0,967.4 1659.0,968.4 1660.0,969.4 1661.0,970.4 1662.0,971.4 1663.0,972.4 1664.0,973.3 1665.0,974.2 1666.0,974.9 1667.0,975.6 1668.0,976.2 1669.0,976.7 1670.0,977.2 1671.0,977.6 1672.0,978.1 1673.0,978.6 1674.0,979.1 1675.0,979.6 1676.0,980.0 1677.0,980.3 1678.0,980.7 1679.0,981.0 1680.0,981.4 1681.0,981.7 1682.0,982.0 1683.0,982.4 1684.0,982.7 1685.0,983.0 1686.0,983.4 1687.0,983.7 1688.0,984.0 1689.0,984.3 1690.0,984.6 1691.0,984.8 1692.0,984.9 1693.0,985.0 1694.0,985.1 1695.0,985.3 1696.0,985.4 1697.0,985.5 1698.0,985.4 1699.0,985.3 1700.0,985.1 1701.0,984.8 1702.0,984.4 1703.0,984.0 1704.0,983.5 1705.0,982.9 1706.0,982.2 1707.0,981.4 1708.0,980.5 1709.0,979.4 1710.0,978.4 1711.0,977.4 1712.0,976.4 1713.0,975.4 1714.0,974.7 1715.0,974.1 1716.0,973.7 1717.0,973.4 1718.0,973.2 1719.0,973.1 1720.0,973.0 1721.0,972.9 1722.0,972.8 1723.0,972.8 1724.0,972.8 1725.0,972.8 1726.0,972.8 1727.0,972.8 1728.0,972.8 1729.0,972.8 1730.0,972.7 1731.0,972.5 1732.0,972.1 1733.0,971.6 1734.0,971.0 1735.0,970.4 1736.0,969.8 1737.0,969.2 1738.0,968.6 1739.0,968.0 1740.0,967.3 1741.0,966.8 1742.0,966.3 1743.0,965.9 1744.0,965.5 1745.0,965.2 1746.0,964.9 1747.0,964.6 1748.0,964.2 1749.0,963.9 1750.0,963.6 1751.0,963.3 1752.0,963.0 1753.0,962.8 1754.0,962.6 1755.0,962.5 1756.0,962.5 1757.0,962.5 1758.0,962.5 1759.0,962.5 1760.0,962.6 1761.0,962.8 1762.0,963.0 1763.0,963.3 1764.0,963.6 1765.0,963.9 1766.0,964.2 1767.0,964.4 1768.0,964.6 1769.0,964.6 1770.0,964.6 1771.0,964.5 1772.0,964.4 1773.0,964.2 1774.0,964.1 1775.0,964.0 1776.0,963.8 1777.0,963.7 1778.0,963.5 1779.0,963.4 1780.0,963.3 1781.0,963.1 1782.0,963.0 1783.0,963.0 1784.0,963.0 1785.0,963.1 1786.0,963.3 1787.0,963.6 1788.0,963.9 1789.0,964.1 1790.0,964.4 1791.0,964.6 1792.0,964.7 1793.0,964.7 1794.0,964.7 1795.0,964.6 1796.0,964.5 1797.0,964.5 1798.0,964.4 1799.0,964.3 1800.0,964.2 1801.0,964.2 1802.0,964.1 1803.0,964.0 1804.0,964.0 1805.0,964.2 1806.0,964.5 1807.0,965.0 1808.0,965.6 1809.0,966.3 1810.0,967.0 1811.0,967.6 1812.0,968.3 1813.0,969.0 1814.0,969.7 1815.0,970.4 1816.0,971.0 1817.0,971.5 1818.0,971.8 1819.0,971.8 1820.0,971.6 1821.0,971.2 1822.0,970.8 1823.0,970.4 1824.0,969.9 1825.0,969.5 1826.0,969.1 1827.0,968.6 1828.0,968.2 1829.0,967.8 1830.0,967.4 1831.0,966.9 1832.0,966.5 1833.0,966.1 1834.0,965.6 1835.0,965.2 1836.0,964.8 1837.0,964.3 1838.0,963.9 1839.0,963.5 1840.0,963.1 1841.0,962.6 1842.0,962.2 1843.0,961.8 1844.0,961.4 1845.0,961.3 1846.0,961.4 1847.0,961.7 1848.0,962.1 1849.0,962.7 1850.0,963.3 1851.0,963.9 1852.0,964.5 1853.0,965.1 1854.0,965.7 1855.0,966.2 1856.0,966.8 1857.0,967.3 1858.0,967.8 1859.0,968.3 1860.0,968.7 1861.0,969.2 1862.0,969.7 1863.0,970.2 1864.0,970.6 1865.0,971.1 1866.0,971.6 1867.0,972.0 1868.0,972.5 1869.0,973.0 1870.0,973.6 1871.0,974.2 1872.0,974.9 1873.0,975.6 1874.0,976.4 1875.0,977.3 1876.0,978.1 1877.0,978.9 1878.0,979.7 1879.0,980.6 1880.0,981.4 1881.0,982.2 1882.0,983.0 1883.0,983.6 1884.0,984.1 1885.0,984.4 1886.0,984.7 1887.0,984.8 1888.0,984.9 1889.0,985.1 1890.0,985.2 1891.0,985.4 1892.0,985.5 1893.0,985.6 1894.0,985.8 1895.0,985.9 1896.0,986.1 1897.0,986.2 1898.0,986.2 1899.0,986.2 1900.0,986.1 1901.0,986.0 1902.0,985.8 1903.0,985.7 1904.0,985.6 1905.0,985.4 1906.0,985.1 1907.0,984.8 1908.0,984.3 1909.0,983.8 1910.0,983.3 1911.0,982.8 1912.0,982.2 1913.0,981.7 1914.0,981.2 1915.0,980.6 1916.0,980.1 1917.0,979.6 1918.0,979.0 1919.0,978.5 1920.0,978.0 1921.0,977.6 1922.0,977.2 1923.0,977.0 1924.0,976.9 1925.0,976.8 1926.0,976.7 1927.0,976.6 1928.0,976.6 1929.0,976.5 1930.0,976.4 1931.0,976.3 1932.0,976.1 1933.0,975.7 1934.0,975.2 1935.0,974.6 1936.0,973.9 1937.0,973.2 1938.0,972.5 1939.0,971.8 1940.0,971.1 1941.0,970.3 1942.0,969.7 1943.0,969.2 1944.0,968.8 1945.0,968.5 1946.0,968.4 1947.0,968.4 1948.0,968.4 1949.0,968.4 1950.0,968.3 1951.0,968.3 1952.0,968.3 1953.0,968.2 1954.0,968.2 1955.0,968.2 1956.0,968.3 1957.0,968.4 1958.0,968.6 1959.0,968.8 1960.0,969.1 1961.0,969.3 1962.0,969.6 1963.0,969.9 1964.0,970.2 1965.0,970.5 1966.0,970.7 1967.0,970.8 1968.0,970.7 1969.0,970.5 1970.0,970.2 1971.0,969.8 1972.0,969.3 1973.0,968.9 1974.0,968.5 1975.0,968.1 1976.0,967.7 1977.0,967.2 1978.0,966.8 1979.0,966.4 1980.0,966.0 1981.0,965.6 1982.0,965.1 1983.0,964.7 1984.0,964.4 1985.0,964.1 1986.0,963.9 1987.0,963.8 1988.0,963.8 1989.0,963.7 1990.0,963.7 1991.0,963.6 1992.0,963.6 1993.0,963.3 1994.0,962.9 1995.0,962.4 1996.0,961.7 1997.0,960.9 1998.0,960.1 1999.0,959.3 2000.0,958.5 2001.0,958.1 2002.0,958.2 2003.0,958.7 2004.0,959.5 2005.0,960.8 2006.0,962.0 2007.0,963.3 2008.0,964.5 2009.0,965.5 2010.0,966.1 2011.0,966.2 2012.0,965.9 2013.0,965.1 2014.0,963.9 2015.0,962.8 2016.0,961.7 2017.0,960.6 2018.0,959.8 2019.0,959.3 2020.0,959.2 2021.0,959.5 2022.0,960.2 2023.0,961.0 2024.0,961.8 2025.0,962.6 2026.0,963.4 2027.0,963.9 2028.0,964.1 2029.0,964.0 2030.0,963.6 2031.0,962.9 2032.0,962.2 2033.0,961.5 2034.0,960.8 2035.0,960.1 2036.0,959.4 2037.0,958.7 2038.0,958.0 2039.0,957.3 2040.0,956.5 2041.0,955.8 2042.0,955.1 2043.0,954.4 2044.0,953.9 2045.0,953.6 2046.0,953.6 2047.0,953.8 2048.0,954.4 2049.0,955.1 2050.0,955.8 2051.0,956.4 2052.0,957.1 2053.0,957.8 2054.0,958.5 2055.0,959.2 2056.0,959.9 2057.0,960.6 2058.0,961.2 2059.0,961.9 2060.0,962.6 2061.0,963.3 2062.0,963.9 2063.0,964.4 2064.0,964.8 2065.0,965.1 2066.0,965.3 2067.0,965.4 2068.0,965.5 2069.0,965.6 2070.0,965.8 2071.0,966.0 2072.0,966.3 2073.0,966.7 2074.0,967.2 2075.0,967.6 2076.0,968.1 2077.0,968.6 2078.0,969.1 2079.0,969.5 2080.0,970.0 2081.0,970.5 2082.0,970.9 2083.0,971.4 2084.0,971.9 2085.0,972.3 2086.0,972.7 2087.0,973.0 2088.0,973.3 2088,992.0" fill="#f06292"/>
<polygon points="640,992.0 640.0,983.5 641.0,983.7 642.0,984.0 643.0,984.2 644.0,984.6 645.0,984.9 646.0,985.1 647.0,985.5 648.0,985.8 649.0,985.9 650.0,986.0 651.0,985.9 652.0,985.7 653.0,985.4 654.0,985.0 655.0,984.7 656.0,984.5 657.0,984.3 658.0,984.1 659.0,984.0 660.0,983.9 661.0,983.8 662.0,983.7 663.0,983.5 664.0,983.3 665.0,983.1 666.0,982.7 667.0,982.4 668.0,981.9 669.0,981.5 670.0,981.1 671.0,980.6 672.0,980.2 673.0,979.7 674.0,979.2 675.0,978.6 676.0,978.0 677.0,977.3 678.0,976.6 679.0,975.9 680.0,975.2 681.0,974.5 682.0,973.9 683.0,973.2 684.0,972.5 685.0,971.8 686.0,971.1 687.0,970.4 688.0,969.7 689.0,969.2 690.0,968.8 691.0,968.5 692.0,968.4 693.0,968.4 694.0,968.4 695.0,968.4 696.0,968.4 697.0,968.4 698.0,968.4 699.0,968.4 700.0,968.4 701.0,968.3 702.0,968.1 703.0,967.9 704.0,967.6 705.0,967.2 706.0,966.9 707.0,966.5 708.0,966.1 709.0,965.9 710.0,965.7 711.0,965.7 712.0,965.9 713.0,966.1 714.0,966.4 715.0,966.6 716.0,966.9 717.0,967.0 718.0,966.9 719.0,966.7 720.0,966.4 721.0,966.0 722.0,965.5 723.0,965.0 724.0,964.6 725.0,964.1 726.0,963.7 727.0,963.2 728.0,962.7 729.0,962.3 730.0,961.8 731.0,961.3 732.0,960.9 733.0,960.4 734.0,960.1 735.0,960.0 736.0,960.1 737.0,960.4 738.0,960.9 739.0,961.5 740.0,962.1 741.0,962.7 742.0,962.8 743.0,962.2 744.0,960.9 745.0,959.0 746.0,956.4 747.0,953.5 748.0,950.7 749.0,947.9 750.0,945.4 751.0,943.4 752.0,942.0 753.0,941.0 754.0,940.5 755.0,940.2 756.0,939.9 757.0,939.6 758.0,939.3 759.0,939.0 760.0,938.7 761.0,938.8 762.0,939.3 763.0,940.1 764.0,941.4 765.0,943.0 766.0,944.5 767.0,946.0 768.0,947.6 769.0,948.7 770.0,949.5 771.0,949.8 772.0,949.8 773.0,949.4 774.0,948.9 775.0,948.5 776.0,948.1 777.0,947.6 778.0,947.2 779.0,946.9 780.0,946.8 781.0,946.9 782.0,947.1 783.0,947.5 784.0,947.9 785.0,948.2 786.0,948.6 787.0,948.5 788.0,948.0 789.0,947.0 790.0,945.6 791.0,943.7 792.0,941.8 793.0,939.9 794.0,937.9 795.0,936.4 796.0,935.4 797.0,934.9 798.0,934.9 799.0,935.5 800.0,936.3 801.0,937.2 802.0,938.4 803.0,939.8 804.0,941.3 805.0,942.8 806.0,944.2 807.0,945.6 808.0,946.9 809.0,948.1 810.0,949.2 811.0,950.3 812.0,951.3 813.0,952.3 814.0,953.3 815.0,954.3 816.0,955.3 817.0,956.4 818.0,957.5 819.0,958.7 820.0,959.9 821.0,961.2 822.0,962.4 823.0,963.7 824.0,965.0 825.0,966.2 826.0,967.5 827.0,968.8 828.0,970.0 829.0,971.3 830.0,972.6 831.0,973.8 832.0,975.0 833.0,976.0 834.0,977.0 835.0,977.9 836.0,978.7 837.0,979.5 838.0,980.3 839.0,981.1 840.0,982.0 841.0,982.8 842.0,983.5 843.0,984.1 844.0,984.5 845.0,984.9 846.0,985.0 847.0,985.2 848.0,985.3 849.0,985.5 850.0,985.6 851.0,985.7 852.0,985.9 853.0,986.0 854.0,986.1 855.0,986.1 856.0,986.0 857.0,985.8 858.0,985.5 859.0,985.2 860.0,984.9 861.0,984.6 862.0,984.3 863.0,984.0 864.0,983.7 865.0,983.4 866.0,983.0 867.0,982.7 868.0,982.4 869.0,982.1 870.0,981.8 871.0,981.4 872.0,981.1 873.0,980.8 874.0,980.4 875.0,980.1 876.0,979.8 877.0,979.4 878.0,979.1 879.0,978.8 880.0,978.4 881.0,978.1 882.0,977.7 883.0,977.3 884.0,976.9 885.0,976.3 886.0,975.8 887.0,975.2 888.0,974.6 889.0,974.0 890.0,973.4 891.0,972.8 892.0,972.2 893.0,971.6 894.0,971.0 895.0,970.4 896.0,969.9 897.0,969.3 898.0,968.7 899.0,968.2 900.0,967.7 901.0,967.3 902.0,967.0 903.0,966.8 904.0,966.5 905.0,966.3 906.0,966.0 907.0,965.8 908.0,965.7 909.0,965.6 910.0,965.6 911.0,965.7 912.0,965.7 913.0,965.9 914.0,966.0 915.0,966.2 916.0,966.4 917.0,966.6 918.0,966.6 919.0,966.4 920.0,966.1 921.0,965.5 922.0,964.8 923.0,964.2 924.0,963.5 925.0,962.8 926.0,962.1 927.0,961.4 928.0,960.6 929.0,959.8 930.0,959.0 931.0,958.1 932.0,957.3 933.0,956.4 934.0,955.6 935.0,954.8 936.0,953.9 937.0,953.1 938.0,952.2 939.0,951.4 940.0,950.5 941.0,949.7 942.0,948.9 943.0,948.4 944.0,948.2 945.0,948.3 946.0,948.8 947.0,949.8 948.0,951.0 949.0,952.4 950.0,954.1 951.0,955.6 952.0,956.7 953.0,957.5 954.0,957.8 955.0,957.8 956.0,957.6 957.0,957.4 958.0,957.3 959.0,957.1 960.0,957.0 961.0,956.9 962.0,956.9 963.0,956.8 964.0,956.7 965.0,956.7 966.0,956.6 967.0,956.5 968.0,956.5 969.0,956.6 970.0,956.8 971.0,957.2 972.0,957.7 973.0,958.4 974.0,959.1 975.0,959.7 976.0,960.2 977.0,960.5 978.0,960.8 979.0,960.9 980.0,961.0 981.0,961.1 982.0,961.1 983.0,961.2 984.0,961.3 985.0,961.4 986.0,961.4 987.0,961.5 988.0,961.6 989.0,961.7 990.0,961.8 991.0,961.9 992.0,962.1 993.0,962.1 994.0,962.0 995.0,961.8 996.0,961.4 997.0,960.9 998.0,960.4 999.0,959.8 1000.0,959.2 1001.0,958.7 1002.0,958.2 1003.0,957.9 1004.0,957.8 1005.0,957.8 1006.0,958.1 1007.0,958.4 1008.0,958.8 1009.0,959.1 1010.0,959.5 1011.0,959.8 1012.0,960.2 1013.0,960.5 1014.0,960.9 1015.0,961.3 1016.0,961.8 1017.0,962.2 1018.0,962.6 1019.0,963.0 1020.0,963.4 1021.0,963.8 1022.0,964.3 1023.0,964.9 1024.0,965.6 1025.0,966.4 1026.0,967.4 1027.0,968.3 1028.0,969.2 1029.0,969.9 1030.0,970.5 1031.0,971.0 1032.0,971.3 1033.0,971.5 1034.0,971.8 1035.0,972.0 1036.0,972.2 1037.0,972.5 1038.0,972.8 1039.0,973.2 1040.0,973.6 1041.0,974.1 1042.0,974.8 1043.0,975.5 1044.0,976.4 1045.0,977.4 1046.0,978.5 1047.0,979.5 1048.0,980.4 1049.0,981.2 1050.0,982.0 1051.0,982.8 1052.0,983.5 1053.0,984.3 1054.0,985.0 1055.0,985.8 1056.0,986.3 1057.0,986.6 1058.0,986.7 1059.0,986.6 1060.0,986.3 1061.0,986.1 1062.0,985.8 1063.0,985.6 1064.0,985.3 1065.0,985.1 1066.0,984.8 1067.0,984.6 1068.0,984.3 1069.0,984.1 1070.0,983.8 1071.0,983.6 1072.0,983.4 1073.0,983.1 1074.0,982.9 1075.0,982.8 1076.0,982.6 1077.0,982.4 1078.0,982.3 1079.0,982.1 1080.0,981.9 1081.0,981.6 1082.0,981.2 1083.0,980.9 1084.0,980.5 1085.0,980.1 1086.0,979.7 1087.0,979.4 1088.0,979.0 1089.0,978.6 1090.0,978.2 1091.0,977.8 1092.0,977.2 1093.0,976.5 1094.0,975.6 1095.0,974.6 1096.0,973.6 1097.0,972.6 1098.0,971.6 1099.0,970.6 1100.0,969.3 1101.0,967.9 1102.0,966.3 1103.0,964.4 1104.0,962.4 1105.0,960.5 1106.0,958.5 1107.0,956.5 1108.0,954.6 1109.0,952.6 1110.0,950.6 1111.0,948.6 1112.0,946.5 1113.0,944.2 1114.0,941.8 1115.0,939.1 1116.0,936.4 1117.0,933.6 1118.0,930.8 1119.0,928.0 1120.0,925.1 1121.0,922.3 1122.0,918.9 1123.0,914.2 1124.0,908.2 1125.0,900.8 1126.0,892.0 1127.0,878.7 1128.0,859.9 1129.0,835.3 1130.0,806.5 1131.0,775.7 1132.0,747.0 1133.0,724.1 1134.0,709.6 1135.0,701.1 1136.0,696.7 1137.0,695.5 1138.0,696.2 1139.0,696.8 1140.0,697.6 1141.0,698.6 1142.0,699.9 1143.0,701.6 1144.0,703.6 1145.0,705.5 1146.0,707.5 1147.0,709.5 1148.0,712.1 1149.0,715.1 1150.0,718.6 1151.0,722.7 1152.0,727.1 1153.0,731.5 1154.0,736.4 1155.0,741.9 1156.0,747.8 1157.0,754.3 1158.0,761.2 1159.0,768.1 1160.0,774.9 1161.0,781.7 1162.0,788.5 1163.0,795.4 1164.0,802.3 1165.0,809.3 1166.0,816.3 1167.0,823.2 1168.0,830.1 1169.0,837.0 1170.0,843.7 1171.0,849.8 1172.0,854.8 1173.0,858.8 1174.0,861.9 1175.0,863.9 1176.0,865.5 1177.0,867.1 1178.0,868.7 1179.0,870.3 1180.0,871.9 1181.0,873.4 1182.0,874.7 1183.0,875.9 1184.0,877.0 1185.0,878.0 1186.0,879.0 1187.0,880.0 1188.0,881.0 1189.0,882.0 1190.0,883.2 1191.0,884.7 1192.0,886.5 1193.0,888.7 1194.0,891.1 1195.0,893.0 1196.0,894.3 1197.0,894.9 1198.0,894.9 1199.0,894.4 1200.0,893.8 1201.0,893.2 1202.0,892.6 1203.0,892.0 1204.0,891.5 1205.0,890.9 1206.0,890.3 1207.0,889.7 1208.0,889.1 1209.0,888.6 1210.0,888.0 1211.0,887.4 1212.0,886.8 1213.0,886.2 1214.0,886.2 1215.0,886.8 1216.0,887.9 1217.0,889.6 1218.0,891.9 1219.0,894.1 1220.0,896.4 1221.0,898.6 1222.0,900.8 1223.0,903.1 1224.0,905.3 1225.0,907.4 1226.0,909.6 1227.0,911.7 1228.0,913.7 1229.0,915.7 1230.0,917.7 1231.0,919.7 1232.0,921.7 1233.0,923.7 1234.0,925.7 1235.0,927.6 1236.0,929.6 1237.0,931.6 1238.0,933.5 1239.0,935.4 1240.0,937.4 1241.0,939.3 1242.0,941.1 1243.0,942.9 1244.0,944.7 1245.0,946.4 1246.0,948.1 1247.0,949.8 1248.0,951.5 1249.0,953.3 1250.0,955.0 1251.0,956.7 1252.0,958.4 1253.0,960.2 1254.0,961.9 1255.0,963.6 1256.0,965.3 1257.0,967.0 1258.0,968.8 1259.0,970.3 1260.0,971.6 1261.0,972.7 1262.0,973.6 1263.0,974.3 1264.0,975.0 1265.0,975.8 1266.0,976.5 1267.0,977.2 1268.0,977.9 1269.0,978.6 1270.0,979.3 1271.0,980.0 1272.0,980.7 1273.0,981.1 1274.0,981.3 1275.0,981.2 1276.0,980.9 1277.0,980.5 1278.0,980.1 1279.0,979.6 1280.0,979.2 1281.0,978.7 1282.0,978.3 1283.0,977.9 1284.0,977.4 1285.0,977.0 1286.0,976.5 1287.0,976.1 1288.0,975.6 1289.0,975.0 1290.0,974.4 1291.0,973.6 1292.0,972.8 1293.0,972.0 1294.0,971.1 1295.0,970.3 1296.0,969.4 1297.0,968.6 1298.0,967.7 1299.0,966.8 1300.0,965.9 1301.0,965.0 1302.0,964.0 1303.0,963.0 1304.0,962.0 1305.0,961.0 1306.0,960.0 1307.0,959.0 1308.0,958.0 1309.0,957.0 1310.0,956.0 1311.0,955.0 1312.0,954.0 1313.0,953.0 1314.0,952.2 1315.0,951.6 1316.0,951.1 1317.0,950.8 1318.0,950.7 1319.0,950.5 1320.0,950.4 1321.0,950.2 1322.0,950.1 1323.0,950.1 1324.0,950.2 1325.0,950.2 1326.0,950.4 1327.0,950.5 1328.0,950.8 1329.0,951.1 1330.0,951.5 1331.0,952.0 1332.0,952.5 1333.0,953.0 1334.0,953.6 1335.0,954.1 1336.0,954.6 1337.0,955.1 1338.0,955.6 1339.0,956.2 1340.0,956.7 1341.0,957.2 1342.0,957.7 1343.0,958.3 1344.0,958.8 1345.0,959.3 1346.0,959.8 1347.0,960.3 1348.0,960.9 1349.0,961.2 1350.0,961.4 1351.0,961.4 1352.0,961.3 1353.0,961.0 1354.0,960.6 1355.0,960.3 1356.0,960.0 1357.0,959.8 1358.0,959.6 1359.0,959.4 1360.0,959.3 1361.0,959.2 1362.0,959.1 1363.0,959.0 1364.0,958.9 1365.0,958.9 1366.0,958.8 1367.0,958.7 1368.0,958.6 1369.0,958.5 1370.0,958.4 1371.0,958.4 1372.0,958.3 1373.0,958.2 1374.0,958.2 1375.0,958.2 1376.0,958.3 1377.0,958.5 1378.0,958.8 1379.0,959.2 1380.0,959.9 1381.0,960.9 1382.0,962.1 1383.0,963.5 1384.0,965.1 1385.0,966.3 1386.0,967.3 1387.0,968.0 1388.0,968.4 1389.0,968.5 1390.0,968.6 1391.0,968.7 1392.0,968.8 1393.0,968.9 1394.0,969.0 1395.0,969.1 1396.0,969.2 1397.0,969.3 1398.0,969.4 1399.0,969.5 1400.0,969.6 1401.0,969.5 1402.0,969.4 1403.0,969.2 1404.0,968.8 1405.0,968.4 1406.0,967.9 1407.0,967.5 1408.0,967.1 1409.0,966.7 1410.0,966.2 1411.0,965.8 1412.0,965.4 1413.0,964.9 1414.0,964.5 1415.0,964.1 1416.0,963.7 1417.0,963.2 1418.0,962.8 1419.0,962.4 1420.0,961.9 1421.0,961.6 1422.0,961.4 1423.0,961.4 1424.0,961.5 1425.0,961.8 1426.0,962.1 1427.0,962.5 1428.0,962.8 1429.0,963.1 1430.0,963.4 1431.0,963.7 1432.0,964.1 1433.0,964.4 1434.0,964.7 1435.0,965.0 1436.0,965.3 1437.0,965.7 1438.0,966.0 1439.0,966.4 1440.0,966.8 1441.0,967.3 1442.0,967.8 1443.0,968.3 1444.0,968.8 1445.0,969.3 1446.0,969.8 1447.0,970.3 1448.0,970.8 1449.0,971.3 1450.0,971.8 1451.0,972.3 1452.0,972.8 1453.0,973.3 1454.0,973.8 1455.0,974.4 1456.0,975.0 1457.0,975.7 1458.0,976.4 1459.0,977.2 1460.0,977.9 1461.0,978.7 1462.0,979.4 1463.0,980.2 1464.0,980.9 1465.0,981.5 1466.0,982.0 1467.0,982.4 1468.0,982.6 1469.0,982.9 1470.0,983.2 1471.0,983.4 1472.0,983.7 1473.0,983.9 1474.0,984.3 1475.0,984.6 1476.0,984.9 1477.0,985.3 1478.0,985.7 1479.0,986.1 1480.0,986.4 1481.0,986.6 1482.0,986.7 1483.0,986.6 1484.0,986.3 1485.0,986.0 1486.0,985.6 1487.0,985.3 1488.0,985.0 1489.0,984.8 1490.0,984.6 1491.0,984.6 1492.0,984.6 1493.0,984.7 1494.0,984.8 1495.0,984.9 1496.0,984.9 1497.0,985.0 1498.0,984.8 1499.0,984.6 1500.0,984.2 1501.0,983.7 1502.0,983.1 1503.0,982.6 1504.0,982.0 1505.0,981.5 1506.0,980.9 1507.0,980.3 1508.0,979.8 1509.0,979.2 1510.0,978.7 1511.0,978.2 1512.0,977.8 1513.0,977.4 1514.0,977.0 1515.0,976.6 1516.0,976.2 1517.0,975.9 1518.0,975.5 1519.0,975.1 1520.0,974.8 1521.0,974.4 1522.0,974.0 1523.0,973.6 1524.0,973.3 1525.0,972.8 1526.0,972.4 1527.0,971.9 1528.0,971.3 1529.0,970.7 1530.0,970.1 1531.0,969.5 1532.0,968.9 1533.0,968.3 1534.0,967.8 1535.0,967.2 1536.0,966.6 1537.0,966.0 1538.0,965.4 1539.0,964.8 1540.0,964.4 1541.0,964.2 1542.0,964.2 1543.0,964.5 1544.0,965.1 1545.0,965.7 1546.0,966.4 1547.0,967.0 1548.0,967.7 1549.0,968.3 1550.0,968.7 1551.0,968.8 1552.0,968.6 1553.0,968.0 1554.0,967.1 1555.0,966.2 1556.0,965.2 1557.0,964.3 1558.0,963.3 1559.0,962.4 1560.0,961.5 1561.0,960.5 1562.0,959.6 1563.0,958.6 1564.0,957.7 1565.0,956.7 1566.0,955.9 1567.0,955.3 1568.0,955.1 1569.0,955.2 1570.0,955.6 1571.0,956.3 1572.0,957.0 1573.0,957.6 1574.0,958.3 1575.0,959.0 1576.0,959.7 1577.0,960.3 1578.0,960.6 1579.0,960.8 1580.0,960.8 1581.0,960.5 1582.0,960.2 1583.0,959.8 1584.0,959.6 1585.0,959.7 1586.0,959.9 1587.0,960.4 1588.0,961.2 1589.0,962.0 1590.0,962.9 1591.0,963.7 1592.0,964.5 1593.0,965.4 1594.0,966.2 1595.0,967.1 1596.0,967.9 1597.0,968.7 1598.0,969.6 1599.0,970.4 1600.0,971.2 1601.0,972.1 1602.0,972.9 1603.0,973.6 1604.0,974.0 1605.0,974.2 1606.0,974.2 1607.0,974.0 1608.0,973.8 1609.0,973.6 1610.0,973.4 1611.0,973.2 1612.0,973.0 1613.0,972.8 1614.0,972.6 1615.0,972.3 1616.0,972.1 1617.0,971.9 1618.0,971.7 1619.0,971.6 1620.0,971.4 1621.0,971.4 1622.0,971.4 1623.0,971.5 1624.0,971.6 1625.0,971.8 1626.0,971.9 1627.0,972.0 1628.0,972.0 1629.0,971.9 1630.0,971.8 1631.0,971.6 1632.0,971.4 1633.0,971.2 1634.0,970.9 1635.0,970.7 1636.0,970.6 1637.0,970.5 1638.0,970.6 1639.0,970.8 1640.0,971.1 1641.0,971.5 1642.0,971.8 1643.0,972.2 1644.0,972.5 1645.0,972.8 1646.0,973.2 1647.0,973.5 1648.0,973.7 1649.0,973.9 1650.0,973.9 1651.0,973.8 1652.0,973.7 1653.0,973.6 1654.0,973.4 1655.0,973.5 1656.0,973.7 1657.0,974.1 1658.0,974.7 1659.0,975.4 1660.0,976.1 1661.0,976.8 1662.0,977.5 1663.0,978.2 1664.0,978.9 1665.0,979.5 1666.0,980.0 1667.0,980.4 1668.0,980.8 1669.0,981.2 1670.0,981.5 1671.0,981.9 1672.0,982.2 1673.0,982.6 1674.0,982.9 1675.0,983.2 1676.0,983.5 1677.0,983.8 1678.0,984.0 1679.0,984.3 1680.0,984.5 1681.0,984.7 1682.0,985.0 1683.0,985.2 1684.0,985.4 1685.0,985.7 1686.0,985.9 1687.0,986.1 1688.0,986.4 1689.0,986.6 1690.0,986.8 1691.0,986.9 1692.0,987.0 1693.0,987.1 1694.0,987.2 1695.0,987.2 1696.0,987.3 1697.0,987.4 1698.0,987.4 1699.0,987.3 1700.0,987.1 1701.0,986.9 1702.0,986.6 1703.0,986.3 1704.0,986.0 1705.0,985.6 1706.0,985.1 1707.0,984.5 1708.0,983.9 1709.0,983.1 1710.0,982.4 1711.0,981.7 1712.0,981.0 1713.0,980.3 1714.0,979.8 1715.0,979.4 1716.0,979.1 1717.0,978.9 1718.0,978.8 1719.0,978.7 1720.0,978.6 1721.0,978.5 1722.0,978.5 1723.0,978.5 1724.0,978.5 1725.0,978.5 1726.0,978.5 1727.0,978.5 1728.0,978.5 1729.0,978.5 1730.0,978.4 1731.0,978.3 1732.0,978.0 1733.0,977.7 1734.0,977.2 1735.0,976.8 1736.0,976.4 1737.0,975.9 1738.0,975.5 1739.0,975.1 1740.0,974.6 1741.0,974.3 1742.0,973.9 1743.0,973.6 1744.0,973.4 1745.0,973.1 1746.0,972.9 1747.0,972.7 1748.0,972.5 1749.0,972.2 1750.0,972.0 1751.0,971.8 1752.0,971.6 1753.0,971.4 1754.0,971.3 1755.0,971.2 1756.0,971.2 1757.0,971.2 1758.0,971.2 1759.0,971.2 1760.0,971.3 1761.0,971.4 1762.0,971.6 1763.0,971.8 1764.0,972.0 1765.0,972.2 1766.0,972.4 1767.0,972.6 1768.0,972.7 1769.0,972.7 1770.0,972.7 1771.0,972.6 1772.0,972.5 1773.0,972.4 1774.0,972.3 1775.0,972.3 1776.0,972.2 1777.0,972.1 1778.0,972.0 1779.0,971.9 1780.0,971.8 1781.0,971.7 1782.0,971.6 1783.0,971.6 1784.0,971.6 1785.0,971.7 1786.0,971.8 1787.0,972.0 1788.0,972.2 1789.0,972.4 1790.0,972.6 1791.0,972.7 1792.0,972.8 1793.0,972.8 1794.0,972.8 1795.0,972.7 1796.0,972.7 1797.0,972.6 1798.0,972.6 1799.0,972.5 1800.0,972.4 1801.0,972.4 1802.0,972.3 1803.0,972.3 1804.0,972.3 1805.0,972.4 1806.0,972.6 1807.0,973.0 1808.0,973.4 1809.0,973.9 1810.0,974.4 1811.0,974.8 1812.0,975.3 1813.0,975.8 1814.0,976.3 1815.0,976.8 1816.0,977.2 1817.0,977.6 1818.0,977.8 1819.0,977.8 1820.0,977.7 1821.0,977.4 1822.0,977.1 1823.0,976.8 1824.0,976.5 1825.0,976.2 1826.0,975.9 1827.0,975.6 1828.0,975.3 1829.0,974.9 1830.0,974.6 1831.0,974.3 1832.0,974.0 1833.0,973.7 1834.0,973.4 1835.0,973.1 1836.0,972.8 1837.0,972.5 1838.0,972.2 1839.0,971.9 1840.0,971.6 1841.0,971.3 1842.0,971.0 1843.0,970.7 1844.0,970.5 1845.0,970.4 1846.0,970.4 1847.0,970.6 1848.0,971.0 1849.0,971.4 1850.0,971.8 1851.0,972.2 1852.0,972.6 1853.0,973.0 1854.0,973.4 1855.0,973.8 1856.0,974.2 1857.0,974.6 1858.0,974.9 1859.0,975.3 1860.0,975.6 1861.0,976.0 1862.0,976.3 1863.0,976.6 1864.0,977.0 1865.0,977.3 1866.0,977.6 1867.0,977.9 1868.0,978.3 1869.0,978.6 1870.0,979.0 1871.0,979.4 1872.0,979.9 1873.0,980.5 1874.0,981.0 1875.0,981.6 1876.0,982.2 1877.0,982.8 1878.0,983.4 1879.0,983.9 1880.0,984.5 1881.0,985.1 1882.0,985.6 1883.0,986.1 1884.0,986.4 1885.0,986.7 1886.0,986.8 1887.0,986.9 1888.0,987.0 1889.0,987.1 1890.0,987.2 1891.0,987.3 1892.0,987.4 1893.0,987.5 1894.0,987.6 1895.0,987.7 1896.0,987.8 1897.0,987.9 1898.0,987.9 1899.0,987.9 1900.0,987.9 1901.0,987.8 1902.0,987.7 1903.0,987.6 1904.0,987.5 1905.0,987.3 1906.0,987.1 1907.0,986.9 1908.0,986.6 1909.0,986.3 1910.0,985.9 1911.0,985.5 1912.0,985.1 1913.0,984.8 1914.0,984.4 1915.0,984.0 1916.0,983.6 1917.0,983.3 1918.0,982.9 1919.0,982.5 1920.0,982.1 1921.0,981.8 1922.0,981.6 1923.0,981.4 1924.0,981.3 1925.0,981.3 1926.0,981.2 1927.0,981.2 1928.0,981.1 1929.0,981.1 1930.0,981.0 1931.0,981.0 1932.0,980.8 1933.0,980.5 1934.0,980.2 1935.0,979.8 1936.0,979.2 1937.0,978.8 1938.0,978.2 1939.0,977.8 1940.0,977.2 1941.0,976.8 1942.0,976.3 1943.0,975.9 1944.0,975.7 1945.0,975.5 1946.0,975.4 1947.0,975.4 1948.0,975.4 1949.0,975.3 1950.0,975.3 1951.0,975.3 1952.0,975.3 1953.0,975.3 1954.0,975.3 1955.0,975.2 1956.0,975.3 1957.0,975.4 1958.0,975.5 1959.0,975.7 1960.0,975.9 1961.0,976.0 1962.0,976.2 1963.0,976.4 1964.0,976.6 1965.0,976.8 1966.0,977.0 1967.0,977.1 1968.0,977.0 1969.0,976.9 1970.0,976.6 1971.0,976.3 1972.0,976.0 1973.0,975.8 1974.0,975.5 1975.0,975.2 1976.0,974.9 1977.0,974.6 1978.0,974.3 1979.0,974.0 1980.0,973.7 1981.0,973.4 1982.0,973.1 1983.0,972.8 1984.0,972.5 1985.0,972.4 1986.0,972.2 1987.0,972.1 1988.0,972.1 1989.0,972.1 1990.0,972.1 1991.0,972.0 1992.0,972.0 1993.0,971.8 1994.0,971.5 1995.0,971.1 1996.0,970.6 1997.0,970.1 1998.0,969.5 1999.0,968.9 2000.0,968.4 2001.0,968.2 2002.0,968.2 2003.0,968.5 2004.0,969.1 2005.0,970.0 2006.0,970.9 2007.0,971.8 2008.0,972.6 2009.0,973.4 2010.0,973.8 2011.0,973.9 2012.0,973.6 2013.0,973.0 2014.0,972.2 2015.0,971.5 2016.0,970.7 2017.0,969.9 2018.0,969.3 2019.0,969.0 2020.0,968.9 2021.0,969.1 2022.0,969.6 2023.0,970.2 2024.0,970.7 2025.0,971.3 2026.0,971.9 2027.0,972.2 2028.0,972.4 2029.0,972.3 2030.0,972.0 2031.0,971.5 2032.0,971.0 2033.0,970.5 2034.0,970.0 2035.0,969.5 2036.0,969.0 2037.0,968.5 2038.0,968.0 2039.0,967.5 2040.0,967.0 2041.0,966.5 2042.0,966.0 2043.0,965.5 2044.0,965.1 2045.0,964.9 2046.0,964.9 2047.0,965.1 2048.0,965.5 2049.0,966.0 2050.0,966.5 2051.0,967.0 2052.0,967.4 2053.0,967.9 2054.0,968.4 2055.0,968.9 2056.0,969.4 2057.0,969.9 2058.0,970.3 2059.0,970.8 2060.0,971.3 2061.0,971.8 2062.0,972.2 2063.0,972.6 2064.0,972.9 2065.0,973.1 2066.0,973.2 2067.0,973.3 2068.0,973.3 2069.0,973.4 2070.0,973.5 2071.0,973.7 2072.0,973.9 2073.0,974.2 2074.0,974.5 2075.0,974.8 2076.0,975.2 2077.0,975.5 2078.0,975.8 2079.0,976.2 2080.0,976.5 2081.0,976.8 2082.0,977.2 2083.0,977.5 2084.0,977.8 2085.0,978.1 2086.0,978.4 2087.0,978.7 2088.0,978.8 2088,992.0" fill="#f8bbd0"/>
<polygon points="640,992.0 640.0,990.1 641.0,990.2 642.0,990.2 643.0,990.3 644.0,990.4 645.0,990.4 646.0,990.5 647.0,990.6 648.0,990.6 649.0,990.7 650.0,990.7 651.0,990.7 652.0,990.6 653.0,990.5 654.0,990.5 655.0,990.4 656.0,990.3 657.0,990.3 658.0,990.3 659.0,990.2 660.0,990.2 661.0,990.2 662.0,990.2 663.0,990.1 664.0,990.1 665.0,990.0 666.0,990.0 667.0,989.9 668.0,989.8 669.0,989.7 670.0,989.6 671.0,989.5 672.0,989.4 673.0,989.3 674.0,989.2 675.0,989.1 676.0,988.9 677.0,988.8 678.0,988.6 679.0,988.5 680.0,988.3 681.0,988.2 682.0,988.0 683.0,987.9 684.0,987.7 685.0,987.6 686.0,987.4 687.0,987.3 688.0,987.1 689.0,987.0 690.0,986.9 691.0,986.8 692.0,986.8 693.0,986.8 694.0,986.8 695.0,986.8 696.0,986.8 697.0,986.8 698.0,986.8 699.0,986.8 700.0,986.8 701.0,986.8 702.0,986.7 703.0,986.7 704.0,986.6 705.0,986.5 706.0,986.5 707.0,986.4 708.0,986.3 709.0,986.2 710.0,986.2 711.0,986.2 712.0,986.2 713.0,986.3 714.0,986.4 715.0,986.4 716.0,986.5 717.0,986.5 718.0,986.5 719.0,986.4 720.0,986.4 721.0,986.3 722.0,986.2 723.0,986.1 724.0,986.0 725.0,985.9 726.0,985.8 727.0,985.7 728.0,985.6 729.0,985.5 730.0,985.4 731.0,985.3 732.0,985.2 733.0,985.1 734.0,985.0 735.0,985.0 736.0,985.0 737.0,985.0 738.0,985.2 739.0,985.3 740.0,985.4 741.0,985.5 742.0,985.6 743.0,985.4 744.0,985.2 745.0,984.7 746.0,984.2 747.0,983.5 748.0,982.9 749.0,982.3 750.0,981.7 751.0,981.3 752.0,981.0 753.0,980.8 754.0,980.7 755.0,980.6 756.0,980.5 757.0,980.5 758.0,980.4 759.0,980.4 760.0,980.3 761.0,980.3 762.0,980.4 763.0,980.6 764.0,980.9 765.0,981.2 766.0,981.5 767.0,981.9 768.0,982.2 769.0,982.5 770.0,982.6 771.0,982.7 772.0,982.7 773.0,982.6 774.0,982.5 775.0,982.4 776.0,982.3 777.0,982.2 778.0,982.1 779.0,982.1 780.0,982.1 781.0,982.1 782.0,982.1 783.0,982.2 784.0,982.3 785.0,982.4 786.0,982.5 787.0,982.4 788.0,982.3 789.0,982.1 790.0,981.8 791.0,981.4 792.0,981.0 793.0,980.5 794.0,980.1 795.0,979.8 796.0,979.6 797.0,979.4 798.0,979.5 799.0,979.6 800.0,979.8 801.0,980.0 802.0,980.2 803.0,980.5 804.0,980.8 805.0,981.2 806.0,981.5 807.0,981.8 808.0,982.1 809.0,982.3 810.0,982.6 811.0,982.8 812.0,983.0 813.0,983.3 814.0,983.5 815.0,983.7 816.0,983.9 817.0,984.2 818.0,984.4 819.0,984.7 820.0,984.9 821.0,985.2 822.0,985.5 823.0,985.8 824.0,986.1 825.0,986.3 826.0,986.6 827.0,986.9 828.0,987.2 829.0,987.4 830.0,987.7 831.0,988.0 832.0,988.3 833.0,988.5 834.0,988.7 835.0,988.9 836.0,989.1 837.0,989.3 838.0,989.4 839.0,989.6 840.0,989.8 841.0,990.0 842.0,990.1 843.0,990.3 844.0,990.4 845.0,990.4 846.0,990.5 847.0,990.5 848.0,990.5 849.0,990.6 850.0,990.6 851.0,990.6 852.0,990.7 853.0,990.7 854.0,990.7 855.0,990.7 856.0,990.7 857.0,990.6 858.0,990.6 859.0,990.5 860.0,990.4 861.0,990.4 862.0,990.3 863.0,990.2 864.0,990.2 865.0,990.1 866.0,990.0 867.0,990.0 868.0,989.9 869.0,989.8 870.0,989.7 871.0,989.7 872.0,989.6 873.0,989.5 874.0,989.5 875.0,989.4 876.0,989.3 877.0,989.2 878.0,989.2 879.0,989.1 880.0,989.0 881.0,988.9 882.0,988.9 883.0,988.8 884.0,988.7 885.0,988.6 886.0,988.4 887.0,988.3 888.0,988.2 889.0,988.0 890.0,987.9 891.0,987.8 892.0,987.6 893.0,987.5 894.0,987.4 895.0,987.3 896.0,987.1 897.0,987.0 898.0,986.9 899.0,986.8 900.0,986.7 901.0,986.6 902.0,986.5 903.0,986.4 904.0,986.4 905.0,986.3 906.0,986.3 907.0,986.2 908.0,986.2 909.0,986.2 910.0,986.2 911.0,986.2 912.0,986.2 913.0,986.2 914.0,986.3 915.0,986.3 916.0,986.4 917.0,986.4 918.0,986.4 919.0,986.4 920.0,986.3 921.0,986.2 922.0,986.0 923.0,985.9 924.0,985.7 925.0,985.6 926.0,985.4 927.0,985.3 928.0,985.1 929.0,984.9 930.0,984.7 931.0,984.5 932.0,984.4 933.0,984.2 934.0,984.0 935.0,983.8 936.0,983.6 937.0,983.4 938.0,983.2 939.0,983.1 940.0,982.9 941.0,982.7 942.0,982.5 943.0,982.4 944.0,982.4 945.0,982.4 946.0,982.5 947.0,982.7 948.0,983.0 949.0,983.3 950.0,983.7 951.0,984.0 952.0,984.2 953.0,984.4 954.0,984.5 955.0,984.5 956.0,984.4 957.0,984.4 958.0,984.4 959.0,984.3 960.0,984.3 961.0,984.3 962.0,984.3 963.0,984.3 964.0,984.2 965.0,984.2 966.0,984.2 967.0,984.2 968.0,984.2 969.0,984.2 970.0,984.3 971.0,984.3 972.0,984.5 973.0,984.6 974.0,984.8 975.0,984.9 976.0,985.0 977.0,985.1 978.0,985.1 979.0,985.2 980.0,985.2 981.0,985.2 982.0,985.2 983.0,985.2 984.0,985.2 985.0,985.3 986.0,985.3 987.0,985.3 988.0,985.3 989.0,985.3 990.0,985.4 991.0,985.4 992.0,985.4 993.0,985.4 994.0,985.4 995.0,985.4 996.0,985.3 997.0,985.2 998.0,985.0 999.0,984.9 1000.0,984.8 1001.0,984.7 1002.0,984.6 1003.0,984.5 1004.0,984.5 1005.0,984.5 1006.0,984.5 1007.0,984.6 1008.0,984.7 1009.0,984.8 1010.0,984.8 1011.0,984.9 1012.0,985.0 1013.0,985.1 1014.0,985.2 1015.0,985.3 1016.0,985.3 1017.0,985.4 1018.0,985.5 1019.0,985.6 1020.0,985.7 1021.0,985.8 1022.0,985.9 1023.0,986.0 1024.0,986.2 1025.0,986.4 1026.0,986.6 1027.0,986.8 1028.0,987.0 1029.0,987.1 1030.0,987.3 1031.0,987.4 1032.0,987.4 1033.0,987.5 1034.0,987.5 1035.0,987.6 1036.0,987.6 1037.0,987.7 1038.0,987.8 1039.0,987.9 1040.0,988.0 1041.0,988.1 1042.0,988.2 1043.0,988.4 1044.0,988.6 1045.0,988.8 1046.0,989.0 1047.0,989.2 1048.0,989.4 1049.0,989.6 1050.0,989.8 1051.0,990.0 1052.0,990.1 1053.0,990.3 1054.0,990.5 1055.0,990.6 1056.0,990.7 1057.0,990.8 1058.0,990.8 1059.0,990.8 1060.0,990.8 1061.0,990.7 1062.0,990.6 1063.0,990.6 1064.0,990.5 1065.0,990.5 1066.0,990.4 1067.0,990.4 1068.0,990.3 1069.0,990.3 1070.0,990.2 1071.0,990.2 1072.0,990.1 1073.0,990.1 1074.0,990.0 1075.0,990.0 1076.0,989.9 1077.0,989.9 1078.0,989.9 1079.0,989.8 1080.0,989.8 1081.0,989.7 1082.0,989.6 1083.0,989.6 1084.0,989.5 1085.0,989.4 1086.0,989.3 1087.0,989.2 1088.0,989.1 1089.0,989.1 1090.0,989.0 1091.0,988.9 1092.0,988.7 1093.0,988.6 1094.0,988.4 1095.0,988.2 1096.0,988.0 1097.0,987.7 1098.0,987.5 1099.0,987.3 1100.0,988.0 1101.0,986.8 1102.0,985.6 1103.0,984.4 1104.0,983.2 1105.0,981.9 1106.0,980.7 1107.0,979.5 1108.0,978.3 1109.0,977.1 1110.0,975.9 1111.0,974.7 1112.0,973.5 1113.0,972.3 1114.0,971.1 1115.0,969.8 1116.0,968.6 1117.0,967.4 1118.0,966.2 1119.0,965.0 1120.0,963.0 1121.0,961.0 1122.0,959.0 1123.0,957.0 1124.0,955.0 1125.0,953.0 1126.0,951.0 1127.0,949.0 1128.0,947.0 1129.0,945.0 1130.0,943.0 1131.0,943.1 1132.0,943.3 1133.0,943.4 1134.0,943.6 1135.0,943.7 1136.0,943.9 1137.0,944.0 1138.0,944.2 1139.0,944.3 1140.0,944.5 1141.0,944.6 1142.0,942.7 1143.0,940.9 1144.0,939.0 1145.0,937.2 1146.0,935.3 1147.0,933.5 1148.0,931.6 1149.0,929.8 1150.0,927.9 1151.0,928.3 1152.0,930.0 1153.0,931.8 1154.0,933.5 1155.0,935.3 1156.0,937.0 1157.0,938.8 1158.0,940.5 1159.0,942.3 1160.0,944.0 1161.0,945.8 1162.0,947.5 1163.0,949.3 1164.0,951.5 1165.0,953.7 1166.0,955.9 1167.0,958.1 1168.0,960.2 1169.0,962.4 1170.0,964.6 1171.0,966.7 1172.0,967.7 1173.0,968.7 1174.0,969.7 1175.0,970.7 1176.0,971.7 1177.0,972.6 1178.0,973.6 1179.0,974.6 1180.0,975.6 1181.0,976.6 1182.0,977.6 1183.0,977.5 1184.0,977.3 1185.0,977.2 1186.0,977.1 1187.0,977.0 1188.0,976.8 1189.0,976.7 1190.0,976.6 1191.0,976.4 1192.0,976.3 1193.0,976.2 1194.0,976.1 1195.0,976.1 1196.0,976.2 1197.0,976.3 1198.0,976.4 1199.0,976.5 1200.0,976.6 1201.0,976.7 1202.0,976.8 1203.0,976.9 1204.0,977.0 1205.0,977.1 1206.0,977.2 1207.0,977.3 1208.0,977.4 1209.0,977.5 1210.0,977.6 1211.0,977.5 1212.0,977.5 1213.0,977.4 1214.0,977.3 1215.0,977.2 1216.0,977.2 1217.0,977.1 1218.0,977.0 1219.0,976.9 1220.0,976.9 1221.0,976.8 1222.0,976.7 1223.0,976.7 1224.0,976.6 1225.0,976.5 1226.0,976.4 1227.0,976.4 1228.0,976.3 1229.0,976.2 1230.0,976.1 1231.0,976.1 1232.0,976.0 1233.0,976.3 1234.0,976.6 1235.0,976.9 1236.0,977.1 1237.0,977.4 1238.0,977.7 1239.0,978.0 1240.0,978.3 1241.0,978.6 1242.0,978.9 1243.0,979.1 1244.0,979.4 1245.0,979.7 1246.0,980.0 1247.0,980.3 1248.0,980.6 1249.0,980.9 1250.0,981.1 1251.0,981.4 1252.0,981.7 1253.0,982.0 1254.0,982.3 1255.0,982.6 1256.0,982.9 1257.0,983.1 1258.0,983.4 1259.0,983.7 1260.0,984.0 1261.0,987.8 1262.0,988.0 1263.0,988.1 1264.0,988.3 1265.0,988.4 1266.0,988.6 1267.0,988.7 1268.0,988.9 1269.0,989.1 1270.0,989.2 1271.0,989.4 1272.0,989.5 1273.0,989.6 1274.0,989.6 1275.0,989.6 1276.0,989.6 1277.0,989.5 1278.0,989.4 1279.0,989.3 1280.0,989.2 1281.0,989.1 1282.0,989.0 1283.0,988.9 1284.0,988.8 1285.0,988.7 1286.0,988.6 1287.0,988.5 1288.0,988.4 1289.0,988.3 1290.0,988.1 1291.0,988.0 1292.0,987.8 1293.0,987.6 1294.0,987.4 1295.0,987.2 1296.0,987.0 1297.0,986.8 1298.0,986.7 1299.0,986.5 1300.0,986.3 1301.0,986.1 1302.0,985.8 1303.0,985.6 1304.0,985.4 1305.0,985.2 1306.0,985.0 1307.0,984.7 1308.0,984.5 1309.0,984.3 1310.0,984.1 1311.0,983.9 1312.0,983.6 1313.0,983.4 1314.0,983.2 1315.0,983.1 1316.0,983.0 1317.0,982.9 1318.0,982.9 1319.0,982.9 1320.0,982.8 1321.0,982.8 1322.0,982.8 1323.0,982.8 1324.0,982.8 1325.0,982.8 1326.0,982.8 1327.0,982.9 1328.0,982.9 1329.0,983.0 1330.0,983.1 1331.0,983.2 1332.0,983.3 1333.0,983.4 1334.0,983.5 1335.0,983.7 1336.0,983.8 1337.0,983.9 1338.0,984.0 1339.0,984.1 1340.0,984.2 1341.0,984.3 1342.0,984.5 1343.0,984.6 1344.0,984.7 1345.0,984.8 1346.0,984.9 1347.0,985.0 1348.0,985.1 1349.0,985.2 1350.0,985.3 1351.0,985.3 1352.0,985.2 1353.0,985.2 1354.0,985.1 1355.0,985.0 1356.0,985.0 1357.0,984.9 1358.0,984.9 1359.0,984.8 1360.0,984.8 1361.0,984.8 1362.0,984.8 1363.0,984.7 1364.0,984.7 1365.0,984.7 1366.0,984.7 1367.0,984.7 1368.0,984.7 1369.0,984.6 1370.0,984.6 1371.0,984.6 1372.0,984.6 1373.0,984.6 1374.0,984.6 1375.0,984.6 1376.0,984.6 1377.0,984.6 1378.0,984.7 1379.0,984.8 1380.0,984.9 1381.0,985.2 1382.0,985.4 1383.0,985.7 1384.0,986.1 1385.0,986.4 1386.0,986.6 1387.0,986.7 1388.0,986.8 1389.0,986.8 1390.0,986.9 1391.0,986.9 1392.0,986.9 1393.0,986.9 1394.0,986.9 1395.0,987.0 1396.0,987.0 1397.0,987.0 1398.0,987.0 1399.0,987.0 1400.0,987.1 1401.0,987.1 1402.0,987.0 1403.0,987.0 1404.0,986.9 1405.0,986.8 1406.0,986.7 1407.0,986.6 1408.0,986.5 1409.0,986.4 1410.0,986.3 1411.0,986.2 1412.0,986.1 1413.0,986.0 1414.0,986.0 1415.0,985.9 1416.0,985.8 1417.0,985.7 1418.0,985.6 1419.0,985.5 1420.0,985.4 1421.0,985.3 1422.0,985.3 1423.0,985.3 1424.0,985.3 1425.0,985.4 1426.0,985.4 1427.0,985.5 1428.0,985.6 1429.0,985.6 1430.0,985.7 1431.0,985.8 1432.0,985.9 1433.0,985.9 1434.0,986.0 1435.0,986.1 1436.0,986.1 1437.0,986.2 1438.0,986.3 1439.0,986.4 1440.0,986.5 1441.0,986.6 1442.0,986.7 1443.0,986.8 1444.0,986.9 1445.0,987.0 1446.0,987.1 1447.0,987.2 1448.0,987.3 1449.0,987.4 1450.0,987.6 1451.0,987.7 1452.0,987.8 1453.0,987.9 1454.0,988.0 1455.0,988.1 1456.0,988.3 1457.0,988.4 1458.0,988.6 1459.0,988.7 1460.0,988.9 1461.0,989.1 1462.0,989.2 1463.0,989.4 1464.0,989.6 1465.0,989.7 1466.0,989.8 1467.0,989.9 1468.0,989.9 1469.0,990.0 1470.0,990.1 1471.0,990.1 1472.0,990.2 1473.0,990.2 1474.0,990.3 1475.0,990.4 1476.0,990.4 1477.0,990.5 1478.0,990.6 1479.0,990.7 1480.0,990.8 1481.0,990.8 1482.0,990.8 1483.0,990.8 1484.0,990.7 1485.0,990.7 1486.0,990.6 1487.0,990.5 1488.0,990.5 1489.0,990.4 1490.0,990.4 1491.0,990.4 1492.0,990.4 1493.0,990.4 1494.0,990.4 1495.0,990.4 1496.0,990.4 1497.0,990.4 1498.0,990.4 1499.0,990.4 1500.0,990.3 1501.0,990.2 1502.0,990.1 1503.0,989.9 1504.0,989.8 1505.0,989.7 1506.0,989.6 1507.0,989.4 1508.0,989.3 1509.0,989.2 1510.0,989.1 1511.0,989.0 1512.0,988.9 1513.0,988.8 1514.0,988.7 1515.0,988.6 1516.0,988.5 1517.0,988.5 1518.0,988.4 1519.0,988.3 1520.0,988.2 1521.0,988.1 1522.0,988.0 1523.0,988.0 1524.0,987.9 1525.0,987.8 1526.0,987.7 1527.0,987.6 1528.0,987.4 1529.0,987.3 1530.0,987.2 1531.0,987.1 1532.0,986.9 1533.0,986.8 1534.0,986.7 1535.0,986.5 1536.0,986.4 1537.0,986.3 1538.0,986.1 1539.0,986.0 1540.0,985.9 1541.0,985.9 1542.0,985.9 1543.0,986.0 1544.0,986.1 1545.0,986.2 1546.0,986.4 1547.0,986.5 1548.0,986.6 1549.0,986.8 1550.0,986.9 1551.0,986.9 1552.0,986.8 1553.0,986.7 1554.0,986.5 1555.0,986.3 1556.0,986.1 1557.0,985.9 1558.0,985.7 1559.0,985.5 1560.0,985.3 1561.0,985.1 1562.0,984.9 1563.0,984.7 1564.0,984.5 1565.0,984.2 1566.0,984.0 1567.0,983.9 1568.0,983.9 1569.0,983.9 1570.0,984.0 1571.0,984.1 1572.0,984.3 1573.0,984.4 1574.0,984.6 1575.0,984.7 1576.0,984.9 1577.0,985.0 1578.0,985.1 1579.0,985.1 1580.0,985.1 1581.0,985.1 1582.0,985.0 1583.0,984.9 1584.0,984.9 1585.0,984.9 1586.0,984.9 1587.0,985.1 1588.0,985.2 1589.0,985.4 1590.0,985.6 1591.0,985.8 1592.0,986.0 1593.0,986.1 1594.0,986.3 1595.0,986.5 1596.0,986.7 1597.0,986.9 1598.0,987.1 1599.0,987.2 1600.0,987.4 1601.0,987.6 1602.0,987.8 1603.0,987.9 1604.0,988.0 1605.0,988.1 1606.0,988.1 1607.0,988.0 1608.0,988.0 1609.0,987.9 1610.0,987.9 1611.0,987.9 1612.0,987.8 1613.0,987.8 1614.0,987.7 1615.0,987.7 1616.0,987.6 1617.0,987.6 1618.0,987.5 1619.0,987.5 1620.0,987.5 1621.0,987.5 1622.0,987.5 1623.0,987.5 1624.0,987.5 1625.0,987.5 1626.0,987.6 1627.0,987.6 1628.0,987.6 1629.0,987.6 1630.0,987.6 1631.0,987.5 1632.0,987.5 1633.0,987.4 1634.0,987.4 1635.0,987.3 1636.0,987.3 1637.0,987.3 1638.0,987.3 1639.0,987.3 1640.0,987.4 1641.0,987.5 1642.0,987.6 1643.0,987.6 1644.0,987.7 1645.0,987.8 1646.0,987.9 1647.0,987.9 1648.0,988.0 1649.0,988.0 1650.0,988.0 1651.0,988.0 1652.0,988.0 1653.0,987.9 1654.0,987.9 1655.0,987.9 1656.0,988.0 1657.0,988.1 1658.0,988.2 1659.0,988.3 1660.0,988.5 1661.0,988.7 1662.0,988.8 1663.0,989.0 1664.0,989.1 1665.0,989.2 1666.0,989.4 1667.0,989.5 1668.0,989.5 1669.0,989.6 1670.0,989.7 1671.0,989.8 1672.0,989.9 1673.0,989.9 1674.0,990.0 1675.0,990.1 1676.0,990.1 1677.0,990.2 1678.0,990.2 1679.0,990.3 1680.0,990.4 1681.0,990.4 1682.0,990.5 1683.0,990.5 1684.0,990.6 1685.0,990.6 1686.0,990.7 1687.0,990.7 1688.0,990.8 1689.0,990.8 1690.0,990.8 1691.0,990.9 1692.0,990.9 1693.0,990.9 1694.0,990.9 1695.0,991.0 1696.0,991.0 1697.0,991.0 1698.0,991.0 1699.0,991.0 1700.0,990.9 1701.0,990.9 1702.0,990.8 1703.0,990.8 1704.0,990.7 1705.0,990.6 1706.0,990.5 1707.0,990.4 1708.0,990.2 1709.0,990.1 1710.0,989.9 1711.0,989.7 1712.0,989.6 1713.0,989.4 1714.0,989.3 1715.0,989.2 1716.0,989.2 1717.0,989.1 1718.0,989.1 1719.0,989.1 1720.0,989.1 1721.0,989.0 1722.0,989.0 1723.0,989.0 1724.0,989.0 1725.0,989.0 1726.0,989.0 1727.0,989.0 1728.0,989.0 1729.0,989.0 1730.0,989.0 1731.0,989.0 1732.0,988.9 1733.0,988.8 1734.0,988.8 1735.0,988.7 1736.0,988.6 1737.0,988.5 1738.0,988.4 1739.0,988.3 1740.0,988.2 1741.0,988.1 1742.0,988.0 1743.0,988.0 1744.0,987.9 1745.0,987.8 1746.0,987.8 1747.0,987.8 1748.0,987.7 1749.0,987.7 1750.0,987.6 1751.0,987.6 1752.0,987.5 1753.0,987.5 1754.0,987.4 1755.0,987.4 1756.0,987.4 1757.0,987.4 1758.0,987.4 1759.0,987.4 1760.0,987.4 1761.0,987.5 1762.0,987.5 1763.0,987.5 1764.0,987.6 1765.0,987.6 1766.0,987.7 1767.0,987.7 1768.0,987.8 1769.0,987.8 1770.0,987.8 1771.0,987.7 1772.0,987.7 1773.0,987.7 1774.0,987.7 1775.0,987.7 1776.0,987.6 1777.0,987.6 1778.0,987.6 1779.0,987.6 1780.0,987.5 1781.0,987.5 1782.0,987.5 1783.0,987.5 1784.0,987.5 1785.0,987.5 1786.0,987.6 1787.0,987.6 1788.0,987.6 1789.0,987.7 1790.0,987.7 1791.0,987.8 1792.0,987.8 1793.0,987.8 1794.0,987.8 1795.0,987.8 1796.0,987.7 1797.0,987.7 1798.0,987.7 1799.0,987.7 1800.0,987.7 1801.0,987.7 1802.0,987.7 1803.0,987.7 1804.0,987.7 1805.0,987.7 1806.0,987.7 1807.0,987.8 1808.0,987.9 1809.0,988.0 1810.0,988.1 1811.0,988.2 1812.0,988.3 1813.0,988.4 1814.0,988.5 1815.0,988.6 1816.0,988.8 1817.0,988.8 1818.0,988.9 1819.0,988.9 1820.0,988.8 1821.0,988.8 1822.0,988.7 1823.0,988.6 1824.0,988.6 1825.0,988.5 1826.0,988.4 1827.0,988.4 1828.0,988.3 1829.0,988.2 1830.0,988.2 1831.0,988.1 1832.0,988.0 1833.0,988.0 1834.0,987.9 1835.0,987.8 1836.0,987.8 1837.0,987.7 1838.0,987.6 1839.0,987.6 1840.0,987.5 1841.0,987.4 1842.0,987.4 1843.0,987.3 1844.0,987.3 1845.0,987.2 1846.0,987.3 1847.0,987.3 1848.0,987.4 1849.0,987.5 1850.0,987.6 1851.0,987.6 1852.0,987.7 1853.0,987.8 1854.0,987.9 1855.0,988.0 1856.0,988.1 1857.0,988.2 1858.0,988.2 1859.0,988.3 1860.0,988.4 1861.0,988.5 1862.0,988.5 1863.0,988.6 1864.0,988.7 1865.0,988.8 1866.0,988.8 1867.0,988.9 1868.0,989.0 1869.0,989.1 1870.0,989.1 1871.0,989.2 1872.0,989.3 1873.0,989.5 1874.0,989.6 1875.0,989.7 1876.0,989.8 1877.0,990.0 1878.0,990.1 1879.0,990.2 1880.0,990.4 1881.0,990.5 1882.0,990.6 1883.0,990.7 1884.0,990.8 1885.0,990.8 1886.0,990.9 1887.0,990.9 1888.0,990.9 1889.0,990.9 1890.0,991.0 1891.0,991.0 1892.0,991.0 1893.0,991.0 1894.0,991.0 1895.0,991.1 1896.0,991.1 1897.0,991.1 1898.0,991.1 1899.0,991.1 1900.0,991.1 1901.0,991.1 1902.0,991.0 1903.0,991.0 1904.0,991.0 1905.0,991.0 1906.0,990.9 1907.0,990.9 1908.0,990.8 1909.0,990.7 1910.0,990.7 1911.0,990.6 1912.0,990.5 1913.0,990.4 1914.0,990.3 1915.0,990.2 1916.0,990.2 1917.0,990.1 1918.0,990.0 1919.0,989.9 1920.0,989.8 1921.0,989.8 1922.0,989.7 1923.0,989.7 1924.0,989.7 1925.0,989.6 1926.0,989.6 1927.0,989.6 1928.0,989.6 1929.0,989.6 1930.0,989.6 1931.0,989.6 1932.0,989.5 1933.0,989.5 1934.0,989.4 1935.0,989.3 1936.0,989.2 1937.0,989.1 1938.0,989.0 1939.0,988.9 1940.0,988.8 1941.0,988.6 1942.0,988.5 1943.0,988.5 1944.0,988.4 1945.0,988.4 1946.0,988.3 1947.0,988.3 1948.0,988.3 1949.0,988.3 1950.0,988.3 1951.0,988.3 1952.0,988.3 1953.0,988.3 1954.0,988.3 1955.0,988.3 1956.0,988.3 1957.0,988.3 1958.0,988.4 1959.0,988.4 1960.0,988.4 1961.0,988.5 1962.0,988.5 1963.0,988.6 1964.0,988.6 1965.0,988.7 1966.0,988.7 1967.0,988.7 1968.0,988.7 1969.0,988.7 1970.0,988.6 1971.0,988.6 1972.0,988.5 1973.0,988.4 1974.0,988.4 1975.0,988.3 1976.0,988.2 1977.0,988.2 1978.0,988.1 1979.0,988.0 1980.0,988.0 1981.0,987.9 1982.0,987.8 1983.0,987.8 1984.0,987.7 1985.0,987.7 1986.0,987.6 1987.0,987.6 1988.0,987.6 1989.0,987.6 1990.0,987.6 1991.0,987.6 1992.0,987.6 1993.0,987.6 1994.0,987.5 1995.0,987.4 1996.0,987.3 1997.0,987.2 1998.0,987.1 1999.0,986.9 2000.0,986.8 2001.0,986.8 2002.0,986.8 2003.0,986.8 2004.0,987.0 2005.0,987.2 2006.0,987.4 2007.0,987.5 2008.0,987.7 2009.0,987.9 2010.0,988.0 2011.0,988.0 2012.0,988.0 2013.0,987.8 2014.0,987.7 2015.0,987.5 2016.0,987.3 2017.0,987.1 2018.0,987.0 2019.0,986.9 2020.0,986.9 2021.0,987.0 2022.0,987.1 2023.0,987.2 2024.0,987.3 2025.0,987.4 2026.0,987.6 2027.0,987.6 2028.0,987.7 2029.0,987.7 2030.0,987.6 2031.0,987.5 2032.0,987.4 2033.0,987.3 2034.0,987.2 2035.0,987.1 2036.0,986.9 2037.0,986.8 2038.0,986.7 2039.0,986.6 2040.0,986.5 2041.0,986.4 2042.0,986.3 2043.0,986.2 2044.0,986.1 2045.0,986.0 2046.0,986.0 2047.0,986.1 2048.0,986.2 2049.0,986.3 2050.0,986.4 2051.0,986.5 2052.0,986.6 2053.0,986.7 2054.0,986.8 2055.0,986.9 2056.0,987.0 2057.0,987.1 2058.0,987.2 2059.0,987.3 2060.0,987.4 2061.0,987.6 2062.0,987.7 2063.0,987.7 2064.0,987.8 2065.0,987.8 2066.0,987.9 2067.0,987.9 2068.0,987.9 2069.0,987.9 2070.0,987.9 2071.0,988.0 2072.0,988.0 2073.0,988.1 2074.0,988.2 2075.0,988.2 2076.0,988.3 2077.0,988.4 2078.0,988.4 2079.0,988.5 2080.0,988.6 2081.0,988.7 2082.0,988.7 2083.0,988.8 2084.0,988.9 2085.0,988.9 2086.0,989.0 2087.0,989.1 2088.0,989.1 2088,992.0" fill="#fce4ec"/>
<line x1="636" y1="992" x2="2163" y2="992" stroke="#cccccc" stroke-width="2"/>
<rect x="379" y="610" width="53" height="9.600000000000023" fill="#880e4f"/>
<rect x="379" y="619.6" width="53" height="48.0" fill="#c2185b"/>
<rect x="379" y="667.6" width="53" height="56.60000000000002" fill="#e91e63"/>
<rect x="379" y="724.2" width="53" height="69.79999999999995" fill="#f06292"/>
<rect x="379" y="794" width="53" height="161.20000000000005" fill="#f8bbd0"/>
<rect x="379" y="955.2" width="53" height="36.799999999999955" fill="#fce4ec"/>
<rect x="485" y="482" width="54" height="12" fill="#880e4f"/>
<rect x="485" y="494" width="54" height="67.70000000000005" fill="#c2185b"/>
<rect x="485" y="561.7" width="54" height="66.19999999999993" fill="#e91e63"/>
<rect x="485" y="627.9" width="54" height="95.89999999999998" fill="#f06292"/>
<rect x="485" y="723.8" width="54" height="215.70000000000005" fill="#f8bbd0"/>
<rect x="485" y="939.5" width="54" height="52.5" fill="#fce4ec"/>
<path d="M432 610 C441 610 476 482 485 482" stroke="#e3e3e3" stroke-width="3" fill="none"/>
<path d="M432 667.6 C441 667.6 476 561.7 485 561.7" stroke="#e3e3e3" stroke-width="3" fill="none"/>
<path d="M432 724.2 C441 724.2 476 627.9 485 627.9" stroke="#e3e3e3" stroke-width="3" fill="none"/>
<path d="M432 794 C441 794 476 723.8 485 723.8" stroke="#e3e3e3" stroke-width="3" fill="none"/>
<path d="M432 955.2 C441 955.2 476 939.5 485 939.5" stroke="#e3e3e3" stroke-width="3" fill="none"/>
<line x1="379" y1="992" x2="559" y2="992" stroke="#cccccc" stroke-width="2"/>
<rect x="2080.5" y="963" width="15" height="34" rx="6" fill="#fbe3ec" opacity="0.9"/>
<rect x="2082" y="966" width="12" height="12" rx="3" fill="#f4a6c2" opacity="0.8"/></svg>
<div class="a" style="left:304px;top:1512px;width:1908px;height:2px;background:#e8e8e8;"></div>
<div class="a" style="left:304px;top:1668px;width:1908px;height:2px;background:#e8e8e8;"></div>
<div class="a" style="left:304px;top:1824px;width:1908px;height:2px;background:#e8e8e8;"></div>
<div class="a" style="left:304px;top:1980px;width:1908px;height:2px;background:#e8e8e8;"></div>
<div class="a" style="left:2252px;top:223px;width:478px;height:2px;background:#e0e0e0;"></div>
<div class="a" style="left:2288px;top:451.2px;width:324px;height:63px;background:#f4f4f4;border:2px solid #e4e4e4"></div>
<div class="a" style="left:2624px;top:451.2px;width:64px;height:63px;background:#f4f4f4;border:2px solid #e4e4e4;border-radius:3px"></div>
<div class="a" style="left:2288px;top:611.4px;width:324px;height:63px;background:#f4f4f4;border:2px solid #e4e4e4"></div>
<div class="a" style="left:2624px;top:611.4px;width:64px;height:63px;background:#f4f4f4;border:2px solid #e4e4e4;border-radius:3px"></div>
<div class="a" style="left:2288px;top:771.8px;width:324px;height:63px;background:#f4f4f4;border:2px solid #e4e4e4"></div>
<div class="a" style="left:2624px;top:771.8px;width:64px;height:63px;background:#f4f4f4;border:2px solid #e4e4e4;border-radius:3px"></div>
<div class="a" style="left:2252px;top:1901px;width:478px;height:2px;background:#e0e0e0;"></div>
<div class="a" style="left:448.7px;top:1106px;width:2px;height:74px;background:#e6e6e6;"></div>
<div class="a" style="left:615.2px;top:1106px;width:2px;height:74px;background:#e6e6e6;"></div>
<div class="a" style="left:794.7px;top:1106px;width:2px;height:74px;background:#e6e6e6;"></div>
<div class="a" style="left:976px;top:1106px;width:2px;height:74px;background:#e6e6e6;"></div>
<div class="a" style="left:1171px;top:1106px;width:2px;height:74px;background:#e6e6e6;"></div>
<div class="a" style="left:1330.2px;top:1106px;width:2px;height:74px;background:#e6e6e6;"></div>
<div class="a" style="left:1653px;top:1106px;width:2px;height:74px;background:#e6e6e6;"></div>
<div class="a" style="left:1866px;top:1106px;width:2px;height:74px;background:#e6e6e6;"></div>
<div class="a" style="left:304px;top:1248px;width:200px;height:8px;background:#4285f4;"></div>
<div class="a" style="left:2307px;top:892px;width:53px;height:28px;border-radius:14px;background:#9e9e9e"></div>
<div class="a" style="left:2307px;top:988.7px;width:53px;height:28px;border-radius:14px;background:#9e9e9e"></div>
<svg class="a" style="left:205px;top:139px" width="19" height="11"><path d="M0 0H18.5L9.25 10.5Z" fill="#fff"/></svg>
<div class="a" style="left:32px;top:173px;width:200px;height:3px;background:#fff;"></div>
<svg class="a" style="left:879px;top:29px" width="22" height="13"><path d="M1.8 1.8L11 11L20.2 1.8" stroke="#000" stroke-width="3.4" fill="none"/></svg>
<svg class="a" style="left:2183px;top:47px" width="16" height="11"><path d="M0 0H15.5L7.75 10Z" fill="#757575"/></svg>
<div class="a" style="left:1973px;top:83px;width:237px;height:2px;background:#cfcfcf;"></div>
<svg class="a" style="left:2270px;top:33px" width="46" height="46" viewBox="0 0 24 24"><path fill="#212121" d="M12 7c2.76 0 5 2.24 5 5 0 .65-.13 1.26-.36 1.83l2.92 2.92c1.51-1.26 2.7-2.89 3.43-4.75-1.73-4.39-6-7.5-11-7.5-1.4 0-2.74.25-3.98.7l2.16 2.16C10.74 7.130 11.35 7 12 7zM2 4.27l2.28 2.28.46.46C3.08 8.3 1.78 10.02 1 12c1.73 4.39 6 7.5 11 7.5 1.55 0 3.03-.3 4.38-.84l.42.42L19.730 22 21 20.73 3.27 3 2 4.270zM7.53 9.8l1.55 1.55c-.05.21-.08.43-.08.65 0 1.66 1.34 3 3 3 .22 0 .44-.03.65-.08l1.55 1.55c-.67.33-1.41.53-2.2.53-2.76 0-5-2.24-5-5 0-.79.2-1.53.53-2.2zm4.31-.78l3.15 3.15.02-.16c0-1.66-1.34-3-3-3l-.17.01z"/></svg>
<div class="a" style="left:2458px;top:18px;width:2px;height:64px;background:#d0d0d0;"></div>
<svg class="a" style="left:2520px;top:28px" width="48" height="48" viewBox="0 0 24 24"><path fill="#212121" d="M19.14 12.94c.04-.3.06-.61.06-.94 0-.32-.02-.64-.07-.94l2.03-1.58c.18-.14.23-.41.12-.61l-1.92-3.32c-.12-.22-.37-.29-.59-.22l-2.39.96c-.5-.38-1.03-.7-1.62-.94l-.36-2.540c-.04-.24-.24-.41-.48-.41h-3.84c-.24 0-.43.17-.47.41l-.36 2.54c-.59.24-1.13.57-1.62.94l-2.39-.96c-.22-.08-.47 0-.59.22L2.74 8.87c-.12.21-.08.47.12.61l2.03 1.58c-.05.3-.09.63-.09.94s.02.64.07.94l-2.03 1.58c-.18.14-.23.41-.12.61l1.92 3.32c.12.22.37.29.59.22l2.39-.96c.5.38 1.03.7 1.62.94l.36 2.54c.05.24.24.41.48.41h3.84c.24 0 .44-.17.47-.41l.36-2.54c.59-.24 1.13-.56 1.62-.94l2.39.96c.22.08.47 0 .59-.22l1.92-3.32c.12-.22.07-.47-.12-.61l-2.01-1.58zM12 15.6c-1.98 0-3.6-1.62-3.6-3.6s1.62-3.6 3.6-3.6 3.6 1.62 3.6 3.6-1.62 3.6-3.6 3.6z"/></svg>
<div class="a" style="left:2615px;top:19px;width:66px;height:66px;border-radius:50%;background:#0c1829"></div>
<svg class="a" style="left:358px;top:323px" width="25" height="25"><path d="M11.5 24.5V3M1.8 12.6L11.5 2.9L21.2 12.6" stroke="#4caf50" stroke-width="2.8" fill="none"/></svg>
<svg class="a" style="left:715px;top:323px" width="25" height="25"><path d="M11.5 24.5V3M1.8 12.6L11.5 2.9L21.2 12.6" stroke="#4caf50" stroke-width="2.8" fill="none"/></svg>
<svg class="a" style="left:1070.4px;top:323px" width="25" height="25"><path d="M11.5 24.5V3M1.8 12.6L11.5 2.9L21.2 12.6" stroke="#4caf50" stroke-width="2.8" fill="none"/></svg>
<svg class="a" style="left:1426.6px;top:323px" width="25" height="25"><path d="M11.5 24.5V3M1.8 12.6L11.5 2.9L21.2 12.6" stroke="#4caf50" stroke-width="2.8" fill="none"/></svg>
<svg class="a" style="left:2134px;top:408px" width="19" height="10"><path d="M0 0H18L9 9.5Z" fill="#757575"/></svg>
<svg class="a" style="left:338px;top:1124px" width="36" height="36"><rect width="36" height="36" rx="4" fill="#fce4ec"/><path d="M8.5 18.5L15 25L28 11.5" stroke="#fff" stroke-width="4.2" fill="none"/></svg>
<svg class="a" style="left:468px;top:1124px" width="36" height="36"><rect width="36" height="36" rx="4" fill="#f8bbd0"/><path d="M8.5 18.5L15 25L28 11.5" stroke="#fff" stroke-width="4.2" fill="none"/></svg>
<svg class="a" style="left:633.8px;top:1124px" width="36" height="36"><rect width="36" height="36" rx="4" fill="#f06292"/><path d="M8.5 18.5L15 25L28 11.5" stroke="#fff" stroke-width="4.2" fill="none"/></svg>
<svg class="a" style="left:814px;top:1124px" width="36" height="36"><rect width="36" height="36" rx="4" fill="#e91e63"/><path d="M8.5 18.5L15 25L28 11.5" stroke="#fff" stroke-width="4.2" fill="none"/></svg>
<svg class="a" style="left:994.8px;top:1124px" width="36" height="36"><rect width="36" height="36" rx="4" fill="#c2185b"/><path d="M8.5 18.5L15 25L28 11.5" stroke="#fff" stroke-width="4.2" fill="none"/></svg>
<svg class="a" style="left:1190px;top:1124px" width="36" height="36"><rect width="36" height="36" rx="4" fill="#880e4f"/><path d="M8.5 18.5L15 25L28 11.5" stroke="#fff" stroke-width="4.2" fill="none"/></svg>
<svg class="a" style="left:1673px;top:1124px" width="36" height="36"><rect width="36" height="36" rx="4" fill="#8fb3cb"/><path d="M8.5 18.5L15 25L28 11.5" stroke="#fff" stroke-width="4.2" fill="none"/></svg>
<svg class="a" style="left:1886px;top:1124px" width="36" height="36"><rect width="36" height="36" rx="4" fill="#dcdcdc"/><path d="M8.5 18.5L15 25L28 11.5" stroke="#fff" stroke-width="4.2" fill="none"/></svg>
<div class="a" style="left:2122.5px;top:1291px;width:10px;height:10px;border-radius:50%;background:#757575"></div>
<div class="a" style="left:2122.5px;top:1302.7px;width:10px;height:10px;border-radius:50%;background:#757575"></div>
<div class="a" style="left:2122.5px;top:1314.5px;width:10px;height:10px;border-radius:50%;background:#757575"></div>
<svg class="a" style="left:1813px;top:1433px" width="24" height="26"><path d="M12 2V23M3.5 14.5L12 23L20.5 14.5" stroke="#212121" stroke-width="3.4" fill="none"/></svg>
<svg class="a" style="left:0;top:0" width="2732" height="2006"><rect x="1116" y="1555.5" width="39.799999999999955" height="24.3" fill="#fce4ec"/><rect x="1155.8" y="1555.5" width="155.20000000000005" height="24.3" fill="#f8bbd0"/><rect x="1311" y="1555.5" width="52" height="24.3" fill="#f06292"/><rect x="1363" y="1555.5" width="25.299999999999955" height="24.3" fill="#e91e63"/><rect x="1388.3" y="1555.5" width="17.5" height="24.3" fill="#c2185b"/><rect x="1405.8" y="1555.5" width="5.7000000000000455" height="24.3" fill="#880e4f"/></svg>
<svg class="a" style="left:0;top:0" width="2732" height="2006"><rect x="1116" y="1711.2" width="19" height="24.3" fill="#fce4ec"/><rect x="1135" y="1711.2" width="107" height="24.3" fill="#f8bbd0"/><rect x="1242" y="1711.2" width="58" height="24.3" fill="#f06292"/><rect x="1300" y="1711.2" width="36" height="24.3" fill="#e91e63"/><rect x="1336" y="1711.2" width="75.5" height="24.3" fill="#c2185b"/></svg>
<svg class="a" style="left:0;top:0" width="2732" height="2006"><rect x="1116" y="1867.5" width="14" height="24.3" fill="#fce4ec"/><rect x="1130" y="1867.5" width="75.79999999999995" height="24.3" fill="#f8bbd0"/><rect x="1205.8" y="1867.5" width="66.5" height="24.3" fill="#f06292"/><rect x="1272.3" y="1867.5" width="55.700000000000045" height="24.3" fill="#e91e63"/><rect x="1328" y="1867.5" width="77.79999999999995" height="24.3" fill="#c2185b"/><rect x="1405.8" y="1867.5" width="5.7000000000000455" height="24.3" fill="#880e4f"/></svg>
<svg class="a" style="left:2280px;top:309px" width="380" height="48"><circle cx="24" cy="24" r="17.5" stroke="#757575" stroke-width="3.6" fill="none"/><circle cx="131" cy="24" r="17.5" stroke="#757575" stroke-width="3.6" fill="none"/><circle cx="278.3" cy="24" r="17.5" stroke="#42a5f5" stroke-width="3.6" fill="none"/><circle cx="278.3" cy="24" r="9.5" fill="#42a5f5"/></svg>
<svg class="a" style="left:2568px;top:478.2px" width="19" height="10"><path d="M0 0H18.5L9.25 9.5Z" fill="#757575"/></svg>
<svg class="a" style="left:2641px;top:469.2px" width="30" height="30"><path d="M15 0V29M0.5 14.5H29.5" stroke="#757575" stroke-width="3.4"/></svg>
<svg class="a" style="left:2568px;top:638.4px" width="19" height="10"><path d="M0 0H18.5L9.25 9.5Z" fill="#757575"/></svg>
<svg class="a" style="left:2641px;top:629.4px" width="30" height="30"><path d="M15 0V29M0.5 14.5H29.5" stroke="#757575" stroke-width="3.4"/></svg>
<svg class="a" style="left:2568px;top:798.8px" width="19" height="10"><path d="M0 0H18.5L9.25 9.5Z" fill="#757575"/></svg>
<svg class="a" style="left:2641px;top:789.8px" width="30" height="30"><path d="M15 0V29M0.5 14.5H29.5" stroke="#757575" stroke-width="3.4"/></svg>
<div class="a" style="left:2290px;top:886px;width:40px;height:40px;border-radius:50%;background:#fafafa;box-shadow:0 1px 3px rgba(0,0,0,0.35)"></div>
<div class="a" style="left:2290px;top:982.7px;width:40px;height:40px;border-radius:50%;background:#fafafa;box-shadow:0 1px 3px rgba(0,0,0,0.35)"></div>
<svg class="a" style="left:2289px;top:1926px" width="50" height="50" viewBox="0 0 24 24"><path fill="#757575" d="M19.14 12.94c.04-.3.06-.61.06-.94 0-.32-.02-.64-.07-.94l2.03-1.58c.18-.14.23-.41.12-.61l-1.92-3.32c-.12-.22-.37-.29-.59-.22l-2.39.96c-.5-.38-1.03-.7-1.62-.94l-.36-2.54c-.04-.24-.24-.41-.48-.41h-3.84c-.24 0-.43.17-.47.41l-.36 2.54c-.59.24-1.13.57-1.62.94l-2.39-.96c-.22-.08-.47 0-.59.22L2.740 8.87c-.12.21-.08.47.12.61l2.03 1.58c-.05.3-.09.63-.09.94s.02.64.07.94l-2.03 1.58c-.18.14-.23.41-.12.61l1.92 3.32c.12.22.37.29.59.22l2.39-.96c.5.38 1.03.7 1.62.94l.36 2.54c.05.24.24.41.48.41h3.84c.24 0 .44-.17.47-.41l.36-2.54c.59-.24 1.13-.56 1.62-.94l2.39.96c.22.08.47 0 .59-.22l1.92-3.32c.12-.22.07-.47-.12-.61l-2.01-1.58zM12 15.6c-1.98 0-3.6-1.62-3.6-3.6s1.62-3.6 3.6-3.6 3.6 1.62 3.6 3.6-1.62 3.6-3.6 3.6z"/></svg>
<svg class="a" style="left:2663px;top:1942px" width="27" height="18"><path d="M2 15.5L13.5 4L25 15.5" stroke="#757575" stroke-width="4" fill="none"/></svg>
<div class="a" style="left:30.54px;top:31.67px;font-size:37.0px;line-height:37.0px;color:#fff;transform:scaleX(1.0546);transform-origin:0 0;-webkit-text-stroke:0.9px #fff;">Momently</div>
<div class="a" style="left:35.62px;top:131.89px;font-size:28.0px;line-height:28.0px;color:#eceef1;transform:scaleX(0.9415);transform-origin:0 0;">Momently ...</div>
<div class="a" style="left:39.80px;top:250.09px;font-size:28.0px;line-height:28.0px;color:#eceef1;-webkit-text-stroke:0.62px #eceef1;transform:scaleX(0.8488);transform-origin:0 0;">EXPLORE</div>
<div class="a" style="left:39.81px;top:330.09px;font-size:28.0px;line-height:28.0px;color:#eceef1;-webkit-text-stroke:0.62px #eceef1;transform:scaleX(0.8474);transform-origin:0 0;">REPORTS</div>
<div class="a" style="left:31.03px;top:1574.26px;font-size:24.5px;line-height:24.5px;color:#eceef1;-webkit-text-stroke:0.54px #eceef1;transform:scaleX(0.9742);transform-origin:0 0;">Usage resets</div>
<div class="a" style="left:32.00px;top:1603.26px;font-size:24.5px;line-height:24.5px;color:#eceef1;-webkit-text-stroke:0.54px #eceef1;">tomorrow</div>
<div class="a" style="left:31.08px;top:1653.96px;font-size:24.5px;line-height:24.5px;color:#8b95a1;transform:scaleX(0.9172);transform-origin:0 0;">1,834,026 / 2M</div>
<div class="a" style="left:32.00px;top:1692.86px;font-size:24.5px;line-height:24.5px;color:#8b95a1;transform:scaleX(0.8268);transform-origin:0 0;">VIEWS</div>
<div class="a" style="left:67.14px;top:1824.09px;font-size:28.0px;line-height:28.0px;color:#eceef1;-webkit-text-stroke:0.62px #eceef1;transform:scaleX(0.9279);transform-origin:0 0;">UPGRADE</div>
<div class="a" style="left:30.03px;top:1946.56px;font-size:24.5px;line-height:24.5px;color:#8b95a1;-webkit-text-stroke:0.54px #8b95a1;transform:scaleX(0.9865);transform-origin:0 0;">Privacy</div>
<div class="a" style="left:127.00px;top:1946.56px;font-size:24.5px;line-height:24.5px;color:#8b95a1;-webkit-text-stroke:0.54px #8b95a1;transform:scaleX(1.0084);transform-origin:0 0;">Terms</div>
<div class="a" style="left:310.91px;top:21.72px;font-size:29.5px;line-height:29.5px;color:#000;transform:scaleX(0.9428);transform-origin:0 0;">May 21, 12:00:00 AM - May 27, 11:59:59 PM</div>
<div class="a" style="left:312.80px;top:63.35px;font-size:22.5px;line-height:22.5px;color:#757575;transform:scaleX(0.9701);transform-origin:0 0;">vs. May 14, 12:00:00 AM - May 20, 11:59:59 PM</div>
<div class="a" style="left:1973.15px;top:36.87px;font-size:28.5px;line-height:28.5px;color:#757575;-webkit-text-stroke:0.63px #757575;transform:scaleX(0.8520);transform-origin:0 0;">SCROLL DEPTH</div>
<div class="a" style="left:2317.16px;top:36.87px;font-size:28.5px;line-height:28.5px;color:#757575;-webkit-text-stroke:0.63px #757575;transform:scaleX(0.9200);transform-origin:0 0;">FILTER</div>
<div class="a" style="left:352.00px;top:219.45px;font-size:29.0px;line-height:29.0px;color:#757575;transform:scaleX(0.9655);transform-origin:0 0;">Views</div>
<div class="a" style="left:350.56px;top:260.70px;font-size:53.5px;line-height:53.5px;color:#212121;transform:scaleX(0.9855);transform-origin:0 0;">110,670</div>
<div class="a" style="left:388.50px;top:329.06px;font-size:24.5px;line-height:24.5px;color:#4caf50;transform:scaleX(0.9501);transform-origin:0 0;">33.1% (+28k)</div>
<div class="a" style="left:709.00px;top:219.45px;font-size:29.0px;line-height:29.0px;color:#757575;transform:scaleX(0.9825);transform-origin:0 0;">Visitors</div>
<div class="a" style="left:710.58px;top:260.70px;font-size:53.5px;line-height:53.5px;color:#212121;transform:scaleX(0.9199);transform-origin:0 0;">48,651</div>
<div class="a" style="left:745.50px;top:329.06px;font-size:24.5px;line-height:24.5px;color:#4caf50;transform:scaleX(0.9467);transform-origin:0 0;">59.3% (+18k)</div>
<div class="a" style="left:1064.40px;top:219.45px;font-size:29.0px;line-height:29.0px;color:#757575;transform:scaleX(0.9897);transform-origin:0 0;">Time</div>
<div class="a" style="left:1064.96px;top:260.70px;font-size:53.5px;line-height:53.5px;color:#212121;transform:scaleX(0.9717);transform-origin:0 0;">36,717 min</div>
<div class="a" style="left:1100.90px;top:329.06px;font-size:24.5px;line-height:24.5px;color:#4caf50;transform:scaleX(0.9440);transform-origin:0 0;">32.1% (+8,919)</div>
<div class="a" style="left:1420.60px;top:219.45px;font-size:29.0px;line-height:29.0px;color:#757575;transform:scaleX(0.9639);transform-origin:0 0;">Time Per Visitor</div>
<div class="a" style="left:1422.11px;top:260.70px;font-size:53.5px;line-height:53.5px;color:#212121;transform:scaleX(0.9867);transform-origin:0 0;">45s</div>
<div class="a" style="left:1456.14px;top:329.06px;font-size:24.5px;line-height:24.5px;color:#4caf50;transform:scaleX(0.9616);transform-origin:0 0;">22.28% (+23s)</div>
<div class="a" style="left:1817.20px;top:399.41px;font-size:25.5px;line-height:25.5px;color:#757575;transform:scaleX(0.8678);transform-origin:0 0;">TOTAL VIEWS BY</div>
<div class="a" style="left:2016.80px;top:398.26px;font-size:24.5px;line-height:24.5px;color:#212121;transform:scaleX(0.9045);transform-origin:0 0;">1 HOUR</div>
<div class="a" style="left:2105.80px;top:599.26px;font-size:24.5px;line-height:24.5px;color:#bdbdbd;transform:scaleX(0.9393);transform-origin:0 0;">4,000</div>
<div class="a" style="left:2105.86px;top:779.26px;font-size:24.5px;line-height:24.5px;color:#bdbdbd;transform:scaleX(0.9383);transform-origin:0 0;">2,000</div>
<div class="a" style="left:2151.80px;top:960.53px;font-size:23.0px;line-height:23.0px;color:#bdbdbd;transform:scaleX(0.9167);transform-origin:0 0;">0</div>
<div class="a" style="left:721.68px;top:1012.10px;font-size:23.5px;line-height:23.5px;color:#7e7e7e;">Mon</div>
<div class="a" style="left:932.42px;top:1012.10px;font-size:23.5px;line-height:23.5px;color:#7e7e7e;">Tue</div>
<div class="a" style="left:1138.79px;top:1012.10px;font-size:23.5px;line-height:23.5px;color:#7e7e7e;">Wed</div>
<div class="a" style="left:1351.39px;top:1012.10px;font-size:23.5px;line-height:23.5px;color:#7e7e7e;">Thu</div>
<div class="a" style="left:1564.91px;top:1012.10px;font-size:23.5px;line-height:23.5px;color:#7e7e7e;">Fri</div>
<div class="a" style="left:1769.13px;top:1012.10px;font-size:23.5px;line-height:23.5px;color:#7e7e7e;">Sat</div>
<div class="a" style="left:1974.63px;top:1012.10px;font-size:23.5px;line-height:23.5px;color:#7e7e7e;">Sun</div>
<div class="a" style="left:358.82px;top:1000.18px;font-size:24.0px;line-height:24.0px;color:#757575;transform:scaleX(0.9765);transform-origin:0 0;">Previous</div>
<div class="a" style="left:378.14px;top:1035.88px;font-size:24.0px;line-height:24.0px;color:#757575;transform:scaleX(0.9392);transform-origin:0 0;">week</div>
<div class="a" style="left:458.62px;top:1000.18px;font-size:24.0px;line-height:24.0px;color:#757575;transform:scaleX(0.9791);transform-origin:0 0;">Last week</div>
<div class="a" style="left:397.38px;top:1129.11px;font-size:25.5px;line-height:25.5px;color:#212121;transform:scaleX(0.9209);transform-origin:0 0;">0%</div>
<div class="a" style="left:527.75px;top:1129.11px;font-size:25.5px;line-height:25.5px;color:#212121;transform:scaleX(0.9495);transform-origin:0 0;">0-25%</div>
<div class="a" style="left:693.54px;top:1129.11px;font-size:25.5px;line-height:25.5px;color:#212121;transform:scaleX(0.9627);transform-origin:0 0;">25-50%</div>
<div class="a" style="left:874.64px;top:1129.11px;font-size:25.5px;line-height:25.5px;color:#212121;transform:scaleX(0.9557);transform-origin:0 0;">50-75%</div>
<div class="a" style="left:1054.02px;top:1129.11px;font-size:25.5px;line-height:25.5px;color:#212121;transform:scaleX(0.9811);transform-origin:0 0;">75-100%</div>
<div class="a" style="left:1250.05px;top:1129.11px;font-size:25.5px;line-height:25.5px;color:#212121;transform:scaleX(0.9536);transform-origin:0 0;">100%</div>
<div class="a" style="left:1731.76px;top:1129.11px;font-size:25.5px;line-height:25.5px;color:#212121;transform:scaleX(1.0189);transform-origin:0 0;">Last week</div>
<div class="a" style="left:1944.99px;top:1129.11px;font-size:25.5px;line-height:25.5px;color:#212121;transform:scaleX(1.0056);transform-origin:0 0;">Previous week</div>
<div class="a" style="left:334.66px;top:1290.58px;font-size:30.5px;line-height:30.5px;color:#212121;-webkit-text-stroke:0.67px #212121;transform:scaleX(0.9711);transform-origin:0 0;">Pages</div>
<div class="a" style="left:536.40px;top:1290.58px;font-size:30.5px;line-height:30.5px;color:#757575;transform:scaleX(0.9842);transform-origin:0 0;">Authors</div>
<div class="a" style="left:735.62px;top:1290.58px;font-size:30.5px;line-height:30.5px;color:#757575;transform:scaleX(0.9833);transform-origin:0 0;">Sections</div>
<div class="a" style="left:934.47px;top:1290.58px;font-size:30.5px;line-height:30.5px;color:#757575;transform:scaleX(0.9627);transform-origin:0 0;">Referrers</div>
<div class="a" style="left:336.60px;top:1436.16px;font-size:24.5px;line-height:24.5px;color:#212121;transform:scaleX(0.9222);transform-origin:0 0;">% Views</div>
<div class="a" style="left:947.19px;top:1436.16px;font-size:24.5px;line-height:24.5px;color:#212121;transform:scaleX(1.0099);transform-origin:0 0;">Scroll</div>
<div class="a" style="left:946.22px;top:1468.86px;font-size:24.5px;line-height:24.5px;color:#212121;transform:scaleX(0.9880);transform-origin:0 0;">Depth</div>
<div class="a" style="left:1116.20px;top:1437.26px;font-size:24.5px;line-height:24.5px;color:#212121;transform:scaleX(0.9718);transform-origin:0 0;">View Breakdown</div>
<div class="a" style="left:1114.27px;top:1468.66px;font-size:24.5px;line-height:24.5px;color:#212121;transform:scaleX(0.9626);transform-origin:0 0;">By Scroll Depth</div>
<div class="a" style="left:1476.00px;top:1437.26px;font-size:24.5px;line-height:24.5px;color:#212121;transform:scaleX(0.9790);transform-origin:0 0;">Views</div>
<div class="a" style="left:1719.60px;top:1437.26px;font-size:24.5px;line-height:24.5px;color:#212121;transform:scaleX(1.0122);transform-origin:0 0;">Visitors</div>
<div class="a" style="left:1963.90px;top:1437.26px;font-size:24.5px;line-height:24.5px;color:#212121;transform:scaleX(0.9824);transform-origin:0 0;">Time Per Visitor</div>
<div class="a" style="left:335.68px;top:1551.91px;font-size:32.0px;line-height:32.0px;color:#9e9e9e;transform:scaleX(0.9202);transform-origin:0 0;">51%</div>
<div class="a" style="left:447.61px;top:1551.91px;font-size:32.0px;line-height:32.0px;color:#212121;transform:scaleX(0.9946);transform-origin:0 0;">3 keys to data-driven content</div>
<div class="a" style="left:448.60px;top:1595.61px;font-size:32.0px;line-height:32.0px;color:#212121;">strategy</div>
<div class="a" style="left:947.27px;top:1551.91px;font-size:32.0px;line-height:32.0px;color:#212121;transform:scaleX(0.9314);transform-origin:0 0;">26%</div>
<div class="a" style="left:947.28px;top:1598.26px;font-size:24.5px;line-height:24.5px;color:#9e9e9e;transform:scaleX(0.9230);transform-origin:0 0;">-7.69%</div>
<div class="a" style="left:1114.94px;top:1597.86px;font-size:24.5px;line-height:24.5px;color:#212121;transform:scaleX(1.0556);transform-origin:0 0;">8/100</div>
<div class="a" style="left:1226.50px;top:1597.86px;font-size:24.5px;line-height:24.5px;color:#757575;transform:scaleX(0.9537);transform-origin:0 0;">seen at least 75%</div>
<div class="a" style="left:1476.07px;top:1551.64px;font-size:33.5px;line-height:33.5px;color:#212121;transform:scaleX(0.9303);transform-origin:0 0;">56,423</div>
<div class="a" style="left:1476.05px;top:1597.86px;font-size:24.5px;line-height:24.5px;color:#9e9e9e;transform:scaleX(0.9467);transform-origin:0 0;">20.4% (+9,573)</div>
<div class="a" style="left:1719.33px;top:1551.64px;font-size:33.5px;line-height:33.5px;color:#212121;transform:scaleX(0.9700);transform-origin:0 0;">28,114</div>
<div class="a" style="left:1719.35px;top:1597.86px;font-size:24.5px;line-height:24.5px;color:#4caf50;transform:scaleX(0.9497);transform-origin:0 0;">23.2% (+5,292)</div>
<div class="a" style="left:1963.01px;top:1551.64px;font-size:33.5px;line-height:33.5px;color:#212121;transform:scaleX(0.9892);transform-origin:0 0;">27s</div>
<div class="a" style="left:1963.03px;top:1597.86px;font-size:24.5px;line-height:24.5px;color:#9e9e9e;transform:scaleX(0.9664);transform-origin:0 0;">75.3% (+12s)</div>
<div class="a" style="left:334.73px;top:1707.61px;font-size:32.0px;line-height:32.0px;color:#9e9e9e;transform:scaleX(0.9352);transform-origin:0 0;">18%</div>
<div class="a" style="left:446.57px;top:1707.61px;font-size:32.0px;line-height:32.0px;color:#212121;transform:scaleX(1.0146);transform-origin:0 0;">How to compare content</div>
<div class="a" style="left:446.55px;top:1751.31px;font-size:32.0px;line-height:32.0px;color:#212121;transform:scaleX(1.0258);transform-origin:0 0;">performance</div>
<div class="a" style="left:948.20px;top:1707.61px;font-size:32.0px;line-height:32.0px;color:#212121;transform:scaleX(0.9168);transform-origin:0 0;">41%</div>
<div class="a" style="left:1114.96px;top:1753.56px;font-size:24.5px;line-height:24.5px;color:#212121;transform:scaleX(1.0422);transform-origin:0 0;">26/100</div>
<div class="a" style="left:1226.50px;top:1753.56px;font-size:24.5px;line-height:24.5px;color:#757575;transform:scaleX(0.9537);transform-origin:0 0;">seen at least 75%</div>
<div class="a" style="left:1475.12px;top:1707.34px;font-size:33.5px;line-height:33.5px;color:#212121;transform:scaleX(0.9396);transform-origin:0 0;">19,663</div>
<div class="a" style="left:1718.39px;top:1707.34px;font-size:33.5px;line-height:33.5px;color:#212121;transform:scaleX(0.9541);transform-origin:0 0;">14,181</div>
<div class="a" style="left:1963.01px;top:1707.34px;font-size:33.5px;line-height:33.5px;color:#212121;transform:scaleX(0.9892);transform-origin:0 0;">39s</div>
<div class="a" style="left:335.71px;top:1863.91px;font-size:32.0px;line-height:32.0px;color:#9e9e9e;transform:scaleX(0.8885);transform-origin:0 0;">2%</div>
<div class="a" style="left:446.56px;top:1863.91px;font-size:32.0px;line-height:32.0px;color:#212121;transform:scaleX(1.0190);transform-origin:0 0;">How to master content</div>
<div class="a" style="left:448.60px;top:1907.61px;font-size:32.0px;line-height:32.0px;color:#212121;transform:scaleX(1.0170);transform-origin:0 0;">segmentation with Momently</div>
<div class="a" style="left:948.20px;top:1863.91px;font-size:32.0px;line-height:32.0px;color:#212121;transform:scaleX(0.9168);transform-origin:0 0;">47%</div>
<div class="a" style="left:947.27px;top:1910.26px;font-size:24.5px;line-height:24.5px;color:#9e9e9e;transform:scaleX(0.9277);transform-origin:0 0;">-21.28%</div>
<div class="a" style="left:1114.96px;top:1909.86px;font-size:24.5px;line-height:24.5px;color:#212121;transform:scaleX(1.0422);transform-origin:0 0;">29/100</div>
<div class="a" style="left:1226.50px;top:1909.86px;font-size:24.5px;line-height:24.5px;color:#757575;transform:scaleX(0.9537);transform-origin:0 0;">seen at least 75%</div>
<div class="a" style="left:1476.06px;top:1863.64px;font-size:33.5px;line-height:33.5px;color:#212121;transform:scaleX(0.9396);transform-origin:0 0;">2,192</div>
<div class="a" style="left:1476.05px;top:1909.86px;font-size:24.5px;line-height:24.5px;color:#9e9e9e;transform:scaleX(0.9461);transform-origin:0 0;">802.1% (+1,949)</div>
<div class="a" style="left:1718.42px;top:1863.64px;font-size:33.5px;line-height:33.5px;color:#212121;transform:scaleX(0.9396);transform-origin:0 0;">1,918</div>
<div class="a" style="left:1719.34px;top:1909.86px;font-size:24.5px;line-height:24.5px;color:#4caf50;transform:scaleX(0.9556);transform-origin:0 0;">914.8% (+1,729)</div>
<div class="a" style="left:1963.01px;top:1863.64px;font-size:33.5px;line-height:33.5px;color:#212121;transform:scaleX(0.9892);transform-origin:0 0;">20s</div>
<div class="a" style="left:1963.05px;top:1909.86px;font-size:24.5px;line-height:24.5px;color:#9e9e9e;transform:scaleX(0.9544);transform-origin:0 0;">7.6% (2s)</div>
<div class="a" style="left:2283.41px;top:154.21px;font-size:34.0px;line-height:34.0px;color:#212121;transform:scaleX(0.9442);transform-origin:0 0;">Filter Panel</div>
<div class="a" style="left:2289.73px;top:260.17px;font-size:22.0px;line-height:22.0px;color:#757575;transform:scaleX(0.9716);transform-origin:0 0;">Page Type</div>
<div class="a" style="left:2333.00px;top:321.56px;font-size:24.5px;line-height:24.5px;color:#212121;transform:scaleX(0.9890);transform-origin:0 0;">All</div>
<div class="a" style="left:2438.05px;top:321.56px;font-size:24.5px;line-height:24.5px;color:#212121;transform:scaleX(0.9729);transform-origin:0 0;">Pages</div>
<div class="a" style="left:2584.99px;top:321.56px;font-size:24.5px;line-height:24.5px;color:#212121;transform:scaleX(1.0047);transform-origin:0 0;">Posts</div>
<div class="a" style="left:2290.70px;top:414.37px;font-size:22.0px;line-height:22.0px;color:#757575;transform:scaleX(0.9780);transform-origin:0 0;">Audience Behavior</div>
<div class="a" style="left:2300.98px;top:470.25px;font-size:29.0px;line-height:29.0px;color:#212121;transform:scaleX(0.9582);transform-origin:0 0;">Engaged Time</div>
<div class="a" style="left:2290.70px;top:574.17px;font-size:22.0px;line-height:22.0px;color:#757575;">Traffic Property</div>
<div class="a" style="left:2301.04px;top:630.45px;font-size:29.0px;line-height:29.0px;color:#212121;transform:scaleX(0.9322);transform-origin:0 0;">Referrer</div>
<div class="a" style="left:2289.70px;top:734.87px;font-size:22.0px;line-height:22.0px;color:#757575;transform:scaleX(0.9963);transform-origin:0 0;">Content Property</div>
<div class="a" style="left:2302.90px;top:790.85px;font-size:29.0px;line-height:29.0px;color:#212121;transform:scaleX(0.9512);transform-origin:0 0;">Author</div>
<div class="a" style="left:2376.83px;top:893.59px;font-size:26.0px;line-height:26.0px;color:#212121;transform:scaleX(0.9354);transform-origin:0 0;">Is Landing</div>
<div class="a" style="left:2377.78px;top:989.49px;font-size:26.0px;line-height:26.0px;color:#212121;transform:scaleX(0.9234);transform-origin:0 0;">Show content container only</div>
<div class="a" style="left:2353.15px;top:1938.79px;font-size:26.0px;line-height:26.0px;color:#757575;-webkit-text-stroke:0.57px #757575;transform:scaleX(0.9227);transform-origin:0 0;">DASHBOARD</div>
<div class="a" style="left:2636.50px;top:38.14px;font-size:27.0px;line-height:27.0px;color:#fff;-webkit-text-stroke:0.59px #fff;">M</div>
</body></html>
